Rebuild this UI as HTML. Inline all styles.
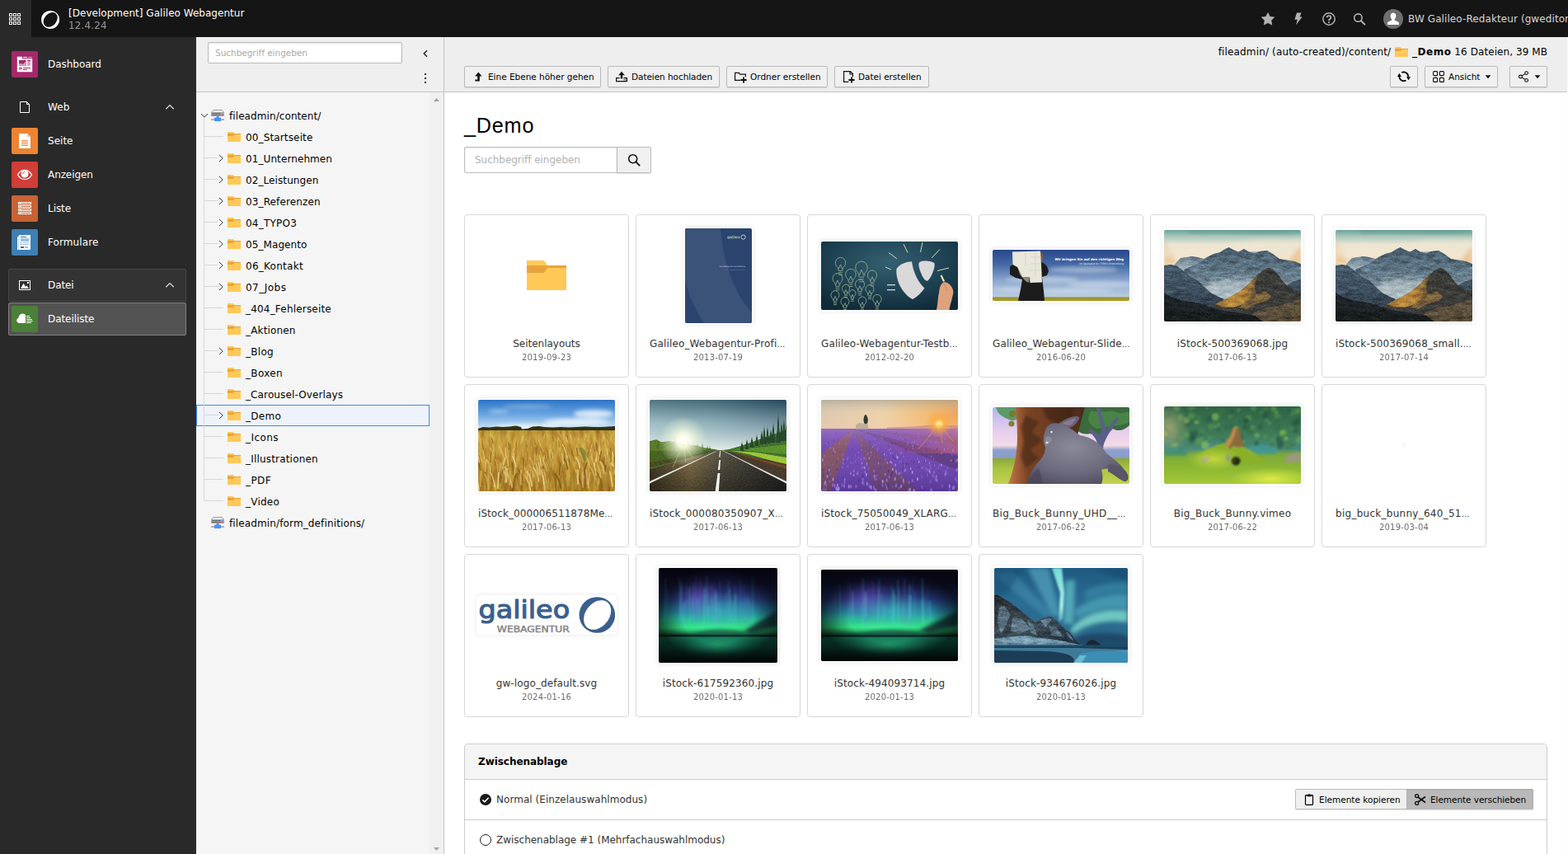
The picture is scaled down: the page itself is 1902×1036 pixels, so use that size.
<!DOCTYPE html>
<html lang="de">
<head>
<meta charset="utf-8">
<title>[Development] Galileo Webagentur - TYPO3 CMS 12.4.24</title>
<style>
*{box-sizing:border-box}
html,body{margin:0;padding:0}
html{overflow:hidden}
body{width:1902px;height:1036px;overflow:hidden;position:relative;background:#fff;font-family:"DejaVu Sans","Liberation Sans",Verdana,sans-serif;font-size:12px;line-height:18px;color:#000}
.abs{position:absolute}
svg{display:block}
/* topbar */
#topbar{position:absolute;left:0;top:0;width:1902px;height:45px;background:#151515;color:#fff;overflow:hidden}
#toggle{position:absolute;left:0;top:0;width:38px;height:45px;background:#292929}
#sitename{position:absolute;left:83px;top:8px;font-size:12px;line-height:16px;white-space:nowrap;color:#fff}
#sitever{position:absolute;left:83px;top:23px;font-size:12px;line-height:16px;color:#fff;opacity:.55;white-space:nowrap}
#user{position:absolute;left:1708px;top:15px;font-size:12px;line-height:16px;white-space:nowrap;color:#d6d6d6}
/* module menu */
#modmenu{position:absolute;left:0;top:45px;width:238px;height:991px;background:#292929;border-right:1px solid #2f2f2f;color:#fff}
.mm{position:absolute;left:10px;width:216px;height:40px;border:1px solid transparent;border-radius:2px}
.mm .ic{position:absolute;left:3px;top:3px;width:32px;height:32px;border-radius:2px}
.mm .lb{position:absolute;left:47px;top:10px;font-size:12px;line-height:18px;white-space:nowrap;color:#fff}
.mm .chev{position:absolute;left:187px;top:11px}
/* nav tree */
#nav{position:absolute;left:238px;top:45px;width:301px;height:991px;background:#f5f5f5;border-right:1px solid #c3c3c3}
#navtool{position:absolute;left:0;top:0;width:300px;height:67px;background:#efefef;border-bottom:1px solid #c3c3c3}
#navsearch{position:absolute;left:14px;top:6px;width:236px;height:26px;border:1px solid #bbb;border-radius:2px;background:#fff;box-shadow:inset 0 1px 2px rgba(0,0,0,.09);font-size:10.5px;line-height:24px;padding-left:8px;color:#aaa;white-space:nowrap}
#navscroll{position:absolute;left:283px;top:67px;width:17px;height:924px;background:#f0f0f0}
.tr{position:absolute;left:0;width:283px;height:26px;font-size:12px;line-height:26px;white-space:nowrap;color:#000}
.tr .tx{position:absolute;top:1px}
.tr .fi{position:absolute;top:5px}
.tr .cv{position:absolute;top:8px}
.tr.sel{background:#eef3fb;border:1px solid #3b8de5}
.tl{position:absolute;background:#d7d7d7}
/* content */
#content{position:absolute;left:539px;top:45px;width:1362px;height:991px;background:#fff;overflow:hidden}
#dochead{position:absolute;left:0;top:0;width:1362px;height:67px;background:#eee;border-bottom:1px solid #c3c3c3}
#path{position:absolute;right:24px;top:9px;font-size:12px;line-height:18px;white-space:nowrap;color:#000}
.btn{position:absolute;top:35px;height:26px;border:1px solid #bbb;border-radius:2px;background:#f0f0f0;box-shadow:0 1px 1px rgba(0,0,0,.12);font-size:10.5px;line-height:24px;white-space:nowrap;color:#000}
.btn .bi{position:absolute;top:4px}
.btn .bt{position:absolute;top:0}
h1{position:absolute;left:24px;top:87px;margin:0;font-family:"Liberation Sans","DejaVu Sans",sans-serif;font-size:25.2px;line-height:40px;letter-spacing:.8px;font-weight:400;white-space:nowrap}
#search{position:absolute;left:24px;top:133px;width:186px;height:32px;border:1px solid #bbb;border-radius:2px 0 0 2px;background:#fff;box-shadow:inset 0 1px 2px rgba(0,0,0,.09);font-size:12px;line-height:30px;padding-left:12px;color:#b2b2b2;white-space:nowrap}
#searchbtn{position:absolute;left:209px;top:133px;width:42px;height:32px;border:1px solid #bbb;border-radius:0 2px 2px 0;background:#f0f0f0;box-shadow:0 1px 1px rgba(0,0,0,.12)}
.card{position:absolute;width:200px;height:198px;border:1px solid #d7d7d7;border-radius:4px;background:#fff}
.card .pv{position:absolute;left:16px;top:15px;width:166px;height:116px}
.card .th{position:absolute;border-radius:2px;box-shadow:0 0 0 2px #fff,0 0 5px 3px rgba(0,0,0,.07);overflow:hidden}
.card .nm{position:absolute;left:0;top:147px;width:198px;text-align:center;font-size:12px;line-height:18px;color:#333;white-space:nowrap}
.card .dt{position:absolute;left:0;top:163px;width:198px;text-align:center;font-size:10px;line-height:20px;color:#000;opacity:.6;white-space:nowrap}
#panel{position:absolute;left:24px;top:857px;width:1314px;height:200px;border:1px solid #ccc;border-radius:4px;background:#fff}
#panelhead{position:absolute;left:0;top:0;width:1312px;height:43px;background:#f5f5f5;border-bottom:1px solid #ccc;border-radius:3px 3px 0 0}
#paneltitle{position:absolute;left:16px;top:12px;font-weight:700;font-size:12px;line-height:18px;white-space:nowrap}
.prow{position:absolute;left:0;width:1312px;height:49px;border-bottom:1px solid #ccc}
.prow .rt{position:absolute;left:38px;top:15px;font-size:12px;line-height:18px;color:#333;white-space:nowrap}
.prow .ri{position:absolute;left:17px;top:16px}
</style>
</head>
<body>

<svg width="0" height="0" style="position:absolute"><defs><filter id="txmt" x="0" y="0" width="100%" height="100%" color-interpolation-filters="sRGB"><feTurbulence type="fractalNoise" baseFrequency="0.09 0.22" numOctaves="4" seed="4"/><feColorMatrix type="matrix" values="0.6 0.6 0.6 0 -0.4  0.6 0.6 0.6 0 -0.4  0.6 0.6 0.6 0 -0.4  0 0 0 0 0.4" result="n0"/><feBlend in="n0" in2="SourceGraphic" mode="overlay" result="b0"/><feTurbulence type="fractalNoise" baseFrequency="0.5 0.9" numOctaves="3" seed="9"/><feColorMatrix type="matrix" values="0.7 0.7 0.7 0 -0.55  0.7 0.7 0.7 0 -0.55  0.7 0.7 0.7 0 -0.55  0 0 0 0 0.4" result="n1"/><feBlend in="n1" in2="b0" mode="soft-light" result="b1"/><feComposite in="b1" in2="SourceGraphic" operator="in"/></filter><filter id="txrd" x="0" y="0" width="100%" height="100%" color-interpolation-filters="sRGB"><feTurbulence type="fractalNoise" baseFrequency="0.5 0.9" numOctaves="3" seed="9"/><feColorMatrix type="matrix" values="0.7 0.7 0.7 0 -0.55  0.7 0.7 0.7 0 -0.55  0.7 0.7 0.7 0 -0.55  0 0 0 0 0.3" result="n0"/><feBlend in="n0" in2="SourceGraphic" mode="soft-light" result="b0"/><feComposite in="b0" in2="SourceGraphic" operator="in"/></filter><filter id="txwh" x="0" y="0" width="100%" height="100%" color-interpolation-filters="sRGB"><feTurbulence type="fractalNoise" baseFrequency="0.25 0.06" numOctaves="3" seed="12"/><feColorMatrix type="matrix" values="0.6 0.6 0.6 0 -0.4  0.6 0.6 0.6 0 -0.4  0.6 0.6 0.6 0 -0.4  0 0 0 0 0.4" result="n0"/><feBlend in="n0" in2="SourceGraphic" mode="overlay" result="b0"/><feComposite in="b0" in2="SourceGraphic" operator="in"/></filter></defs></svg>
<div id="topbar">
<div id="toggle"><svg class="abs" style="left:10px;top:15px" width="16" height="16" viewBox="0 0 16 16"><g fill="none" stroke="#fff" stroke-width="1"><rect x="1.5" y="1.5" width="3" height="3"/><rect x="6.5" y="1.5" width="3" height="3"/><rect x="11.5" y="1.5" width="3" height="3"/><rect x="1.5" y="6.5" width="3" height="3"/><rect x="6.5" y="6.5" width="3" height="3"/><rect x="11.5" y="6.5" width="3" height="3"/><rect x="1.5" y="11.5" width="3" height="3"/><rect x="6.5" y="11.5" width="3" height="3"/><rect x="11.5" y="11.5" width="3" height="3"/></g></svg></div>
<svg class="abs" style="left:48px;top:11px" width="26" height="26" viewBox="0 0 26 26"><circle cx="13.1" cy="12.9" r="11" fill="#fff"/><ellipse cx="13.2" cy="12.9" rx="9.9" ry="7.4" transform="rotate(-50 13.2 12.9)" fill="#151515"/></svg>
<div id="sitename"><span style="letter-spacing:0.027px">[Development] Galileo Webagentur</span></div>
<div id="sitever"><span style="letter-spacing:0.156px">12.4.24</span></div>
<svg class="abs" style="left:1530px;top:15px" width="16" height="16" viewBox="0 0 16 16"><path d="M8 0.6 L10.3 5.3 L15.6 6 L11.8 9.7 L12.7 15 L8 12.5 L3.3 15 L4.2 9.7 L0.4 6 L5.7 5.3z" fill="#b3b3b3" stroke="#b3b3b3" stroke-width=".8" stroke-linejoin="round"/></svg>
<svg class="abs" style="left:1567px;top:15px" width="16" height="16" viewBox="0 0 16 16"><path d="M6 0.6 H11.6 L9.6 5.4 H12.6 L5 15.4 L6.8 8.8 H3.4z" fill="#b3b3b3"/></svg>
<svg class="abs" style="left:1604px;top:15px" width="16" height="16" viewBox="0 0 16 16"><circle cx="8" cy="8" r="7.2" fill="none" stroke="#b3b3b3" stroke-width="1.5"/><path d="M5.6 6.3 C5.6 3.3 10.4 3.3 10.4 6.2 C10.4 8 8 8 8 9.9" fill="none" stroke="#b3b3b3" stroke-width="1.8"/><circle cx="8" cy="12.1" r="1.15" fill="#b3b3b3"/></svg>
<svg class="abs" style="left:1641px;top:15px" width="16" height="16" viewBox="0 0 16 16"><circle cx="6.4" cy="6.6" r="4.7" fill="none" stroke="#b3b3b3" stroke-width="1.6"/><path d="M10 10.2 L14.4 14.6" stroke="#b3b3b3" stroke-width="2" stroke-linecap="round"/></svg>
<svg class="abs" style="left:1678px;top:11px" width="24" height="24" viewBox="0 0 24 24"><circle cx="12" cy="12" r="12" fill="#6e6e6e"/><path d="M12 4.5 C14.2 4.5 15.3 6 15.3 8.2 C15.3 10 14.6 11.6 13.6 12.6 L13.6 13.6 C15 14.4 18.6 15 19 17 L19 19 H5 L5 17 C5.4 15 9 14.4 10.4 13.6 L10.4 12.6 C9.4 11.6 8.7 10 8.7 8.2 C8.7 6 9.8 4.5 12 4.5z" fill="#fff"/></svg>
<div id="user"><span style="letter-spacing:0.092px">BW Galileo-Redakteur (gweditor)</span></div>
</div>

<div id="modmenu">
<div class="mm" style="top:13px"><div class="ic" style="background:#a5286b"><svg width="32" height="32" viewBox="0 0 32 32"><path d="M6.8 6.8H13V9H25.2V25.2H6.8z" fill="#fff"/><rect x="14" y="7" width="5" height="1" fill="#fff"/><rect x="20" y="7" width="5" height="1" fill="#fff" opacity=".6"/><rect x="9" y="11" width="8.8" height="6.8" fill="#a5286b"/><path d="M9 17.8V15.6L11 14.8L13 15.8L15 15.2L17.8 11.6V17.8z" fill="#dc9fc0"/><rect x="19" y="11" width="4" height="6.8" fill="#dc9fc0"/><rect x="19" y="11" width="4" height="1" fill="#a5286b"/><rect x="9" y="20" width="3.8" height="3" fill="#dc9fc0"/><rect x="9" y="20" width="3.8" height="1" fill="#a5286b"/><rect x="14" y="20" width="9" height="1" fill="#a5286b"/><rect x="14" y="22" width="5" height="1" fill="#a5286b"/></svg></div><div class="lb"><span style="letter-spacing:-0.024px">Dashboard</span></div></div>
<div class="mm" style="top:65px"><svg class="abs" style="left:11px;top:11px" width="16" height="16" viewBox="0 0 16 16"><path d="M2.5 1.5H10.5L13.5 4.5V14.5H2.5z M10.5 1.5V4.5H13.5" fill="none" stroke="#fff" stroke-width="1" stroke-linejoin="round"/></svg><div class="lb"><span style="letter-spacing:0.111px">Web</span></div><svg class="chev" width="16" height="16" viewBox="0 0 16 16"><path d="M3.3 10.2 L8 5.6 L12.7 10.2" fill="none" stroke="#e0e0e0" stroke-width="1.2"/></svg></div>
<div class="mm" style="top:106px"><div class="ic" style="background:#ee8432"><svg width="32" height="32" viewBox="0 0 32 32"><path d="M9 7H19L23 11V25H9z" fill="#fff"/><path d="M19 7L23 11H19z" fill="#f7c79f"/><rect x="12" y="15" width="8" height="1" fill="#ee8432"/><rect x="12" y="17" width="8" height="1" fill="#ee8432"/><rect x="12" y="19" width="8" height="1" fill="#ee8432"/><rect x="12" y="21" width="8" height="1" fill="#ee8432"/></svg></div><div class="lb"><span style="letter-spacing:0.021px">Seite</span></div></div>
<div class="mm" style="top:147px"><div class="ic" style="background:#d13d37"><svg width="32" height="32" viewBox="0 0 32 32"><path d="M7.4 16 C10 11.8 13 10.4 16 10.4 C19 10.4 22 11.8 24.6 16 C22 20.2 19 21.6 16 21.6 C13 21.6 10 20.2 7.4 16z" fill="none" stroke="#fff" stroke-width="1.3"/><circle cx="16" cy="15" r="4.5" fill="#fff"/><path d="M13.6 14.6 C13.7 13.2 14.6 12.4 15.9 12.3" fill="none" stroke="#d13d37" stroke-width="1" stroke-linecap="round"/></svg></div><div class="lb"><span style="letter-spacing:-0.083px">Anzeigen</span></div></div>
<div class="mm" style="top:188px"><div class="ic" style="background:#c96334"><svg width="32" height="32" viewBox="0 0 32 32"><g fill="#fff"><rect x="8" y="8" width="16" height="3"/><rect x="8" y="12" width="16" height="3"/><rect x="8" y="16" width="16" height="3"/><rect x="8" y="20" width="16" height="3"/></g><g fill="#c96334"><rect x="9" y="9" width="1" height="1"/><rect x="11" y="9" width="12" height="1" rx=".5"/><rect x="9" y="13" width="1" height="1"/><rect x="11" y="13" width="12" height="1" rx=".5"/><rect x="9" y="17" width="1" height="1"/><rect x="11" y="17" width="12" height="1" rx=".5"/><rect x="9" y="21" width="1" height="1"/><rect x="11" y="21" width="12" height="1" rx=".5"/></g></svg></div><div class="lb"><span style="letter-spacing:-0.051px">Liste</span></div></div>
<div class="mm" style="top:229px"><div class="ic" style="background:#3d80b5"><svg width="32" height="32" viewBox="0 0 32 32"><rect x="7" y="9" width="2" height="16" fill="#fff"/><rect x="8.3" y="8" width="1" height="17" fill="#9ec0dc"/><rect x="9" y="7" width="14" height="18" fill="#fff"/><rect x="11" y="9" width="7" height="1" fill="#2a6ea6"/><rect x="11" y="11" width="10" height="4" fill="#9ec0dc"/><rect x="11" y="16" width="1" height="1" fill="#2a6ea6"/><rect x="13" y="16" width="8" height="1" fill="#9ec0dc"/><rect x="11" y="18" width="1" height="1" fill="#2a6ea6"/><rect x="13" y="18" width="8" height="1" fill="#9ec0dc"/><rect x="11" y="21" width="4" height="2" fill="#2a6ea6"/><rect x="16" y="21" width="4" height="2" fill="#9ec0dc"/></svg></div><div class="lb"><span style="letter-spacing:0.087px">Formulare</span></div></div>
<div class="mm" style="top:281px;background:#333;border-color:#484848"><svg class="abs" style="left:11px;top:11px" width="16" height="16" viewBox="0 0 16 16"><rect x="1.5" y="2.5" width="13" height="11" fill="none" stroke="#fff" stroke-width="1"/><path d="M3 12L6.6 5.8L9 10L10.2 8.2L13 12z" fill="#fff"/><rect x="11" y="4" width="2" height="2" fill="#fff"/></svg><div class="lb"><span style="letter-spacing:-0.077px">Datei</span></div><svg class="chev" width="16" height="16" viewBox="0 0 16 16"><path d="M3.3 10.2 L8 5.6 L12.7 10.2" fill="none" stroke="#e0e0e0" stroke-width="1.2"/></svg></div>
<div class="mm" style="top:322px;background:#535353;border-color:#808080"><div class="ic" style="background:#4a8037"><svg width="32" height="32" viewBox="0 0 32 32"><path d="M17 21H9.6 C7.6 21 6.2 19.6 6.2 17.8 C6.2 16.2 7.2 15.2 8.4 14.8 C8.6 11.8 10.8 9.4 13.4 9.4 C15.4 9.4 16.6 10.4 17 11.2z" fill="#fff"/><g fill="#fff"><rect x="18" y="12" width="4" height="1"/><rect x="18" y="14" width="5" height="1"/><rect x="18" y="16" width="7" height="1"/><rect x="18" y="18" width="7.6" height="1"/><rect x="18" y="20" width="6" height="1"/></g></svg></div><div class="lb"><span style="letter-spacing:-0.068px">Dateiliste</span></div></div>
</div>

<div id="nav">
<div id="navtool">
<div id="navsearch"><span style="letter-spacing:-0.026px">Suchbegriff eingeben</span></div>
<svg class="abs" style="left:270px;top:12px" width="16" height="16" viewBox="0 0 16 16"><path d="M10 4.2 L6.2 8 L10 11.8" fill="none" stroke="#1a1a1a" stroke-width="1.3"/></svg>
<svg class="abs" style="left:270px;top:42px" width="16" height="16" viewBox="0 0 16 16"><rect x="7" y="2" width="2" height="2" fill="#1a1a1a"/><rect x="7" y="7" width="2" height="2" fill="#1a1a1a"/><rect x="7" y="12" width="2" height="2" fill="#1a1a1a"/></svg>
</div>
<div id="navscroll"><svg class="abs" style="left:5px;top:7px" width="7" height="4" viewBox="0 0 7 4"><path d="M0 4 L3.5 0 L7 4z" fill="#a3a3a3"/></svg><svg class="abs" style="left:5px;top:916px" width="7" height="4" viewBox="0 0 7 4"><path d="M0 0 L3.5 4 L7 0z" fill="#a3a3a3"/></svg></div>
<div class="tr" style="top:82px"><svg class="cv" style="left:5px" width="10" height="10" viewBox="0 0 10 10"><path d="M1 3 L5 7.2 L9 3" fill="none" stroke="#3a3a3a" stroke-width="1"/></svg><svg class="fi" style="left:18px" width="16" height="16" viewBox="0 0 16 16"><path d="M2.7 1.5h10.6l2.2 3.2H0.5z" fill="#f4f4f4" stroke="#9c9c9c" stroke-width="1"/><rect x="0" y="4.2" width="16" height="4.8" fill="#ababab"/><rect x="1" y="5" width="10.6" height="1.1" fill="#6a6a6a"/><rect x="1" y="7" width="10.6" height="1.1" fill="#6a6a6a"/><rect x="12.6" y="5" width="2" height="1.1" fill="#59f"/><rect x="12.6" y="7" width="2" height="1.1" fill="#e22"/><rect x="0" y="12.2" width="16" height="1.8" fill="#adadad"/><rect x="6.4" y="9" width="3.2" height="2" fill="#4b91f7"/><rect x="4" y="10.6" width="8" height="4.5" fill="#4b91f7"/></svg>
<span class="tx" style="left:40px"><span style="letter-spacing:0.085px">fileadmin/content/</span></span></div>
<div class="tr" style="top:108px"><svg class="fi" style="left:38px" width="16" height="16" viewBox="0 0 16 16"><path d="M16 4v10H0V2h7l1.33 2z" fill="#ffc857"/><path d="M16 5H8.33L7 7H0V4h16z" fill="#e8a33d"/></svg><span class="tx" style="left:60px"><span style="letter-spacing:0.141px">00_Startseite</span></span></div>
<div class="tr" style="top:134px"><svg class="cv" style="left:25px" width="10" height="10" viewBox="0 0 10 10"><path d="M3 1 L7.2 5 L3 9" fill="none" stroke="#3a3a3a" stroke-width="1"/></svg><svg class="fi" style="left:38px" width="16" height="16" viewBox="0 0 16 16"><path d="M16 4v10H0V2h7l1.33 2z" fill="#ffc857"/><path d="M16 5H8.33L7 7H0V4h16z" fill="#e8a33d"/></svg><span class="tx" style="left:60px"><span style="letter-spacing:0.093px">01_Unternehmen</span></span></div>
<div class="tr" style="top:160px"><svg class="cv" style="left:25px" width="10" height="10" viewBox="0 0 10 10"><path d="M3 1 L7.2 5 L3 9" fill="none" stroke="#3a3a3a" stroke-width="1"/></svg><svg class="fi" style="left:38px" width="16" height="16" viewBox="0 0 16 16"><path d="M16 4v10H0V2h7l1.33 2z" fill="#ffc857"/><path d="M16 5H8.33L7 7H0V4h16z" fill="#e8a33d"/></svg><span class="tx" style="left:60px"><span style="letter-spacing:0.091px">02_Leistungen</span></span></div>
<div class="tr" style="top:186px"><svg class="cv" style="left:25px" width="10" height="10" viewBox="0 0 10 10"><path d="M3 1 L7.2 5 L3 9" fill="none" stroke="#3a3a3a" stroke-width="1"/></svg><svg class="fi" style="left:38px" width="16" height="16" viewBox="0 0 16 16"><path d="M16 4v10H0V2h7l1.33 2z" fill="#ffc857"/><path d="M16 5H8.33L7 7H0V4h16z" fill="#e8a33d"/></svg><span class="tx" style="left:60px"><span style="letter-spacing:0.129px">03_Referenzen</span></span></div>
<div class="tr" style="top:212px"><svg class="cv" style="left:25px" width="10" height="10" viewBox="0 0 10 10"><path d="M3 1 L7.2 5 L3 9" fill="none" stroke="#3a3a3a" stroke-width="1"/></svg><svg class="fi" style="left:38px" width="16" height="16" viewBox="0 0 16 16"><path d="M16 4v10H0V2h7l1.33 2z" fill="#ffc857"/><path d="M16 5H8.33L7 7H0V4h16z" fill="#e8a33d"/></svg><span class="tx" style="left:60px"><span style="letter-spacing:0.217px">04_TYPO3</span></span></div>
<div class="tr" style="top:238px"><svg class="cv" style="left:25px" width="10" height="10" viewBox="0 0 10 10"><path d="M3 1 L7.2 5 L3 9" fill="none" stroke="#3a3a3a" stroke-width="1"/></svg><svg class="fi" style="left:38px" width="16" height="16" viewBox="0 0 16 16"><path d="M16 4v10H0V2h7l1.33 2z" fill="#ffc857"/><path d="M16 5H8.33L7 7H0V4h16z" fill="#e8a33d"/></svg><span class="tx" style="left:60px"><span style="letter-spacing:0.083px">05_Magento</span></span></div>
<div class="tr" style="top:264px"><svg class="cv" style="left:25px" width="10" height="10" viewBox="0 0 10 10"><path d="M3 1 L7.2 5 L3 9" fill="none" stroke="#3a3a3a" stroke-width="1"/></svg><svg class="fi" style="left:38px" width="16" height="16" viewBox="0 0 16 16"><path d="M16 4v10H0V2h7l1.33 2z" fill="#ffc857"/><path d="M16 5H8.33L7 7H0V4h16z" fill="#e8a33d"/></svg><span class="tx" style="left:60px"><span style="letter-spacing:0.266px">06_Kontakt</span></span></div>
<div class="tr" style="top:290px"><svg class="cv" style="left:25px" width="10" height="10" viewBox="0 0 10 10"><path d="M3 1 L7.2 5 L3 9" fill="none" stroke="#3a3a3a" stroke-width="1"/></svg><svg class="fi" style="left:38px" width="16" height="16" viewBox="0 0 16 16"><path d="M16 4v10H0V2h7l1.33 2z" fill="#ffc857"/><path d="M16 5H8.33L7 7H0V4h16z" fill="#e8a33d"/></svg><span class="tx" style="left:60px"><span style="letter-spacing:0.478px">07_Jobs</span></span></div>
<div class="tr" style="top:316px"><svg class="fi" style="left:38px" width="16" height="16" viewBox="0 0 16 16"><path d="M16 4v10H0V2h7l1.33 2z" fill="#ffc857"/><path d="M16 5H8.33L7 7H0V4h16z" fill="#e8a33d"/></svg><span class="tx" style="left:60px"><span style="letter-spacing:0.194px">_404_Fehlerseite</span></span></div>
<div class="tr" style="top:342px"><svg class="fi" style="left:38px" width="16" height="16" viewBox="0 0 16 16"><path d="M16 4v10H0V2h7l1.33 2z" fill="#ffc857"/><path d="M16 5H8.33L7 7H0V4h16z" fill="#e8a33d"/></svg><span class="tx" style="left:60px"><span style="letter-spacing:0.162px">_Aktionen</span></span></div>
<div class="tr" style="top:368px"><svg class="cv" style="left:25px" width="10" height="10" viewBox="0 0 10 10"><path d="M3 1 L7.2 5 L3 9" fill="none" stroke="#3a3a3a" stroke-width="1"/></svg><svg class="fi" style="left:38px" width="16" height="16" viewBox="0 0 16 16"><path d="M16 4v10H0V2h7l1.33 2z" fill="#ffc857"/><path d="M16 5H8.33L7 7H0V4h16z" fill="#e8a33d"/></svg><span class="tx" style="left:60px"><span style="letter-spacing:0.277px">_Blog</span></span></div>
<div class="tr" style="top:394px"><svg class="fi" style="left:38px" width="16" height="16" viewBox="0 0 16 16"><path d="M16 4v10H0V2h7l1.33 2z" fill="#ffc857"/><path d="M16 5H8.33L7 7H0V4h16z" fill="#e8a33d"/></svg><span class="tx" style="left:60px"><span style="letter-spacing:0.346px">_Boxen</span></span></div>
<div class="tr" style="top:420px"><svg class="fi" style="left:38px" width="16" height="16" viewBox="0 0 16 16"><path d="M16 4v10H0V2h7l1.33 2z" fill="#ffc857"/><path d="M16 5H8.33L7 7H0V4h16z" fill="#e8a33d"/></svg><span class="tx" style="left:60px"><span style="letter-spacing:0.12px">_Carousel-Overlays</span></span></div>
<div class="tr sel" style="top:446px"><div class="abs" style="left:-1px;top:-1px;width:283px;height:26px"><svg class="cv" style="left:25px" width="10" height="10" viewBox="0 0 10 10"><path d="M3 1 L7.2 5 L3 9" fill="none" stroke="#3a3a3a" stroke-width="1"/></svg><svg class="fi" style="left:38px" width="16" height="16" viewBox="0 0 16 16"><path d="M16 4v10H0V2h7l1.33 2z" fill="#ffc857"/><path d="M16 5H8.33L7 7H0V4h16z" fill="#e8a33d"/></svg><span class="tx" style="left:60px"><span style="letter-spacing:0.268px">_Demo</span></span></div></div>
<div class="tr" style="top:472px"><svg class="fi" style="left:38px" width="16" height="16" viewBox="0 0 16 16"><path d="M16 4v10H0V2h7l1.33 2z" fill="#ffc857"/><path d="M16 5H8.33L7 7H0V4h16z" fill="#e8a33d"/></svg><span class="tx" style="left:60px"><span style="letter-spacing:0.455px">_Icons</span></span></div>
<div class="tr" style="top:498px"><svg class="fi" style="left:38px" width="16" height="16" viewBox="0 0 16 16"><path d="M16 4v10H0V2h7l1.33 2z" fill="#ffc857"/><path d="M16 5H8.33L7 7H0V4h16z" fill="#e8a33d"/></svg><span class="tx" style="left:60px"><span style="letter-spacing:0.186px">_Illustrationen</span></span></div>
<div class="tr" style="top:524px"><svg class="fi" style="left:38px" width="16" height="16" viewBox="0 0 16 16"><path d="M16 4v10H0V2h7l1.33 2z" fill="#ffc857"/><path d="M16 5H8.33L7 7H0V4h16z" fill="#e8a33d"/></svg><span class="tx" style="left:60px"><span style="letter-spacing:0.41px">_PDF</span></span></div>
<div class="tr" style="top:550px"><svg class="fi" style="left:38px" width="16" height="16" viewBox="0 0 16 16"><path d="M16 4v10H0V2h7l1.33 2z" fill="#ffc857"/><path d="M16 5H8.33L7 7H0V4h16z" fill="#e8a33d"/></svg><span class="tx" style="left:60px"><span style="letter-spacing:0.236px">_Video</span></span></div>
<div class="tr" style="top:576px"><svg class="fi" style="left:18px" width="16" height="16" viewBox="0 0 16 16"><path d="M2.7 1.5h10.6l2.2 3.2H0.5z" fill="#f4f4f4" stroke="#9c9c9c" stroke-width="1"/><rect x="0" y="4.2" width="16" height="4.8" fill="#ababab"/><rect x="1" y="5" width="10.6" height="1.1" fill="#6a6a6a"/><rect x="1" y="7" width="10.6" height="1.1" fill="#6a6a6a"/><rect x="12.6" y="5" width="2" height="1.1" fill="#59f"/><rect x="12.6" y="7" width="2" height="1.1" fill="#e22"/><rect x="0" y="12.2" width="16" height="1.8" fill="#adadad"/><rect x="6.4" y="9" width="3.2" height="2" fill="#4b91f7"/><rect x="4" y="10.6" width="8" height="4.5" fill="#4b91f7"/></svg>
<span class="tx" style="left:40px"><span style="letter-spacing:0.131px">fileadmin/form_definitions/</span></span></div>
<div class="tl" style="left:9px;top:98px;width:1px;height:464px"></div>
<div class="tl" style="left:9px;top:120px;width:24px;height:1px"></div>
<div class="tl" style="left:9px;top:146px;width:18px;height:1px"></div>
<div class="tl" style="left:9px;top:172px;width:18px;height:1px"></div>
<div class="tl" style="left:9px;top:198px;width:18px;height:1px"></div>
<div class="tl" style="left:9px;top:224px;width:18px;height:1px"></div>
<div class="tl" style="left:9px;top:250px;width:18px;height:1px"></div>
<div class="tl" style="left:9px;top:276px;width:18px;height:1px"></div>
<div class="tl" style="left:9px;top:302px;width:18px;height:1px"></div>
<div class="tl" style="left:9px;top:328px;width:24px;height:1px"></div>
<div class="tl" style="left:9px;top:354px;width:24px;height:1px"></div>
<div class="tl" style="left:9px;top:380px;width:18px;height:1px"></div>
<div class="tl" style="left:9px;top:406px;width:24px;height:1px"></div>
<div class="tl" style="left:9px;top:432px;width:24px;height:1px"></div>
<div class="tl" style="left:9px;top:458px;width:18px;height:1px"></div>
<div class="tl" style="left:9px;top:484px;width:24px;height:1px"></div>
<div class="tl" style="left:9px;top:510px;width:24px;height:1px"></div>
<div class="tl" style="left:9px;top:536px;width:24px;height:1px"></div>
<div class="tl" style="left:9px;top:562px;width:24px;height:1px"></div>
</div>
<div id="content">
<div id="dochead">
<div id="path"><span style="letter-spacing:0.154px">fileadmin/ (auto-created)/content/ </span><svg style="display:inline-block;vertical-align:-4px;margin:0 1px" width="16" height="16" viewBox="0 0 16 16"><path d="M16 4v10H0V2h7l1.33 2z" fill="#ffc857"/><path d="M16 5H8.33L7 7H0V4h16z" fill="#e8a33d"/></svg> <b><span style="letter-spacing:0.51px">_Demo</span></b><span style="letter-spacing:0.073px"> 16 Dateien, 39 MB</span></div>
<div class="btn" style="left:24px;width:166px"><svg class="bi" style="left:8px" width="16" height="16" viewBox="0 0 16 16"><path d="M8.3 2.6 L12.6 7.6 H9.8 V13.6 H4.4 V11.6 H7.2 V7.6 H4.2z" fill="#111"/></svg><span class="bt" style="left:28px"><span style="letter-spacing:-0.016px">Eine Ebene höher gehen</span></span></div>
<div class="btn" style="left:198px;width:136px"><svg class="bi" style="left:8px" width="16" height="16" viewBox="0 0 16 16"><path d="M8 1.8 L11.8 6.2 H9.2 V10.4 H6.8 V6.2 H4.2z" fill="#111"/><path d="M5.6 9.6 H1.6 V13.6 H14.4 V9.6 H10.4" fill="none" stroke="#111" stroke-width="1.2"/><rect x="10.4" y="11.2" width="1.1" height="1.1" fill="#111"/><rect x="12.2" y="11.2" width="1.1" height="1.1" fill="#111"/></svg><span class="bt" style="left:28px"><span style="letter-spacing:-0.062px">Dateien hochladen</span></span></div>
<div class="btn" style="left:342px;width:123px"><svg class="bi" style="left:8px" width="16" height="16" viewBox="0 0 16 16"><path d="M8.4 12.4 H1.6 V3.4 H6.4 L7.6 5.2 H14.4 V8.2" fill="none" stroke="#111" stroke-width="1.2"/><path d="M12 8.4 V15.6 M8.4 12 H15.6" stroke="#111" stroke-width="1.9"/></svg><span class="bt" style="left:28px"><span style="letter-spacing:0.002px">Ordner erstellen</span></span></div>
<div class="btn" style="left:473px;width:115px"><svg class="bi" style="left:8px" width="16" height="16" viewBox="0 0 16 16"><path d="M8.4 14.4 H2.6 V1.6 H10.4 L13.4 4.6 V8.2 M10 1.6 V5 H13.4" fill="none" stroke="#111" stroke-width="1.2"/><path d="M12 8.4 V15.6 M8.4 12 H15.6" stroke="#111" stroke-width="1.9"/></svg><span class="bt" style="left:28px"><span style="letter-spacing:-0.032px">Datei erstellen</span></span></div>
<div class="btn" style="left:1147px;width:34px"><svg class="bi" style="left:8px" width="16" height="16" viewBox="0 0 16 16"><path d="M2.4 7.9 A5.3 5.3 0 0 0 10.4 12.4 M5.2 3.1 A5.3 5.3 0 0 1 13.1 8" fill="none" stroke="#000" stroke-width="1.7"/><path d="M0 7.9 H4.9 L2.4 3.8z M11 8.2 H16 L13.5 12.2z" fill="#000"/></svg></div>
<div class="btn" style="left:1189px;width:89px"><svg class="bi" style="left:8px" width="16" height="16" viewBox="0 0 16 16"><g fill="none" stroke="#111" stroke-width="1.1"><rect x="1.6" y="1.6" width="5" height="5" rx="1"/><rect x="9.4" y="1.6" width="5" height="5" rx="1"/><rect x="1.6" y="9.4" width="5" height="5" rx="1"/><rect x="9.4" y="9.4" width="5" height="5" rx="1"/></g></svg><span class="bt" style="left:28px"><span style="letter-spacing:-0.049px">Ansicht</span></span><svg class="abs" style="left:72px;top:10px" width="8" height="5" viewBox="0 0 8 5"><path d="M0.6 0.2H7.4L4 4.2z" fill="#111"/></svg></div>
<div class="btn" style="left:1292px;width:46px"><svg class="bi" style="left:8px" width="16" height="16" viewBox="0 0 16 16"><g fill="none" stroke="#111" stroke-width="1.1"><circle cx="4.4" cy="8" r="1.9"/><circle cx="11.6" cy="3.6" r="1.9"/><circle cx="11.6" cy="12.4" r="1.9"/><path d="M6 7L10 4.6M6 9L10 11.4"/></g></svg><svg class="abs" style="left:29px;top:10px" width="8" height="5" viewBox="0 0 8 5"><path d="M0.6 0.2H7.4L4 4.2z" fill="#111"/></svg></div>
</div>

<h1>_Demo</h1>
<div id="search"><span style="letter-spacing:-0.03px">Suchbegriff eingeben</span></div><div id="searchbtn"><svg class="abs" style="left:12px;top:7px" width="16" height="16" viewBox="0 0 16 16"><circle cx="6.7" cy="6.7" r="5" fill="none" stroke="#111" stroke-width="1.6"/><path d="M10.4 10.4 L14.6 14.6" stroke="#111" stroke-width="2" stroke-linecap="round"/></svg></div>
<div class="card" style="left:24px;top:215px"><div class="pv"><svg class="abs" style="left:59px;top:34px" width="48" height="48" viewBox="0 0 16 16"><path d="M16 4v10H0V2h7l1.33 2z" fill="#ffc857"/><path d="M16 5H8.33L7 7H0V4h16z" fill="#e8a33d"/></svg></div><div class="nm"><span style="letter-spacing:-0.01px">Seitenlayouts</span></div><div class="dt"><span style="letter-spacing:0.184px">2019-09-23</span></div></div>
<div class="card" style="left:232px;top:215px"><div class="pv"><div class="th" style="left:43px;top:1px;width:81px;height:115px;"><svg width="81" height="115" viewBox="0 0 81 115" preserveAspectRatio="none"><rect width="81" height="115" fill="#2a446e"/>
<path d="M0 0H43C46 40 60 80 81 102V115H23C10 95 3 78 0 61z" fill="#3b5279"/>
<text x="51" y="11.6" font-family="DejaVu Sans, Liberation Sans, sans-serif" font-weight="400" font-size="4.2" fill="#dfe5ee" textLength="15.5" lengthAdjust="spacingAndGlyphs">galileo</text>
<text x="54.5" y="13.3" font-family="DejaVu Sans, Liberation Sans, sans-serif" font-size="1.5" fill="#8fae5a" textLength="12" lengthAdjust="spacingAndGlyphs">WEBAGENTUR</text>
<circle cx="70.6" cy="10.6" r="2.6" fill="none" stroke="#dfe5ee" stroke-width=".8"/>
<text x="41.7" y="46.9" font-family="DejaVu Sans, Liberation Sans, sans-serif" font-weight="400" font-size="2.3" fill="#d5dbe6" textLength="31.3" lengthAdjust="spacingAndGlyphs">Ihre Webagentur aus Karlsruhe</text>
<text x="47" y="51.2" font-family="DejaVu Sans, Liberation Sans, sans-serif" font-size="2" fill="#6f8fbd" textLength="26" lengthAdjust="spacingAndGlyphs">TYPO3 · Magento · Mobile Apps</text></svg></div></div><div class="nm" style="text-align:left;left:16px"><span style="letter-spacing:0.147px">Galileo_Webagentur-Profi<span style="font-size:9.82px;letter-spacing:0">…</span></span></div><div class="dt"><span style="letter-spacing:0.184px">2013-07-19</span></div></div>
<div class="card" style="left:440px;top:215px"><div class="pv"><div class="th" style="left:0px;top:17px;width:166px;height:83px;"><svg width="166" height="83" viewBox="0 0 166 83" preserveAspectRatio="none"><defs><radialGradient id="bdg" cx="50%" cy="30%" r="75%"><stop offset="0" stop-color="#356072"/><stop offset=".55" stop-color="#1f4354"/><stop offset="1" stop-color="#102a38"/></radialGradient></defs>
<rect width="166" height="83" fill="url(#bdg)"/>
<g fill="none" stroke="#a9bf9c" stroke-width=".8" opacity=".9"><path d="M20.1 31.3 a6.2 6.5 0 1 1 6.8 0 l-1.2 4.3 h-4.3 z M21.0 37.8 h5.0 M21.0 40.3 h5.0 M21.3 33.4 l2.2 -5.6 l2.2 5.6"/><path d="M45.0 38.2 a7.3 7.7 0 1 1 8.0 0 l-1.5 5.1 h-5.1 z M46.1 45.9 h5.8 M46.1 48.8 h5.8 M46.4 40.8 l2.6 -6.6 l2.6 6.6"/><path d="M32.5 45.4 a6.3 6.6 0 1 1 6.9 0 l-1.3 4.4 h-4.4 z M33.5 52.0 h5.0 M33.5 54.5 h5.0 M33.8 47.6 l2.2 -5.7 l2.2 5.7"/><path d="M58.9 45.8 a5.6 5.9 0 1 1 6.2 0 l-1.1 3.9 h-3.9 z M59.8 51.6 h4.5 M59.8 53.9 h4.5 M60.0 47.7 l2.0 -5.0 l2.0 5.0"/><path d="M16.7 50.1 a6.0 6.3 0 1 1 6.6 0 l-1.2 4.2 h-4.2 z M17.6 56.4 h4.8 M17.6 58.8 h4.8 M17.9 52.2 l2.1 -5.4 l2.1 5.4"/><path d="M43.9 56.8 a5.6 5.9 0 1 1 6.2 0 l-1.1 3.9 h-3.9 z M44.8 62.6 h4.5 M44.8 64.9 h4.5 M45.0 58.7 l2.0 -5.0 l2.0 5.0"/><path d="M27.5 60.9 a4.6 4.8 0 1 1 5.1 0 l-0.9 3.2 h-3.2 z M28.2 65.7 h3.7 M28.2 67.6 h3.7 M28.4 62.5 l1.6 -4.1 l1.6 4.1"/><path d="M56.2 62.2 a5.0 5.2 0 1 1 5.5 0 l-1.0 3.5 h-3.5 z M57.0 67.5 h4.0 M57.0 69.5 h4.0 M57.2 64.0 l1.8 -4.5 l1.8 4.5"/><path d="M35.8 66.4 a4.0 4.2 0 1 1 4.4 0 l-0.8 2.8 h-2.8 z M36.4 70.6 h3.2 M36.4 72.2 h3.2 M36.6 67.8 l1.4 -3.6 l1.4 3.6"/><path d="M14.2 69.2 a5.0 5.2 0 1 1 5.5 0 l-1.0 3.5 h-3.5 z M15.0 74.5 h4.0 M15.0 76.5 h4.0 M15.2 71.0 l1.8 -4.5 l1.8 4.5"/><path d="M26.2 77.2 a5.0 5.2 0 1 1 5.5 0 l-1.0 3.5 h-3.5 z M27.0 82.5 h4.0 M27.0 84.5 h4.0 M27.2 79.0 l1.8 -4.5 l1.8 4.5"/><path d="M47.4 76.1 a4.8 5.0 0 1 1 5.3 0 l-1.0 3.4 h-3.4 z M48.1 81.1 h3.8 M48.1 83.0 h3.8 M48.3 77.8 l1.7 -4.3 l1.7 4.3"/><path d="M65.1 74.4 a5.2 5.5 0 1 1 5.7 0 l-1.0 3.6 h-3.6 z M65.9 79.9 h4.2 M65.9 82.0 h4.2 M66.2 76.2 l1.8 -4.7 l1.8 4.7"/></g>
<path d="M82 13.5L92 21M100 3L105 13.5M123 1L120.5 13M144 9.5L134 20M78 31L85 34M141 35.5L155 32" stroke="#d6dcae" stroke-width="1" fill="none"/>
<path d="M80 52.6h10M80 58.6h10" stroke="#d9dfd6" stroke-width="1.2"/>
<path d="M91.5 33C96 27 104 24.5 110 24.3C112 38 118 50 125.5 56.5C121 63 116 67.5 111 70C103 66 96 57 93 47C91.5 42 91 37 91.5 33z" fill="#d9d9d9"/>
<path d="M118.4 27C119 24 122 23.4 126 23.4C131 23.4 136 24.4 137.5 26.5C138.6 30 135 42 129.5 47.6C127 48.5 124 45 121.5 39C119.6 34.5 118.2 30 118.4 27z" fill="#d9d9d9"/>
<path d="M144.5 41.2l2-.8l3.6 7.6l-2 .9z" fill="#ece4a8"/>
<path d="M147.5 50C151 48 155 50.5 158 54.5C160.5 58 161 62 159.5 66C158.5 72 156 78 155.5 83H140C141.5 76 141.5 68 143 62C143.5 57 144.5 52.5 147.5 50z" fill="#e0a27c"/>
<path d="M147.5 50C150 52 152 56 152.5 60" fill="none" stroke="#b87a58" stroke-width=".6"/></svg></div></div><div class="nm" style="text-align:left;left:16px"><span style="letter-spacing:0.119px">Galileo-Webagentur-Testb<span style="font-size:9.82px;letter-spacing:0">…</span></span></div><div class="dt"><span style="letter-spacing:0.184px">2012-02-20</span></div></div>
<div class="card" style="left:648px;top:215px"><div class="pv"><div class="th" style="left:0px;top:27px;width:166px;height:62px;"><svg width="166" height="62" viewBox="0 0 166 62" preserveAspectRatio="none"><defs><linearGradient id="slg" x1="0" y1="0" x2="0" y2="1"><stop offset="0" stop-color="#28468a"/><stop offset=".3" stop-color="#456aa6"/><stop offset=".62" stop-color="#8fabd0"/><stop offset=".88" stop-color="#b4c8de"/><stop offset="1" stop-color="#c4d2d8"/></linearGradient>
<filter id="slb" x="-10%" y="-30%" width="120%" height="160%"><feGaussianBlur stdDeviation="2.2"/></filter><filter id="slb2"><feGaussianBlur stdDeviation=".35"/></filter></defs>
<rect width="166" height="62" fill="url(#slg)"/>
<g filter="url(#slb)" fill="#e9eef5" opacity=".42"><ellipse cx="110" cy="24" rx="42" ry="4"/><ellipse cx="60" cy="36" rx="45" ry="4"/><ellipse cx="130" cy="42" rx="40" ry="4"/><ellipse cx="30" cy="48" rx="30" ry="3"/><ellipse cx="95" cy="50" rx="50" ry="3"/></g>
<rect y="58.2" width="166" height="3.8" fill="#a99a24"/><rect y="57.4" width="166" height="1.4" fill="#7f8a3c" opacity=".8"/>
<g filter="url(#slb2)"><path d="M21 21C24 17 30 15 34 15H58C63 15 67 20 68 26L66 31L60 33L62 50L63 62H31L34 48L36 36L28 34L21 30z" fill="#1d1b1f"/>
<path d="M27 13C29 11 33 11 35 13L34 20L28 20z" fill="#6b4a3a"/><path d="M57 4L60 3L62 8L60 15L57 14z" fill="#7a5846"/>
<path d="M24 2.5L58 1.5L59.5 27L60 39.5L45.5 40L45 33L36 33.5L30 21L24.5 18z" fill="#e9e6da"/>
<path d="M30 20L36 33.5L45 33L44 40L40 38L33 30z" fill="#8d8b78"/>
<path d="M46 9H59M46 17H59.5M45 25H59.5M52 2V33M40 3V20" stroke="#c9ccc8" stroke-width=".6" fill="none"/></g>
<text x="75.5" y="12.6" font-family="DejaVu Sans, Liberation Sans, sans-serif" font-weight="700" font-size="4.1" fill="#fff" textLength="83.5" lengthAdjust="spacingAndGlyphs">Wir bringen Sie auf den richtigen Weg</text>
<text x="105" y="17.7" font-family="DejaVu Sans, Liberation Sans, sans-serif" font-size="3" fill="#e8eef6" textLength="54" lengthAdjust="spacingAndGlyphs">Ihr Spezialist für TYPO3-Entwicklung</text></svg></div></div><div class="nm" style="text-align:left;left:16px"><span style="letter-spacing:0.129px">Galileo_Webagentur-Slide<span style="font-size:9.82px;letter-spacing:0">…</span></span></div><div class="dt"><span style="letter-spacing:0.184px">2016-06-20</span></div></div>
<div class="card" style="left:856px;top:215px"><div class="pv"><div class="th" style="left:0px;top:3px;width:166px;height:111px;"><svg width="166" height="111" viewBox="0 0 166 111" preserveAspectRatio="none"><defs><linearGradient id="mtsky" x1="0" y1="0" x2="0" y2="1"><stop offset="0" stop-color="#6da39b"/><stop offset=".07" stop-color="#a9c7ba"/><stop offset=".16" stop-color="#e9e6d6"/><stop offset=".3" stop-color="#f3e4cc"/><stop offset=".45" stop-color="#ecd0aa"/></linearGradient>
<linearGradient id="mtfar" x1="0" y1="0" x2="0" y2="1"><stop offset="0" stop-color="#465a6b"/><stop offset=".5" stop-color="#5f7685"/><stop offset="1" stop-color="#9fb0b8"/></linearGradient>
<linearGradient id="mtfar2" x1="0" y1="0" x2="0" y2="1"><stop offset="0" stop-color="#5b7386"/><stop offset="1" stop-color="#b4c3c9"/></linearGradient>
<linearGradient id="mtleft" x1="0" y1="0" x2="0" y2="1"><stop offset="0" stop-color="#44586a"/><stop offset=".6" stop-color="#3a4b5a"/><stop offset="1" stop-color="#2b3642"/></linearGradient>
<linearGradient id="mtgold" x1="0" y1="0" x2="1" y2="0"><stop offset="0" stop-color="#8a6a2c"/><stop offset=".35" stop-color="#c08f3c"/><stop offset=".7" stop-color="#a87a38"/><stop offset="1" stop-color="#5a4a34"/></linearGradient>
<filter id="mtb"><feGaussianBlur stdDeviation=".6"/></filter><filter id="mtb2"><feGaussianBlur stdDeviation="2.5"/></filter></defs>
<rect width="166" height="111" fill="url(#mtsky)"/>
<path d="M30 5C60 2 110 8 166 3V0H30z" fill="#4f8f8b" opacity=".45" filter="url(#mtb2)"/><path d="M0 14L0 40L14 40C10 30 6 20 0 14z" fill="#e0b070" opacity=".5" filter="url(#mtb2)"/><path d="M166 18V40H150C156 32 160 26 166 18z" fill="#e8b078" opacity=".6" filter="url(#mtb2)"/>
<path d="M0 20C30 12 60 22 100 14C130 9 150 14 166 10V20C130 22 80 26 0 34z" fill="#f1e6cf" opacity=".6" filter="url(#mtb2)"/>
<g filter="url(#txmt)"><path d="M0 43L8 42L12 43L20 34L34 32L48 35L52 33L60 29L68 27L78.6 21L84 24L90 26.5L97 23L103 26.5L116 26L125 25L132 29L140 35L158 38L166 41V111H0z" fill="#a9b8bd"/>
<g filter="url(#mtb)">
<path d="M11 44L20 34L27 33L34 32L41 33L48 35L56 44L40 50L20 50z" fill="url(#mtfar2)"/>
<path d="M24 48L42 40L52 33L60 29L68 27L74 23L78.6 21L84 24L90 26.5L97 23L103 26.5L110 28L116 26L125 25L132 29L140 35L150 36.5L158 38L166 41V80H30z" fill="url(#mtfar)"/>
<path d="M40 78C55 62 75 58 100 60C110 62 115 66 120 70L80 85z" fill="#c3ced2" opacity=".55" filter="url(#mtb2)"/>
<path d="M0 43L8 42L15 43L24 50L34 58L42 62L50 70L58 77L66 81L73 84L60 96L0 100z" fill="url(#mtleft)"/>
<path d="M166 60L158 62L150 66L146 72L166 80z" fill="#3d4d5a"/>
<path d="M62 90L75 84L88 77L100 68L108 60L114 54L120 49L126.9 45.5L133 49L139 55L144 62L150 68L158 73L166 74V111H40z" fill="#3a3a38"/>
<path d="M62 90L75 84L88 77L100 68L108 60L114 54L112 62L110 70L112 78L104 84L96 90L84 94L70 93z" fill="url(#mtgold)"/>
<path d="M112 78L122 74L130 80L126 86L110 90L100 96L90 94L96 90L104 84z" fill="#8a6c3c" opacity=".8"/>
<path d="M0 76L10 82L24 86L40 88L52 92L62 96L80 99L100 102L120 104L166 106V111H0z" fill="#1f2227"/>
<path d="M110 100L125 94L140 92L152 88L166 84V111H100z" fill="#6b5a3c" opacity=".7"/>
<path d="M0 96L40 100L80 102L110 104L120 111H0z" fill="#191b1f"/>
</g></g>
</svg></div></div><div class="nm"><span style="letter-spacing:0.124px">iStock-500369068.jpg</span></div><div class="dt"><span style="letter-spacing:0.184px">2017-06-13</span></div></div>
<div class="card" style="left:1064px;top:215px"><div class="pv"><div class="th" style="left:0px;top:3px;width:166px;height:111px;"><svg width="166" height="111" viewBox="0 0 166 111" preserveAspectRatio="none"><defs><linearGradient id="mtsky" x1="0" y1="0" x2="0" y2="1"><stop offset="0" stop-color="#6da39b"/><stop offset=".07" stop-color="#a9c7ba"/><stop offset=".16" stop-color="#e9e6d6"/><stop offset=".3" stop-color="#f3e4cc"/><stop offset=".45" stop-color="#ecd0aa"/></linearGradient>
<linearGradient id="mtfar" x1="0" y1="0" x2="0" y2="1"><stop offset="0" stop-color="#465a6b"/><stop offset=".5" stop-color="#5f7685"/><stop offset="1" stop-color="#9fb0b8"/></linearGradient>
<linearGradient id="mtfar2" x1="0" y1="0" x2="0" y2="1"><stop offset="0" stop-color="#5b7386"/><stop offset="1" stop-color="#b4c3c9"/></linearGradient>
<linearGradient id="mtleft" x1="0" y1="0" x2="0" y2="1"><stop offset="0" stop-color="#44586a"/><stop offset=".6" stop-color="#3a4b5a"/><stop offset="1" stop-color="#2b3642"/></linearGradient>
<linearGradient id="mtgold" x1="0" y1="0" x2="1" y2="0"><stop offset="0" stop-color="#8a6a2c"/><stop offset=".35" stop-color="#c08f3c"/><stop offset=".7" stop-color="#a87a38"/><stop offset="1" stop-color="#5a4a34"/></linearGradient>
<filter id="mtb"><feGaussianBlur stdDeviation=".6"/></filter><filter id="mtb2"><feGaussianBlur stdDeviation="2.5"/></filter></defs>
<rect width="166" height="111" fill="url(#mtsky)"/>
<path d="M30 5C60 2 110 8 166 3V0H30z" fill="#4f8f8b" opacity=".45" filter="url(#mtb2)"/><path d="M0 14L0 40L14 40C10 30 6 20 0 14z" fill="#e0b070" opacity=".5" filter="url(#mtb2)"/><path d="M166 18V40H150C156 32 160 26 166 18z" fill="#e8b078" opacity=".6" filter="url(#mtb2)"/>
<path d="M0 20C30 12 60 22 100 14C130 9 150 14 166 10V20C130 22 80 26 0 34z" fill="#f1e6cf" opacity=".6" filter="url(#mtb2)"/>
<g filter="url(#txmt)"><path d="M0 43L8 42L12 43L20 34L34 32L48 35L52 33L60 29L68 27L78.6 21L84 24L90 26.5L97 23L103 26.5L116 26L125 25L132 29L140 35L158 38L166 41V111H0z" fill="#a9b8bd"/>
<g filter="url(#mtb)">
<path d="M11 44L20 34L27 33L34 32L41 33L48 35L56 44L40 50L20 50z" fill="url(#mtfar2)"/>
<path d="M24 48L42 40L52 33L60 29L68 27L74 23L78.6 21L84 24L90 26.5L97 23L103 26.5L110 28L116 26L125 25L132 29L140 35L150 36.5L158 38L166 41V80H30z" fill="url(#mtfar)"/>
<path d="M40 78C55 62 75 58 100 60C110 62 115 66 120 70L80 85z" fill="#c3ced2" opacity=".55" filter="url(#mtb2)"/>
<path d="M0 43L8 42L15 43L24 50L34 58L42 62L50 70L58 77L66 81L73 84L60 96L0 100z" fill="url(#mtleft)"/>
<path d="M166 60L158 62L150 66L146 72L166 80z" fill="#3d4d5a"/>
<path d="M62 90L75 84L88 77L100 68L108 60L114 54L120 49L126.9 45.5L133 49L139 55L144 62L150 68L158 73L166 74V111H40z" fill="#3a3a38"/>
<path d="M62 90L75 84L88 77L100 68L108 60L114 54L112 62L110 70L112 78L104 84L96 90L84 94L70 93z" fill="url(#mtgold)"/>
<path d="M112 78L122 74L130 80L126 86L110 90L100 96L90 94L96 90L104 84z" fill="#8a6c3c" opacity=".8"/>
<path d="M0 76L10 82L24 86L40 88L52 92L62 96L80 99L100 102L120 104L166 106V111H0z" fill="#1f2227"/>
<path d="M110 100L125 94L140 92L152 88L166 84V111H100z" fill="#6b5a3c" opacity=".7"/>
<path d="M0 96L40 100L80 102L110 104L120 111H0z" fill="#191b1f"/>
</g></g>
</svg></div></div><div class="nm" style="text-align:left;left:16px"><span style="letter-spacing:0.146px">iStock-500369068_small.<span style="font-size:9.82px;letter-spacing:0">…</span></span></div><div class="dt"><span style="letter-spacing:0.184px">2017-07-14</span></div></div>
<div class="card" style="left:24px;top:421px"><div class="pv"><div class="th" style="left:0px;top:3px;width:166px;height:111px;"><svg width="166" height="111" viewBox="0 0 166 111" preserveAspectRatio="none"><defs><linearGradient id="whsky" x1="0" y1="0" x2="0" y2="1"><stop offset="0" stop-color="#2c74c6"/><stop offset=".5" stop-color="#6aa6e2"/><stop offset="1" stop-color="#d3e6f7"/></linearGradient>
<linearGradient id="whf" x1="0" y1="0" x2="0" y2="1"><stop offset="0" stop-color="#b48d32"/><stop offset=".15" stop-color="#c79f40"/><stop offset=".5" stop-color="#bd9236"/><stop offset="1" stop-color="#a67c26"/></linearGradient>
<filter id="whb" x="-10%" y="-30%" width="120%" height="160%"><feGaussianBlur stdDeviation="2.4"/></filter><filter id="whb2"><feGaussianBlur stdDeviation=".4"/></filter></defs>
<rect width="166" height="36" fill="url(#whsky)"/>
<g filter="url(#whb)" fill="#fff" opacity=".75"><ellipse cx="140" cy="17" rx="24" ry="5"/><ellipse cx="120" cy="27" rx="40" ry="4"/><ellipse cx="60" cy="8" rx="30" ry="2.5" opacity=".4"/><ellipse cx="25" cy="14" rx="12" ry="2" opacity=".6"/><ellipse cx="60" cy="33" rx="40" ry="3"/></g>
<rect y="36" width="166" height="75" fill="url(#whf)" filter="url(#txwh)"/>
<path d="M0 35L6 33L14 33.5L22 32.5L30 33L38 32.5L46 31.5L52 33L53 35.5L60 35L66 32.5L74 32L80 33L90 33.5L100 33L110 33.5L120 33L130 32.5L140 33L150 33L158 32.5L166 32V37H0z" fill="#2d3118" filter="url(#whb2)"/>
<g fill="none" stroke-linecap="round" filter="url(#whb2)"><path d="M36.6 80.1 q-0.5 -7.3 -2.3 -12.2" stroke="#ecd08a" stroke-width="1.3" opacity="0.73"/><path d="M6.5 42.9 q0.1 -2.4 0.6 -4.1" stroke="#8a6620" stroke-width="0.7" opacity="0.70"/><path d="M28.6 92.2 q-0.2 -8.9 -1.1 -14.9" stroke="#ecd08a" stroke-width="1.6" opacity="0.63"/><path d="M145.7 58.2 q-0.5 -4.5 -2.6 -7.4" stroke="#a8842e" stroke-width="1.0" opacity="0.78"/><path d="M112.5 46.5 q0.1 -2.9 0.4 -4.9" stroke="#e6c570" stroke-width="0.8" opacity="0.59"/><path d="M0.4 102.6 q-0.4 -10.3 -2.0 -17.2" stroke="#a8842e" stroke-width="1.8" opacity="0.77"/><path d="M156.2 69.6 q0.2 -6.0 1.1 -9.9" stroke="#ecd08a" stroke-width="1.2" opacity="0.88"/><path d="M18.5 67.6 q-0.8 -5.7 -4.0 -9.5" stroke="#ecd08a" stroke-width="1.1" opacity="0.55"/><path d="M164.0 72.5 q-0.0 -6.3 -0.1 -10.6" stroke="#8a6620" stroke-width="1.2" opacity="0.64"/><path d="M140.9 82.2 q-0.2 -7.6 -1.0 -12.7" stroke="#a8842e" stroke-width="1.4" opacity="0.71"/><path d="M153.2 89.7 q0.6 -8.6 2.9 -14.3" stroke="#8a6620" stroke-width="1.5" opacity="0.90"/><path d="M112.5 53.4 q0.2 -3.8 1.0 -6.4" stroke="#d9b257" stroke-width="0.9" opacity="0.77"/><path d="M31.9 100.2 q-0.2 -10.0 -0.8 -16.6" stroke="#8a6620" stroke-width="1.7" opacity="0.51"/><path d="M79.4 86.7 q-0.3 -8.2 -1.5 -13.7" stroke="#7a5a1c" stroke-width="1.5" opacity="0.81"/><path d="M66.8 52.6 q-0.3 -3.7 -1.5 -6.2" stroke="#a8842e" stroke-width="0.9" opacity="0.84"/><path d="M2.7 85.0 q-1.1 -8.0 -5.6 -13.3" stroke="#7a5a1c" stroke-width="1.4" opacity="0.70"/><path d="M156.3 61.5 q-0.5 -4.9 -2.3 -8.2" stroke="#e6c570" stroke-width="1.0" opacity="0.59"/><path d="M8.5 84.0 q-1.1 -7.8 -5.6 -13.1" stroke="#c9a044" stroke-width="1.4" opacity="0.89"/><path d="M46.0 60.4 q0.1 -4.8 0.3 -7.9" stroke="#7a5a1c" stroke-width="1.0" opacity="0.59"/><path d="M162.8 104.8 q-0.7 -10.6 -3.3 -17.6" stroke="#ecd08a" stroke-width="1.8" opacity="0.84"/><path d="M62.6 102.7 q0.1 -10.3 0.5 -17.2" stroke="#d9b257" stroke-width="1.8" opacity="0.73"/><path d="M159.6 77.5 q-0.3 -7.0 -1.7 -11.7" stroke="#c9a044" stroke-width="1.3" opacity="0.87"/><path d="M71.6 60.1 q-0.4 -4.7 -1.9 -7.8" stroke="#7a5a1c" stroke-width="1.0" opacity="0.46"/><path d="M67.7 82.6 q-1.1 -7.7 -5.6 -12.8" stroke="#f0d58c" stroke-width="1.4" opacity="0.48"/><path d="M104.8 74.6 q0.1 -6.6 0.3 -11.0" stroke="#7a5a1c" stroke-width="1.3" opacity="0.72"/><path d="M43.8 76.3 q-0.1 -6.8 -0.4 -11.4" stroke="#e6c570" stroke-width="1.3" opacity="0.88"/><path d="M38.9 73.9 q-0.1 -6.5 -0.4 -10.9" stroke="#7a5a1c" stroke-width="1.2" opacity="0.53"/><path d="M27.4 95.1 q0.4 -9.3 2.2 -15.5" stroke="#8a6620" stroke-width="1.6" opacity="0.59"/><path d="M61.0 96.1 q-1.4 -9.4 -6.8 -15.7" stroke="#f0d58c" stroke-width="1.6" opacity="0.59"/><path d="M33.9 98.3 q-0.9 -9.7 -4.6 -16.2" stroke="#f0d58c" stroke-width="1.7" opacity="0.76"/><path d="M108.7 48.8 q-0.0 -3.2 -0.2 -5.4" stroke="#7a5a1c" stroke-width="0.8" opacity="0.75"/><path d="M34.3 98.7 q0.7 -9.8 3.6 -16.3" stroke="#d9b257" stroke-width="1.7" opacity="0.60"/><path d="M108.8 103.9 q-0.5 -10.5 -2.3 -17.5" stroke="#c9a044" stroke-width="1.8" opacity="0.80"/><path d="M0.9 109.0 q-0.9 -11.1 -4.3 -18.6" stroke="#f0d58c" stroke-width="1.9" opacity="0.84"/><path d="M54.5 100.0 q-1.3 -9.9 -6.5 -16.6" stroke="#7a5a1c" stroke-width="1.7" opacity="0.72"/><path d="M68.7 78.3 q0.3 -7.1 1.7 -11.8" stroke="#ecd08a" stroke-width="1.3" opacity="0.61"/><path d="M68.0 71.4 q-0.3 -6.2 -1.7 -10.3" stroke="#a8842e" stroke-width="1.2" opacity="0.52"/><path d="M-4.2 108.0 q0.6 -11.0 3.0 -18.3" stroke="#a8842e" stroke-width="1.8" opacity="0.70"/><path d="M167.5 92.2 q-1.3 -8.9 -6.4 -14.9" stroke="#ecd08a" stroke-width="1.6" opacity="0.83"/><path d="M111.0 78.3 q-0.6 -7.1 -2.9 -11.8" stroke="#7a5a1c" stroke-width="1.3" opacity="0.85"/><path d="M145.8 102.1 q0.8 -10.2 3.9 -17.0" stroke="#d9b257" stroke-width="1.7" opacity="0.81"/><path d="M2.9 105.3 q0.1 -10.6 0.6 -17.7" stroke="#c9a044" stroke-width="1.8" opacity="0.85"/><path d="M152.4 82.4 q-1.1 -7.6 -5.6 -12.7" stroke="#d9b257" stroke-width="1.4" opacity="0.53"/><path d="M47.5 88.4 q-0.2 -8.4 -1.2 -14.0" stroke="#a8842e" stroke-width="1.5" opacity="0.47"/><path d="M154.8 50.0 q-0.4 -3.4 -2.0 -5.6" stroke="#ecd08a" stroke-width="0.8" opacity="0.82"/><path d="M5.7 57.5 q-0.5 -4.4 -2.6 -7.3" stroke="#d9b257" stroke-width="0.9" opacity="0.53"/><path d="M133.5 106.5 q0.4 -10.8 2.1 -18.0" stroke="#e6c570" stroke-width="1.8" opacity="0.67"/><path d="M94.9 70.0 q0.2 -6.0 0.8 -10.0" stroke="#c9a044" stroke-width="1.2" opacity="0.57"/><path d="M87.3 71.6 q-0.2 -6.2 -1.2 -10.4" stroke="#e6c570" stroke-width="1.2" opacity="0.84"/><path d="M130.7 45.2 q-0.4 -2.8 -1.9 -4.6" stroke="#ecd08a" stroke-width="0.7" opacity="0.89"/><path d="M144.5 48.0 q-0.1 -3.1 -0.5 -5.2" stroke="#7a5a1c" stroke-width="0.8" opacity="0.52"/><path d="M7.6 69.0 q-0.3 -5.9 -1.7 -9.8" stroke="#8a6620" stroke-width="1.2" opacity="0.61"/><path d="M28.4 65.0 q-0.6 -5.4 -3.2 -8.9" stroke="#e6c570" stroke-width="1.1" opacity="0.77"/><path d="M61.5 47.6 q-0.3 -3.1 -1.7 -5.1" stroke="#7a5a1c" stroke-width="0.8" opacity="0.66"/><path d="M108.8 79.9 q-0.0 -7.3 -0.1 -12.2" stroke="#e6c570" stroke-width="1.3" opacity="0.73"/><path d="M70.5 68.1 q-0.2 -5.8 -1.0 -9.6" stroke="#7a5a1c" stroke-width="1.1" opacity="0.64"/><path d="M116.5 74.3 q-0.6 -6.6 -3.0 -10.9" stroke="#8a6620" stroke-width="1.2" opacity="0.76"/><path d="M7.5 71.7 q-0.3 -6.2 -1.6 -10.4" stroke="#e6c570" stroke-width="1.2" opacity="0.87"/><path d="M60.5 104.8 q0.4 -10.6 1.8 -17.7" stroke="#8a6620" stroke-width="1.8" opacity="0.50"/><path d="M115.8 107.7 q0.2 -11.0 1.1 -18.3" stroke="#a8842e" stroke-width="1.8" opacity="0.75"/><path d="M123.4 81.5 q-0.9 -7.5 -4.7 -12.5" stroke="#e6c570" stroke-width="1.4" opacity="0.66"/><path d="M36.3 69.2 q-0.2 -5.9 -0.8 -9.8" stroke="#d9b257" stroke-width="1.2" opacity="0.75"/><path d="M60.8 99.4 q-0.7 -9.9 -3.5 -16.4" stroke="#d9b257" stroke-width="1.7" opacity="0.46"/><path d="M15.1 75.7 q0.1 -6.8 0.4 -11.3" stroke="#8a6620" stroke-width="1.3" opacity="0.71"/><path d="M134.8 44.5 q0.1 -2.7 0.4 -4.4" stroke="#c9a044" stroke-width="0.7" opacity="0.50"/><path d="M126.1 107.4 q-1.5 -10.9 -7.4 -18.2" stroke="#7a5a1c" stroke-width="1.8" opacity="0.84"/><path d="M26.6 47.4 q0.3 -3.0 1.3 -5.1" stroke="#c9a044" stroke-width="0.8" opacity="0.65"/><path d="M117.5 108.0 q-1.0 -11.0 -5.0 -18.3" stroke="#a8842e" stroke-width="1.8" opacity="0.87"/><path d="M92.4 109.6 q-0.7 -11.2 -3.5 -18.7" stroke="#c9a044" stroke-width="1.9" opacity="0.89"/><path d="M67.2 94.3 q-1.0 -9.2 -5.2 -15.3" stroke="#ecd08a" stroke-width="1.6" opacity="0.52"/><path d="M65.2 104.1 q-1.2 -10.5 -5.9 -17.5" stroke="#ecd08a" stroke-width="1.8" opacity="0.79"/><path d="M155.4 78.2 q-0.3 -7.1 -1.7 -11.8" stroke="#f0d58c" stroke-width="1.3" opacity="0.51"/><path d="M126.6 52.3 q-0.1 -3.7 -0.5 -6.1" stroke="#c9a044" stroke-width="0.9" opacity="0.83"/><path d="M89.2 96.6 q0.1 -9.5 0.3 -15.8" stroke="#a8842e" stroke-width="1.6" opacity="0.72"/><path d="M97.3 110.9 q0.7 -11.4 3.3 -19.0" stroke="#8a6620" stroke-width="1.9" opacity="0.46"/><path d="M78.9 68.8 q-0.6 -5.8 -3.2 -9.7" stroke="#7a5a1c" stroke-width="1.1" opacity="0.56"/><path d="M79.5 102.5 q-0.5 -10.3 -2.7 -17.1" stroke="#ecd08a" stroke-width="1.7" opacity="0.77"/><path d="M31.0 82.6 q0.5 -7.7 2.3 -12.8" stroke="#e6c570" stroke-width="1.4" opacity="0.67"/><path d="M121.1 102.0 q-0.6 -10.2 -2.9 -17.0" stroke="#e6c570" stroke-width="1.7" opacity="0.66"/><path d="M35.2 58.4 q0.1 -4.5 0.4 -7.5" stroke="#d9b257" stroke-width="1.0" opacity="0.88"/><path d="M144.4 58.9 q-0.5 -4.6 -2.4 -7.6" stroke="#8a6620" stroke-width="1.0" opacity="0.51"/><path d="M103.8 89.3 q-1.2 -8.5 -6.0 -14.2" stroke="#8a6620" stroke-width="1.5" opacity="0.53"/><path d="M2.9 54.8 q-0.5 -4.0 -2.6 -6.7" stroke="#d9b257" stroke-width="0.9" opacity="0.50"/><path d="M41.2 106.0 q-1.5 -10.7 -7.6 -17.9" stroke="#ecd08a" stroke-width="1.8" opacity="0.71"/><path d="M113.2 42.5 q-0.2 -2.4 -0.9 -4.0" stroke="#a8842e" stroke-width="0.7" opacity="0.62"/><path d="M8.6 87.1 q0.2 -8.3 1.0 -13.8" stroke="#ecd08a" stroke-width="1.5" opacity="0.63"/><path d="M90.3 50.3 q-0.3 -3.4 -1.5 -5.7" stroke="#a8842e" stroke-width="0.8" opacity="0.50"/><path d="M150.3 105.6 q-1.4 -10.7 -6.8 -17.8" stroke="#7a5a1c" stroke-width="1.8" opacity="0.76"/><path d="M59.5 73.5 q0.0 -6.5 0.2 -10.8" stroke="#8a6620" stroke-width="1.2" opacity="0.50"/><path d="M160.3 65.7 q-0.1 -5.4 -0.5 -9.1" stroke="#d9b257" stroke-width="1.1" opacity="0.75"/><path d="M84.0 46.2 q-0.2 -2.9 -1.2 -4.8" stroke="#f0d58c" stroke-width="0.7" opacity="0.74"/><path d="M122.8 52.5 q-0.2 -3.7 -1.2 -6.2" stroke="#ecd08a" stroke-width="0.9" opacity="0.51"/><path d="M158.1 51.9 q-0.3 -3.6 -1.3 -6.0" stroke="#a8842e" stroke-width="0.8" opacity="0.70"/><path d="M108.3 74.0 q-0.5 -6.5 -2.5 -10.9" stroke="#f0d58c" stroke-width="1.2" opacity="0.77"/><path d="M13.8 54.7 q-0.1 -4.0 -0.4 -6.7" stroke="#a8842e" stroke-width="0.9" opacity="0.61"/><path d="M41.5 68.8 q0.3 -5.9 1.6 -9.8" stroke="#e6c570" stroke-width="1.1" opacity="0.67"/><path d="M42.5 90.7 q-0.3 -8.7 -1.3 -14.5" stroke="#7a5a1c" stroke-width="1.5" opacity="0.88"/><path d="M73.4 98.6 q-1.3 -9.8 -6.5 -16.3" stroke="#ecd08a" stroke-width="1.7" opacity="0.83"/><path d="M14.6 60.9 q-0.6 -4.8 -3.1 -8.0" stroke="#d9b257" stroke-width="1.0" opacity="0.70"/><path d="M154.2 49.8 q0.0 -3.4 0.2 -5.6" stroke="#a8842e" stroke-width="0.8" opacity="0.75"/><path d="M63.5 110.8 q-1.4 -11.4 -6.8 -19.0" stroke="#f0d58c" stroke-width="1.9" opacity="0.84"/><path d="M134.7 80.1 q-0.8 -7.3 -4.0 -12.2" stroke="#f0d58c" stroke-width="1.4" opacity="0.54"/><path d="M38.8 96.7 q-1.4 -9.5 -6.8 -15.9" stroke="#ecd08a" stroke-width="1.6" opacity="0.85"/><path d="M161.1 68.8 q-0.1 -5.9 -0.6 -9.8" stroke="#8a6620" stroke-width="1.1" opacity="0.74"/><path d="M166.0 90.1 q-0.7 -8.6 -3.5 -14.4" stroke="#ecd08a" stroke-width="1.5" opacity="0.46"/><path d="M28.3 86.4 q-1.0 -8.2 -5.1 -13.6" stroke="#c9a044" stroke-width="1.5" opacity="0.67"/><path d="M86.6 74.2 q-0.7 -6.6 -3.4 -10.9" stroke="#c9a044" stroke-width="1.2" opacity="0.47"/><path d="M82.6 87.2 q-0.4 -8.3 -1.9 -13.8" stroke="#8a6620" stroke-width="1.5" opacity="0.88"/><path d="M151.1 51.5 q0.1 -3.6 0.6 -6.0" stroke="#e6c570" stroke-width="0.8" opacity="0.46"/><path d="M103.2 77.4 q-0.2 -7.0 -1.2 -11.6" stroke="#e6c570" stroke-width="1.3" opacity="0.87"/><path d="M51.5 102.9 q0.1 -10.3 0.6 -17.2" stroke="#f0d58c" stroke-width="1.8" opacity="0.49"/><path d="M141.8 96.3 q-1.3 -9.5 -6.7 -15.8" stroke="#d9b257" stroke-width="1.6" opacity="0.78"/><path d="M55.1 98.5 q0.7 -9.8 3.3 -16.3" stroke="#c9a044" stroke-width="1.7" opacity="0.65"/><path d="M127.4 76.0 q-0.8 -6.8 -4.2 -11.3" stroke="#e6c570" stroke-width="1.3" opacity="0.63"/><path d="M142.9 91.4 q-0.5 -8.8 -2.6 -14.7" stroke="#ecd08a" stroke-width="1.6" opacity="0.76"/><path d="M89.1 71.5 q0.0 -6.2 0.0 -10.4" stroke="#8a6620" stroke-width="1.2" opacity="0.46"/><path d="M75.1 90.4 q-0.4 -8.7 -2.1 -14.5" stroke="#ecd08a" stroke-width="1.5" opacity="0.85"/><path d="M120.9 67.7 q-0.4 -5.7 -1.8 -9.5" stroke="#7a5a1c" stroke-width="1.1" opacity="0.72"/><path d="M34.2 42.2 q-0.2 -2.4 -1.2 -3.9" stroke="#7a5a1c" stroke-width="0.7" opacity="0.51"/><path d="M75.5 55.7 q-0.4 -4.1 -2.1 -6.9" stroke="#f0d58c" stroke-width="0.9" opacity="0.71"/><path d="M83.1 86.6 q-1.0 -8.2 -4.8 -13.6" stroke="#f0d58c" stroke-width="1.5" opacity="0.65"/><path d="M27.3 100.9 q-0.6 -10.1 -2.8 -16.8" stroke="#7a5a1c" stroke-width="1.7" opacity="0.63"/><path d="M118.1 45.6 q-0.2 -2.8 -0.8 -4.7" stroke="#a8842e" stroke-width="0.7" opacity="0.67"/><path d="M154.1 103.8 q-1.0 -10.5 -4.9 -17.4" stroke="#a8842e" stroke-width="1.8" opacity="0.66"/><path d="M23.8 85.6 q-0.6 -8.1 -2.8 -13.4" stroke="#d9b257" stroke-width="1.4" opacity="0.72"/><path d="M136.3 62.4 q0.4 -5.0 2.0 -8.3" stroke="#ecd08a" stroke-width="1.0" opacity="0.81"/><path d="M163.3 76.2 q-0.1 -6.8 -0.7 -11.4" stroke="#e6c570" stroke-width="1.3" opacity="0.82"/><path d="M105.1 66.1 q-0.7 -5.5 -3.5 -9.2" stroke="#a8842e" stroke-width="1.1" opacity="0.89"/><path d="M98.6 42.3 q-0.3 -2.4 -1.7 -3.9" stroke="#d9b257" stroke-width="0.7" opacity="0.46"/><path d="M83.0 75.7 q-0.7 -6.8 -3.6 -11.3" stroke="#7a5a1c" stroke-width="1.3" opacity="0.54"/><path d="M165.4 75.4 q0.3 -6.7 1.3 -11.2" stroke="#7a5a1c" stroke-width="1.3" opacity="0.87"/><path d="M1.0 63.3 q-0.0 -5.1 -0.2 -8.6" stroke="#a8842e" stroke-width="1.1" opacity="0.49"/><path d="M46.4 101.5 q-1.3 -10.1 -6.3 -16.9" stroke="#a8842e" stroke-width="1.7" opacity="0.70"/><path d="M88.9 96.5 q-0.5 -9.5 -2.7 -15.8" stroke="#a8842e" stroke-width="1.6" opacity="0.83"/><path d="M91.8 106.6 q-0.7 -10.8 -3.5 -18.0" stroke="#a8842e" stroke-width="1.8" opacity="0.65"/><path d="M72.8 91.2 q-0.6 -8.8 -3.1 -14.7" stroke="#f0d58c" stroke-width="1.5" opacity="0.68"/><path d="M126.7 106.1 q0.1 -10.7 0.7 -17.9" stroke="#ecd08a" stroke-width="1.8" opacity="0.47"/><path d="M25.0 94.6 q0.4 -9.2 1.9 -15.4" stroke="#d9b257" stroke-width="1.6" opacity="0.79"/><path d="M113.5 48.8 q-0.3 -3.2 -1.5 -5.4" stroke="#e6c570" stroke-width="0.8" opacity="0.85"/><path d="M147.6 73.5 q0.4 -6.5 1.9 -10.8" stroke="#7a5a1c" stroke-width="1.2" opacity="0.90"/><path d="M-4.7 55.6 q0.1 -4.1 0.7 -6.9" stroke="#d9b257" stroke-width="0.9" opacity="0.60"/><path d="M49.5 73.5 q0.3 -6.5 1.4 -10.8" stroke="#c9a044" stroke-width="1.2" opacity="0.56"/><path d="M3.5 52.7 q0.0 -3.7 0.0 -6.2" stroke="#e6c570" stroke-width="0.9" opacity="0.50"/><path d="M45.3 56.6 q0.2 -4.2 1.0 -7.1" stroke="#a8842e" stroke-width="0.9" opacity="0.68"/><path d="M153.8 64.3 q0.3 -5.3 1.5 -8.8" stroke="#c9a044" stroke-width="1.1" opacity="0.66"/><path d="M103.9 44.9 q0.1 -2.7 0.5 -4.5" stroke="#e6c570" stroke-width="0.7" opacity="0.84"/><path d="M12.7 108.0 q-1.0 -11.0 -5.0 -18.3" stroke="#d9b257" stroke-width="1.8" opacity="0.66"/><path d="M34.0 100.1 q-0.1 -10.0 -0.3 -16.6" stroke="#ecd08a" stroke-width="1.7" opacity="0.79"/><path d="M147.5 66.2 q-0.1 -5.5 -0.3 -9.2" stroke="#ecd08a" stroke-width="1.1" opacity="0.80"/><path d="M46.1 108.2 q-0.5 -11.0 -2.6 -18.4" stroke="#a8842e" stroke-width="1.8" opacity="0.54"/><path d="M89.4 74.5 q0.1 -6.6 0.7 -11.0" stroke="#d9b257" stroke-width="1.2" opacity="0.60"/><path d="M28.6 94.8 q0.6 -9.3 3.0 -15.4" stroke="#7a5a1c" stroke-width="1.6" opacity="0.64"/><path d="M108.5 84.4 q-0.8 -7.9 -4.0 -13.2" stroke="#7a5a1c" stroke-width="1.4" opacity="0.83"/><path d="M5.9 58.5 q-0.2 -4.5 -1.1 -7.5" stroke="#8a6620" stroke-width="1.0" opacity="0.55"/><path d="M23.9 107.2 q0.2 -10.9 1.1 -18.2" stroke="#ecd08a" stroke-width="1.8" opacity="0.87"/><path d="M88.8 71.3 q0.4 -6.2 2.2 -10.3" stroke="#a8842e" stroke-width="1.2" opacity="0.67"/><path d="M130.4 70.5 q0.5 -6.1 2.5 -10.1" stroke="#e6c570" stroke-width="1.2" opacity="0.58"/><path d="M158.5 54.9 q-0.5 -4.0 -2.6 -6.7" stroke="#f0d58c" stroke-width="0.9" opacity="0.58"/><path d="M85.9 86.7 q-1.2 -8.2 -5.8 -13.7" stroke="#c9a044" stroke-width="1.5" opacity="0.57"/><path d="M70.7 66.1 q0.1 -5.5 0.6 -9.2" stroke="#8a6620" stroke-width="1.1" opacity="0.51"/><path d="M72.7 105.6 q-0.5 -10.7 -2.5 -17.8" stroke="#c9a044" stroke-width="1.8" opacity="0.52"/><path d="M128.5 91.0 q0.7 -8.8 3.4 -14.6" stroke="#7a5a1c" stroke-width="1.5" opacity="0.87"/><path d="M70.5 107.8 q-0.4 -11.0 -2.2 -18.3" stroke="#c9a044" stroke-width="1.8" opacity="0.61"/><path d="M144.2 62.0 q-0.2 -5.0 -1.0 -8.3" stroke="#7a5a1c" stroke-width="1.0" opacity="0.81"/><path d="M47.0 59.0 q0.2 -4.6 0.9 -7.6" stroke="#e6c570" stroke-width="1.0" opacity="0.46"/><path d="M105.1 52.4 q-0.5 -3.7 -2.7 -6.2" stroke="#e6c570" stroke-width="0.9" opacity="0.45"/><path d="M167.1 97.5 q-0.6 -9.6 -3.2 -16.0" stroke="#7a5a1c" stroke-width="1.7" opacity="0.89"/><path d="M1.1 55.0 q-0.6 -4.0 -3.0 -6.7" stroke="#a8842e" stroke-width="0.9" opacity="0.86"/><path d="M141.2 84.2 q0.3 -7.9 1.5 -13.1" stroke="#ecd08a" stroke-width="1.4" opacity="0.59"/><path d="M38.3 98.1 q-0.5 -9.7 -2.5 -16.2" stroke="#8a6620" stroke-width="1.7" opacity="0.60"/><path d="M0.1 44.6 q0.2 -2.7 1.1 -4.4" stroke="#f0d58c" stroke-width="0.7" opacity="0.86"/><path d="M136.5 59.3 q-0.5 -4.6 -2.7 -7.7" stroke="#a8842e" stroke-width="1.0" opacity="0.68"/><path d="M140.4 80.6 q-0.6 -7.4 -3.1 -12.3" stroke="#f0d58c" stroke-width="1.4" opacity="0.47"/><path d="M80.0 46.2 q0.1 -2.9 0.6 -4.8" stroke="#ecd08a" stroke-width="0.7" opacity="0.66"/><path d="M111.5 107.0 q0.4 -10.9 2.2 -18.1" stroke="#a8842e" stroke-width="1.8" opacity="0.62"/><path d="M105.6 62.6 q-0.7 -5.0 -3.3 -8.4" stroke="#f0d58c" stroke-width="1.0" opacity="0.90"/><path d="M90.7 70.6 q-0.4 -6.1 -2.1 -10.1" stroke="#ecd08a" stroke-width="1.2" opacity="0.58"/><path d="M39.7 61.8 q-0.1 -4.9 -0.7 -8.2" stroke="#7a5a1c" stroke-width="1.0" opacity="0.51"/><path d="M1.6 76.0 q-0.7 -6.8 -3.3 -11.3" stroke="#ecd08a" stroke-width="1.3" opacity="0.87"/><path d="M102.2 44.1 q-0.0 -2.6 -0.2 -4.3" stroke="#d9b257" stroke-width="0.7" opacity="0.67"/><path d="M44.0 91.7 q0.6 -8.9 2.8 -14.8" stroke="#d9b257" stroke-width="1.6" opacity="0.65"/><path d="M8.3 44.4 q-0.1 -2.6 -0.5 -4.4" stroke="#ecd08a" stroke-width="0.7" opacity="0.54"/><path d="M156.1 54.7 q-0.2 -4.0 -1.2 -6.7" stroke="#a8842e" stroke-width="0.9" opacity="0.59"/><path d="M42.4 108.5 q0.8 -11.1 3.9 -18.5" stroke="#7a5a1c" stroke-width="1.9" opacity="0.72"/><path d="M92.2 44.5 q-0.1 -2.7 -0.7 -4.4" stroke="#a8842e" stroke-width="0.7" opacity="0.89"/><path d="M8.9 58.1 q-0.5 -4.4 -2.3 -7.4" stroke="#d9b257" stroke-width="1.0" opacity="0.76"/><path d="M15.1 86.3 q-1.0 -8.1 -4.9 -13.6" stroke="#e6c570" stroke-width="1.5" opacity="0.87"/><path d="M165.5 90.4 q-0.4 -8.7 -2.1 -14.5" stroke="#ecd08a" stroke-width="1.5" opacity="0.66"/><path d="M45.6 81.2 q-0.8 -7.5 -4.1 -12.5" stroke="#ecd08a" stroke-width="1.4" opacity="0.88"/><path d="M20.2 105.4 q-1.2 -10.7 -5.8 -17.8" stroke="#ecd08a" stroke-width="1.8" opacity="0.75"/><path d="M108.2 52.0 q-0.5 -3.6 -2.5 -6.1" stroke="#f0d58c" stroke-width="0.8" opacity="0.59"/><path d="M108.5 51.2 q-0.4 -3.5 -2.0 -5.9" stroke="#f0d58c" stroke-width="0.8" opacity="0.69"/><path d="M61.9 49.5 q-0.2 -3.3 -1.0 -5.5" stroke="#e6c570" stroke-width="0.8" opacity="0.58"/><path d="M18.0 52.2 q-0.4 -3.7 -2.2 -6.1" stroke="#7a5a1c" stroke-width="0.9" opacity="0.87"/><path d="M100.6 107.4 q-1.6 -10.9 -8.1 -18.2" stroke="#7a5a1c" stroke-width="1.8" opacity="0.90"/><path d="M166.5 59.2 q-0.3 -4.6 -1.5 -7.7" stroke="#ecd08a" stroke-width="1.0" opacity="0.50"/><path d="M143.2 75.1 q0.2 -6.7 0.8 -11.1" stroke="#ecd08a" stroke-width="1.3" opacity="0.71"/><path d="M76.2 79.7 q-0.3 -7.3 -1.7 -12.1" stroke="#ecd08a" stroke-width="1.3" opacity="0.82"/><path d="M30.1 83.6 q0.5 -7.8 2.6 -13.0" stroke="#f0d58c" stroke-width="1.4" opacity="0.59"/><path d="M145.3 109.1 q-0.8 -11.2 -4.2 -18.6" stroke="#c9a044" stroke-width="1.9" opacity="0.51"/><path d="M100.6 46.0 q-0.0 -2.9 -0.1 -4.8" stroke="#f0d58c" stroke-width="0.7" opacity="0.50"/><path d="M-2.6 102.9 q0.4 -10.3 1.8 -17.2" stroke="#7a5a1c" stroke-width="1.8" opacity="0.69"/><path d="M129.1 48.5 q-0.1 -3.2 -0.4 -5.3" stroke="#ecd08a" stroke-width="0.8" opacity="0.60"/><path d="M98.3 57.3 q-0.2 -4.3 -0.9 -7.2" stroke="#7a5a1c" stroke-width="0.9" opacity="0.74"/><path d="M98.4 91.2 q0.3 -8.8 1.3 -14.7" stroke="#7a5a1c" stroke-width="1.5" opacity="0.84"/><path d="M141.2 62.1 q0.4 -5.0 1.9 -8.3" stroke="#8a6620" stroke-width="1.0" opacity="0.53"/><path d="M100.4 57.5 q0.4 -4.4 1.8 -7.3" stroke="#c9a044" stroke-width="0.9" opacity="0.58"/><path d="M164.2 73.7 q-0.3 -6.5 -1.3 -10.8" stroke="#f0d58c" stroke-width="1.2" opacity="0.89"/><path d="M87.5 72.9 q-0.0 -6.4 -0.2 -10.7" stroke="#d9b257" stroke-width="1.2" opacity="0.64"/><path d="M91.2 84.7 q-0.7 -7.9 -3.3 -13.2" stroke="#c9a044" stroke-width="1.4" opacity="0.83"/><path d="M62.2 110.7 q-0.7 -11.4 -3.7 -18.9" stroke="#c9a044" stroke-width="1.9" opacity="0.47"/><path d="M81.5 50.2 q0.1 -3.4 0.4 -5.7" stroke="#a8842e" stroke-width="0.8" opacity="0.77"/><path d="M58.3 63.0 q-0.2 -5.1 -0.8 -8.5" stroke="#a8842e" stroke-width="1.0" opacity="0.65"/><path d="M153.9 90.0 q-1.1 -8.6 -5.4 -14.4" stroke="#ecd08a" stroke-width="1.5" opacity="0.52"/><path d="M33.5 68.0 q-0.0 -5.7 -0.2 -9.6" stroke="#f0d58c" stroke-width="1.1" opacity="0.85"/><path d="M31.6 72.5 q-0.7 -6.3 -3.3 -10.6" stroke="#e6c570" stroke-width="1.2" opacity="0.69"/><path d="M156.2 79.4 q0.2 -7.2 0.8 -12.1" stroke="#c9a044" stroke-width="1.3" opacity="0.65"/><path d="M114.4 50.5 q0.2 -3.4 1.0 -5.7" stroke="#a8842e" stroke-width="0.8" opacity="0.55"/><path d="M19.3 63.5 q-0.1 -5.1 -0.5 -8.6" stroke="#d9b257" stroke-width="1.1" opacity="0.82"/><path d="M99.8 47.9 q-0.4 -3.1 -2.2 -5.2" stroke="#7a5a1c" stroke-width="0.8" opacity="0.62"/><path d="M80.8 111.0 q-0.5 -11.4 -2.3 -19.0" stroke="#f0d58c" stroke-width="1.9" opacity="0.62"/><path d="M84.6 72.3 q-0.0 -6.3 -0.1 -10.5" stroke="#8a6620" stroke-width="1.2" opacity="0.65"/><path d="M12.0 110.5 q0.1 -11.3 0.6 -18.9" stroke="#d9b257" stroke-width="1.9" opacity="0.48"/><path d="M148.5 94.2 q-0.7 -9.2 -3.5 -15.3" stroke="#e6c570" stroke-width="1.6" opacity="0.60"/><path d="M154.7 86.2 q-1.0 -8.1 -5.2 -13.6" stroke="#7a5a1c" stroke-width="1.5" opacity="0.74"/><path d="M149.3 57.8 q-0.3 -4.4 -1.6 -7.3" stroke="#a8842e" stroke-width="1.0" opacity="0.88"/><path d="M4.1 78.3 q0.4 -7.1 2.2 -11.8" stroke="#c9a044" stroke-width="1.3" opacity="0.71"/><path d="M9.9 58.3 q-0.2 -4.5 -0.9 -7.4" stroke="#a8842e" stroke-width="1.0" opacity="0.58"/><path d="M166.9 88.3 q-0.2 -8.4 -1.1 -14.0" stroke="#c9a044" stroke-width="1.5" opacity="0.71"/><path d="M55.0 83.2 q-0.1 -7.7 -0.6 -12.9" stroke="#7a5a1c" stroke-width="1.4" opacity="0.73"/><path d="M57.1 95.8 q0.6 -9.4 2.9 -15.7" stroke="#c9a044" stroke-width="1.6" opacity="0.65"/><path d="M121.2 102.0 q-0.0 -10.2 -0.2 -17.0" stroke="#ecd08a" stroke-width="1.7" opacity="0.84"/><path d="M32.8 99.6 q0.7 -9.9 3.4 -16.5" stroke="#d9b257" stroke-width="1.7" opacity="0.87"/><path d="M82.7 101.0 q-0.8 -10.1 -3.9 -16.8" stroke="#e6c570" stroke-width="1.7" opacity="0.60"/><path d="M38.2 103.6 q0.1 -10.4 0.5 -17.4" stroke="#e6c570" stroke-width="1.8" opacity="0.56"/><path d="M59.2 57.6 q-0.4 -4.4 -1.8 -7.3" stroke="#7a5a1c" stroke-width="0.9" opacity="0.57"/><path d="M116.5 65.8 q-0.7 -5.5 -3.4 -9.1" stroke="#c9a044" stroke-width="1.1" opacity="0.59"/><path d="M25.3 53.8 q-0.1 -3.9 -0.7 -6.5" stroke="#c9a044" stroke-width="0.9" opacity="0.55"/><path d="M112.4 84.7 q-0.9 -7.9 -4.3 -13.2" stroke="#a8842e" stroke-width="1.4" opacity="0.72"/><path d="M69.3 54.4 q-0.3 -4.0 -1.6 -6.6" stroke="#7a5a1c" stroke-width="0.9" opacity="0.48"/><path d="M132.7 102.2 q-0.4 -10.2 -1.8 -17.1" stroke="#f0d58c" stroke-width="1.7" opacity="0.57"/><path d="M152.3 90.0 q-0.8 -8.6 -4.2 -14.4" stroke="#ecd08a" stroke-width="1.5" opacity="0.61"/><path d="M169.2 75.8 q-0.7 -6.8 -3.7 -11.3" stroke="#a8842e" stroke-width="1.3" opacity="0.60"/><path d="M123.2 82.8 q-1.0 -7.7 -4.8 -12.8" stroke="#f0d58c" stroke-width="1.4" opacity="0.83"/><path d="M78.6 79.8 q0.4 -7.3 1.9 -12.2" stroke="#ecd08a" stroke-width="1.3" opacity="0.62"/><path d="M2.3 66.3 q-0.0 -5.5 -0.1 -9.2" stroke="#d9b257" stroke-width="1.1" opacity="0.77"/><path d="M165.7 83.5 q-0.1 -7.8 -0.5 -13.0" stroke="#8a6620" stroke-width="1.4" opacity="0.69"/><path d="M168.0 100.5 q0.2 -10.0 1.2 -16.7" stroke="#8a6620" stroke-width="1.7" opacity="0.87"/><path d="M69.0 81.1 q0.2 -7.5 1.1 -12.4" stroke="#a8842e" stroke-width="1.4" opacity="0.67"/><path d="M94.3 59.5 q0.1 -4.6 0.3 -7.7" stroke="#a8842e" stroke-width="1.0" opacity="0.77"/><path d="M51.7 53.3 q0.2 -3.8 1.2 -6.4" stroke="#ecd08a" stroke-width="0.9" opacity="0.53"/><path d="M64.0 55.7 q-0.2 -4.1 -1.1 -6.9" stroke="#7a5a1c" stroke-width="0.9" opacity="0.50"/><path d="M4.6 75.8 q-0.7 -6.8 -3.5 -11.3" stroke="#f0d58c" stroke-width="1.3" opacity="0.50"/><path d="M91.6 50.2 q-0.2 -3.4 -1.0 -5.7" stroke="#7a5a1c" stroke-width="0.8" opacity="0.63"/><path d="M6.6 61.3 q-0.4 -4.9 -1.9 -8.1" stroke="#8a6620" stroke-width="1.0" opacity="0.50"/><path d="M160.9 75.4 q-0.3 -6.7 -1.6 -11.2" stroke="#8a6620" stroke-width="1.3" opacity="0.62"/><path d="M114.3 60.5 q0.2 -4.8 0.8 -7.9" stroke="#c9a044" stroke-width="1.0" opacity="0.75"/><path d="M38.2 60.1 q-0.3 -4.7 -1.6 -7.8" stroke="#7a5a1c" stroke-width="1.0" opacity="0.86"/><path d="M12.2 91.2 q0.2 -8.8 1.1 -14.7" stroke="#c9a044" stroke-width="1.5" opacity="0.89"/><path d="M53.4 50.0 q0.1 -3.4 0.7 -5.6" stroke="#f0d58c" stroke-width="0.8" opacity="0.52"/></g>
<path d="M122 58q5 -1 9 5q2 6 -1 12q-4 -4 -5 -10z" fill="#5d7a2c" opacity=".55" filter="url(#whb2)"/></svg></div></div><div class="nm" style="text-align:left;left:16px"><span style="letter-spacing:0.069px">iStock_000006511878Me<span style="font-size:9.82px;letter-spacing:0">…</span></span></div><div class="dt"><span style="letter-spacing:0.184px">2017-06-13</span></div></div>
<div class="card" style="left:232px;top:421px"><div class="pv"><div class="th" style="left:0px;top:3px;width:166px;height:111px;"><svg width="166" height="111" viewBox="0 0 166 111" preserveAspectRatio="none"><defs><linearGradient id="rdsky" x1="0" y1="0" x2="1" y2="0"><stop offset="0" stop-color="#7fa3ac"/><stop offset=".45" stop-color="#5e8896"/><stop offset="1" stop-color="#1d3e57"/></linearGradient>
<linearGradient id="rdsky2" x1="0" y1="0" x2="0" y2="1"><stop offset="0" stop-color="#2e4f60" stop-opacity=".55"/><stop offset=".45" stop-color="#b9d3d8" stop-opacity=".55"/><stop offset="1" stop-color="#eef4ee" stop-opacity=".95"/></linearGradient>
<radialGradient id="rdsun" cx="0.5" cy="0.5" r="0.5"><stop offset="0" stop-color="#fff"/><stop offset=".25" stop-color="#fdfde8" stop-opacity=".95"/><stop offset=".6" stop-color="#eef6d8" stop-opacity=".5"/><stop offset="1" stop-color="#eef6d8" stop-opacity="0"/></radialGradient>
<linearGradient id="rdrd" x1="0" y1="0" x2="1" y2="0"><stop offset="0" stop-color="#4a4028"/><stop offset=".3" stop-color="#8c7a50"/><stop offset=".5" stop-color="#5e5848"/><stop offset="1" stop-color="#2c2c2c"/></linearGradient>
<linearGradient id="rdrd2" x1="0" y1="0" x2="0" y2="1"><stop offset="0" stop-color="#000" stop-opacity="0"/><stop offset="1" stop-color="#000" stop-opacity=".45"/></linearGradient>
<filter id="rdb"><feGaussianBlur stdDeviation=".5"/></filter><filter id="rdb2"><feGaussianBlur stdDeviation="2"/></filter></defs>
<rect width="166" height="111" fill="url(#rdsky)"/><rect width="166" height="62" fill="url(#rdsky2)"/>
<g filter="url(#txrd)"><g filter="url(#rdb)">
<path d="M0 50L8 48L14 51L24 50L34 52L46 54L56 55L66 58L80 60L84 61L0 84z" fill="#5a7a2a"/><path d="M0 62L84 61L0 84z" fill="#3d5a22" opacity=".7"/>
<path d="M166 36L150 42L130 49L110 56L96 60L86 61L166 78z" fill="#3f6f2a"/>
<path d="M98 61.5L130 64L166 70V79L120 66z" fill="#a9cf3a" opacity=".9"/><path d="M100 60L130 58L166 54V66L130 63z" fill="#5f9a30" opacity=".8"/>
<path d="M10.0 47.0 l-1.8 12.0 h3.6 z" fill="#4d6b2e" opacity=".75"/><path d="M16.0 51.0 l-1.8 8.0 h3.6 z" fill="#4d6b2e" opacity=".75"/><path d="M30.0 42.0 l-1.8 18.0 h3.6 z" fill="#4d6b2e" opacity=".75"/><path d="M47.0 46.0 l-1.8 14.0 h3.6 z" fill="#4d6b2e" opacity=".75"/><path d="M58.0 51.0 l-1.8 9.0 h3.6 z" fill="#4d6b2e" opacity=".75"/><path d="M64.0 50.0 l-1.8 11.0 h3.6 z" fill="#4d6b2e" opacity=".75"/><path d="M70.0 54.0 l-1.8 8.0 h3.6 z" fill="#4d6b2e" opacity=".75"/><path d="M73.0 55.0 l-1.8 7.0 h3.6 z" fill="#4d6b2e" opacity=".75"/><path d="M112.0 50.0 l-2.6 12.0 h5.2 z" fill="#27482a"/><path d="M118.0 47.0 l-2.6 13.0 h5.2 z" fill="#27482a"/><path d="M124.0 44.0 l-2.6 14.0 h5.2 z" fill="#27482a"/><path d="M130.0 41.0 l-2.6 15.0 h5.2 z" fill="#27482a"/><path d="M136.0 36.0 l-2.6 18.0 h5.2 z" fill="#27482a"/><path d="M139.0 30.0 l-2.6 24.0 h5.2 z" fill="#27482a"/><path d="M143.0 30.0 l-2.6 23.0 h5.2 z" fill="#27482a"/><path d="M147.0 34.0 l-2.6 18.0 h5.2 z" fill="#27482a"/><path d="M150.0 26.0 l-2.6 26.0 h5.2 z" fill="#27482a"/><path d="M156.0 12.0 l-2.6 40.0 h5.2 z" fill="#27482a"/><path d="M160.0 24.0 l-2.6 26.0 h5.2 z" fill="#27482a"/><path d="M163.0 20.0 l-2.6 30.0 h5.2 z" fill="#27482a"/><path d="M166.0 24.0 l-2.6 24.0 h5.2 z" fill="#27482a"/>
<path d="M84 61L87 61L166 100V111H0V84z" fill="url(#rdrd)"/>
<path d="M84 61L87 61L166 100V111H0V84z" fill="url(#rdrd2)"/>
<path d="M92 62L166 78V99L90 62z" fill="#4a3a2a"/><path d="M110 66L166 80V84L100 64z" fill="#7a4a2c" opacity=".8"/>
<path d="M0 82L84 61L0 76z" fill="#4a3f24" opacity=".7"/>
<path d="M85.2 61.5h.8l-.4 8h-1.4z M84.4 73h1.6l-.8 12h-2.4z M82.6 89h2.8l-1.6 22h-4.2z" fill="#f4f4ee"/>
<path d="M0 99L80 62.5L81 62.5L0 101.5z" fill="#f0f0ea"/><path d="M90 62L166 99V101.5L89 62z" fill="#f0f0ea"/>
</g></g>
<circle cx="41" cy="50" r="30" fill="url(#rdsun)"/>
<path d="M41 54L28 82M41 54L44 76M41 54L52 70" stroke="#e6f08a" stroke-width=".7" opacity=".6" fill="none"/></svg></div></div><div class="nm" style="text-align:left;left:16px"><span style="letter-spacing:0.169px">iStock_000080350907_X<span style="font-size:9.82px;letter-spacing:0">…</span></span></div><div class="dt"><span style="letter-spacing:0.184px">2017-06-13</span></div></div>
<div class="card" style="left:440px;top:421px"><div class="pv"><div class="th" style="left:0px;top:3px;width:166px;height:111px;"><svg width="166" height="111" viewBox="0 0 166 111" preserveAspectRatio="none"><defs><linearGradient id="lvsky" x1="0" y1="0" x2="1" y2="0"><stop offset="0" stop-color="#d9c7ae"/><stop offset=".45" stop-color="#f0d3a8"/><stop offset=".8" stop-color="#f7b35a"/><stop offset="1" stop-color="#f09a40"/></linearGradient>
<linearGradient id="lvsky2" x1="0" y1="0" x2="0" y2="1"><stop offset="0" stop-color="#a9a59a" stop-opacity=".7"/><stop offset=".5" stop-color="#e8d4b8" stop-opacity=".2"/><stop offset="1" stop-color="#f5c9a8" stop-opacity=".5"/></linearGradient>
<radialGradient id="lvsun" cx="0.5" cy="0.5" r="0.5"><stop offset="0" stop-color="#fffbe0"/><stop offset=".15" stop-color="#ffe680"/><stop offset=".4" stop-color="#ffb040" stop-opacity=".7"/><stop offset="1" stop-color="#ff9a30" stop-opacity="0"/></radialGradient>
<linearGradient id="lvwarm" x1="0" y1="0" x2="1" y2="0"><stop offset=".4" stop-color="#c0508a" stop-opacity="0"/><stop offset="1" stop-color="#e0704a" stop-opacity=".5"/></linearGradient>
<linearGradient id="lvdark" x1="0" y1="0" x2="0" y2="1"><stop offset="0" stop-color="#c89ad0" stop-opacity=".45"/><stop offset=".35" stop-color="#9a70c0" stop-opacity=".1"/><stop offset="1" stop-color="#2a1860" stop-opacity=".35"/></linearGradient>
<filter id="lvb"><feGaussianBlur stdDeviation=".7"/></filter></defs>
<rect width="166" height="36" fill="url(#lvsky)"/><rect width="166" height="36" fill="url(#lvsky2)"/>
<path d="M80 33.5L110 32.5L128 31L140 30L166 31.5V35H80z" fill="#c88a8a" opacity=".7"/>
<g filter="url(#lvb)"><path d="M0 35H166V111H0z" fill="#6f48b4"/><path d="M40 35L-60 111L12 111z" fill="#8a5a4a" opacity=".8"/><path d="M40 35L66 111L118 111z" fill="#7a5060" opacity=".8"/><path d="M40 35L230 111L330 111z" fill="#5a3a70" opacity=".8"/><path d="M40 35L560 111L800 111z" fill="#6a4478" opacity=".8"/><rect y="35" width="166" height="30" fill="url(#lvwarm)"/><rect y="35" width="166" height="76" fill="url(#lvdark)"/><ellipse cx="92.9" cy="70.5" rx="0.7" ry="1.5" fill="#c8b0f0" opacity="0.56"/><ellipse cx="97.5" cy="74.6" rx="0.7" ry="1.6" fill="#8c6ad0" opacity="0.71"/><ellipse cx="101.9" cy="72.2" rx="0.7" ry="1.5" fill="#8c6ad0" opacity="0.39"/><ellipse cx="15.1" cy="59.5" rx="0.5" ry="1.2" fill="#c8b0f0" opacity="0.75"/><ellipse cx="98.8" cy="83.9" rx="0.9" ry="1.9" fill="#5a3c94" opacity="0.78"/><ellipse cx="102.2" cy="85.4" rx="0.9" ry="1.9" fill="#8c6ad0" opacity="0.63"/><ellipse cx="10.5" cy="98.5" rx="1.0" ry="2.3" fill="#a98be0" opacity="0.44"/><ellipse cx="5.0" cy="54.9" rx="0.5" ry="1.1" fill="#5a3c94" opacity="0.50"/><ellipse cx="32.4" cy="80.7" rx="0.8" ry="1.8" fill="#8c6ad0" opacity="0.64"/><ellipse cx="110.0" cy="74.0" rx="0.7" ry="1.6" fill="#5a3c94" opacity="0.64"/><ellipse cx="91.5" cy="67.1" rx="0.6" ry="1.4" fill="#c8b0f0" opacity="0.39"/><ellipse cx="125.8" cy="55.8" rx="0.5" ry="1.1" fill="#4a3180" opacity="0.48"/><ellipse cx="127.2" cy="42.2" rx="0.3" ry="0.7" fill="#5a3c94" opacity="0.40"/><ellipse cx="11.1" cy="58.5" rx="0.5" ry="1.2" fill="#a98be0" opacity="0.73"/><ellipse cx="34.8" cy="37.0" rx="0.3" ry="0.6" fill="#a98be0" opacity="0.56"/><ellipse cx="66.0" cy="109.5" rx="1.2" ry="2.6" fill="#a98be0" opacity="0.60"/><ellipse cx="112.0" cy="51.7" rx="0.5" ry="1.0" fill="#b79aea" opacity="0.39"/><ellipse cx="160.0" cy="61.6" rx="0.6" ry="1.2" fill="#c8b0f0" opacity="0.77"/><ellipse cx="117.4" cy="47.0" rx="0.4" ry="0.8" fill="#a98be0" opacity="0.38"/><ellipse cx="29.5" cy="96.0" rx="1.0" ry="2.2" fill="#4a3180" opacity="0.43"/><ellipse cx="163.6" cy="74.7" rx="0.7" ry="1.6" fill="#c8b0f0" opacity="0.41"/><ellipse cx="19.3" cy="84.6" rx="0.9" ry="1.9" fill="#5a3c94" opacity="0.80"/><ellipse cx="143.5" cy="37.0" rx="0.3" ry="0.6" fill="#c8b0f0" opacity="0.62"/><ellipse cx="3.3" cy="110.8" rx="1.2" ry="2.6" fill="#8c6ad0" opacity="0.53"/><ellipse cx="106.5" cy="100.2" rx="1.1" ry="2.3" fill="#a98be0" opacity="0.37"/><ellipse cx="73.3" cy="47.8" rx="0.4" ry="0.9" fill="#a98be0" opacity="0.70"/><ellipse cx="49.2" cy="61.3" rx="0.6" ry="1.2" fill="#a98be0" opacity="0.38"/><ellipse cx="105.7" cy="52.4" rx="0.5" ry="1.0" fill="#a98be0" opacity="0.62"/><ellipse cx="75.2" cy="64.5" rx="0.6" ry="1.3" fill="#4a3180" opacity="0.57"/><ellipse cx="143.8" cy="79.5" rx="0.8" ry="1.7" fill="#8c6ad0" opacity="0.63"/><ellipse cx="37.9" cy="60.0" rx="0.6" ry="1.2" fill="#4a3180" opacity="0.46"/><ellipse cx="122.7" cy="51.0" rx="0.4" ry="1.0" fill="#4a3180" opacity="0.44"/><ellipse cx="146.4" cy="107.3" rx="1.2" ry="2.5" fill="#4a3180" opacity="0.39"/><ellipse cx="18.1" cy="40.5" rx="0.3" ry="0.7" fill="#4a3180" opacity="0.78"/><ellipse cx="117.0" cy="54.6" rx="0.5" ry="1.1" fill="#b79aea" opacity="0.54"/><ellipse cx="81.5" cy="104.0" rx="1.1" ry="2.4" fill="#4a3180" opacity="0.43"/><ellipse cx="11.4" cy="90.3" rx="0.9" ry="2.0" fill="#8c6ad0" opacity="0.57"/><ellipse cx="102.2" cy="85.4" rx="0.9" ry="1.9" fill="#a98be0" opacity="0.48"/><ellipse cx="33.9" cy="104.9" rx="1.1" ry="2.4" fill="#a98be0" opacity="0.38"/><ellipse cx="41.3" cy="67.4" rx="0.6" ry="1.4" fill="#a98be0" opacity="0.43"/><ellipse cx="95.0" cy="64.3" rx="0.6" ry="1.3" fill="#8c6ad0" opacity="0.39"/><ellipse cx="74.8" cy="47.2" rx="0.4" ry="0.9" fill="#b79aea" opacity="0.65"/><ellipse cx="97.0" cy="88.2" rx="0.9" ry="2.0" fill="#8c6ad0" opacity="0.62"/><ellipse cx="78.8" cy="105.3" rx="1.1" ry="2.4" fill="#b79aea" opacity="0.67"/><ellipse cx="3.5" cy="108.2" rx="1.2" ry="2.5" fill="#9474d6" opacity="0.38"/><ellipse cx="51.6" cy="42.0" rx="0.3" ry="0.7" fill="#8c6ad0" opacity="0.80"/><ellipse cx="90.7" cy="42.6" rx="0.3" ry="0.7" fill="#9474d6" opacity="0.37"/><ellipse cx="122.4" cy="106.3" rx="1.1" ry="2.5" fill="#8c6ad0" opacity="0.71"/><ellipse cx="58.4" cy="104.7" rx="1.1" ry="2.4" fill="#9474d6" opacity="0.56"/><ellipse cx="142.3" cy="42.7" rx="0.3" ry="0.7" fill="#c8b0f0" opacity="0.36"/><ellipse cx="2.4" cy="74.0" rx="0.7" ry="1.6" fill="#9474d6" opacity="0.52"/><ellipse cx="101.1" cy="80.1" rx="0.8" ry="1.8" fill="#a98be0" opacity="0.39"/><ellipse cx="42.7" cy="45.6" rx="0.4" ry="0.8" fill="#5a3c94" opacity="0.68"/><ellipse cx="122.0" cy="65.7" rx="0.6" ry="1.4" fill="#4a3180" opacity="0.56"/><ellipse cx="89.8" cy="71.2" rx="0.7" ry="1.5" fill="#4a3180" opacity="0.69"/><ellipse cx="99.8" cy="39.2" rx="0.3" ry="0.6" fill="#5a3c94" opacity="0.36"/><ellipse cx="18.7" cy="107.8" rx="1.2" ry="2.5" fill="#c8b0f0" opacity="0.63"/><ellipse cx="42.5" cy="105.1" rx="1.1" ry="2.4" fill="#a98be0" opacity="0.52"/><ellipse cx="101.6" cy="47.6" rx="0.4" ry="0.9" fill="#4a3180" opacity="0.43"/><ellipse cx="109.6" cy="104.0" rx="1.1" ry="2.4" fill="#5a3c94" opacity="0.57"/><ellipse cx="67.2" cy="54.9" rx="0.5" ry="1.1" fill="#b79aea" opacity="0.44"/><ellipse cx="133.8" cy="68.9" rx="0.7" ry="1.4" fill="#8c6ad0" opacity="0.75"/><ellipse cx="96.8" cy="65.4" rx="0.6" ry="1.4" fill="#b79aea" opacity="0.44"/><ellipse cx="58.2" cy="47.0" rx="0.4" ry="0.8" fill="#c8b0f0" opacity="0.37"/><ellipse cx="162.7" cy="41.7" rx="0.3" ry="0.7" fill="#c8b0f0" opacity="0.43"/><ellipse cx="45.7" cy="70.3" rx="0.7" ry="1.5" fill="#8c6ad0" opacity="0.72"/><ellipse cx="86.3" cy="65.3" rx="0.6" ry="1.3" fill="#9474d6" opacity="0.49"/><ellipse cx="163.0" cy="99.1" rx="1.0" ry="2.3" fill="#5a3c94" opacity="0.49"/><ellipse cx="46.2" cy="98.3" rx="1.0" ry="2.3" fill="#4a3180" opacity="0.37"/><ellipse cx="94.7" cy="89.4" rx="0.9" ry="2.0" fill="#b79aea" opacity="0.64"/><ellipse cx="106.4" cy="78.7" rx="0.8" ry="1.7" fill="#5a3c94" opacity="0.55"/><ellipse cx="137.7" cy="38.8" rx="0.3" ry="0.6" fill="#8c6ad0" opacity="0.70"/><ellipse cx="163.3" cy="96.0" rx="1.0" ry="2.2" fill="#a98be0" opacity="0.55"/><ellipse cx="108.7" cy="83.6" rx="0.9" ry="1.9" fill="#c8b0f0" opacity="0.52"/><ellipse cx="32.9" cy="42.8" rx="0.3" ry="0.7" fill="#c8b0f0" opacity="0.56"/><ellipse cx="1.8" cy="50.2" rx="0.4" ry="0.9" fill="#5a3c94" opacity="0.59"/><ellipse cx="37.6" cy="39.7" rx="0.3" ry="0.6" fill="#c8b0f0" opacity="0.51"/><ellipse cx="86.4" cy="88.6" rx="0.9" ry="2.0" fill="#4a3180" opacity="0.80"/><ellipse cx="140.9" cy="48.8" rx="0.4" ry="0.9" fill="#9474d6" opacity="0.76"/><ellipse cx="154.8" cy="43.5" rx="0.3" ry="0.8" fill="#9474d6" opacity="0.52"/><ellipse cx="32.7" cy="70.3" rx="0.7" ry="1.5" fill="#a98be0" opacity="0.52"/><ellipse cx="146.0" cy="79.1" rx="0.8" ry="1.7" fill="#c8b0f0" opacity="0.72"/><ellipse cx="54.2" cy="62.4" rx="0.6" ry="1.3" fill="#8c6ad0" opacity="0.39"/><ellipse cx="132.5" cy="101.1" rx="1.1" ry="2.3" fill="#9474d6" opacity="0.41"/><ellipse cx="64.8" cy="54.9" rx="0.5" ry="1.1" fill="#a98be0" opacity="0.79"/><ellipse cx="131.3" cy="76.7" rx="0.8" ry="1.7" fill="#b79aea" opacity="0.47"/><ellipse cx="2.6" cy="90.2" rx="0.9" ry="2.0" fill="#4a3180" opacity="0.39"/><ellipse cx="91.4" cy="69.6" rx="0.7" ry="1.5" fill="#c8b0f0" opacity="0.47"/><ellipse cx="36.2" cy="105.1" rx="1.1" ry="2.4" fill="#c8b0f0" opacity="0.38"/><ellipse cx="28.7" cy="96.2" rx="1.0" ry="2.2" fill="#b79aea" opacity="0.66"/><ellipse cx="78.1" cy="104.8" rx="1.1" ry="2.4" fill="#4a3180" opacity="0.76"/><ellipse cx="112.5" cy="75.3" rx="0.7" ry="1.6" fill="#5a3c94" opacity="0.78"/><ellipse cx="157.6" cy="73.5" rx="0.7" ry="1.6" fill="#a98be0" opacity="0.69"/><ellipse cx="92.8" cy="69.5" rx="0.7" ry="1.5" fill="#c8b0f0" opacity="0.68"/><ellipse cx="86.8" cy="84.3" rx="0.9" ry="1.9" fill="#c8b0f0" opacity="0.76"/><ellipse cx="111.4" cy="56.0" rx="0.5" ry="1.1" fill="#c8b0f0" opacity="0.74"/><ellipse cx="50.5" cy="82.1" rx="0.8" ry="1.8" fill="#8c6ad0" opacity="0.79"/><ellipse cx="95.1" cy="75.8" rx="0.8" ry="1.6" fill="#8c6ad0" opacity="0.53"/><ellipse cx="0.8" cy="45.5" rx="0.4" ry="0.8" fill="#5a3c94" opacity="0.36"/><ellipse cx="85.7" cy="108.7" rx="1.2" ry="2.5" fill="#5a3c94" opacity="0.59"/><ellipse cx="20.2" cy="110.2" rx="1.2" ry="2.6" fill="#a98be0" opacity="0.66"/><ellipse cx="89.4" cy="41.9" rx="0.3" ry="0.7" fill="#5a3c94" opacity="0.76"/><ellipse cx="67.1" cy="96.2" rx="1.0" ry="2.2" fill="#8c6ad0" opacity="0.56"/><ellipse cx="72.0" cy="46.4" rx="0.4" ry="0.8" fill="#c8b0f0" opacity="0.77"/><ellipse cx="87.1" cy="105.1" rx="1.1" ry="2.4" fill="#a98be0" opacity="0.44"/><ellipse cx="153.6" cy="82.7" rx="0.8" ry="1.8" fill="#8c6ad0" opacity="0.67"/><ellipse cx="5.9" cy="109.3" rx="1.2" ry="2.6" fill="#8c6ad0" opacity="0.45"/><ellipse cx="53.5" cy="87.8" rx="0.9" ry="2.0" fill="#b79aea" opacity="0.46"/><ellipse cx="82.9" cy="73.9" rx="0.7" ry="1.6" fill="#4a3180" opacity="0.41"/><ellipse cx="41.6" cy="74.8" rx="0.7" ry="1.6" fill="#8c6ad0" opacity="0.67"/><ellipse cx="3.9" cy="102.0" rx="1.1" ry="2.4" fill="#9474d6" opacity="0.54"/><ellipse cx="26.5" cy="76.2" rx="0.8" ry="1.6" fill="#8c6ad0" opacity="0.74"/><ellipse cx="36.2" cy="76.5" rx="0.8" ry="1.7" fill="#8c6ad0" opacity="0.73"/><ellipse cx="142.2" cy="82.3" rx="0.8" ry="1.8" fill="#8c6ad0" opacity="0.76"/><ellipse cx="57.7" cy="83.5" rx="0.9" ry="1.8" fill="#8c6ad0" opacity="0.49"/><ellipse cx="153.2" cy="60.3" rx="0.6" ry="1.2" fill="#8c6ad0" opacity="0.70"/><ellipse cx="16.1" cy="51.4" rx="0.4" ry="1.0" fill="#8c6ad0" opacity="0.41"/><ellipse cx="64.4" cy="43.5" rx="0.3" ry="0.8" fill="#5a3c94" opacity="0.72"/><ellipse cx="131.1" cy="68.2" rx="0.7" ry="1.4" fill="#8c6ad0" opacity="0.44"/><ellipse cx="132.6" cy="83.5" rx="0.9" ry="1.8" fill="#a98be0" opacity="0.44"/><ellipse cx="151.3" cy="87.5" rx="0.9" ry="2.0" fill="#b79aea" opacity="0.40"/><ellipse cx="125.9" cy="74.4" rx="0.7" ry="1.6" fill="#4a3180" opacity="0.80"/><ellipse cx="133.3" cy="98.6" rx="1.0" ry="2.3" fill="#5a3c94" opacity="0.40"/><ellipse cx="91.6" cy="39.8" rx="0.3" ry="0.7" fill="#4a3180" opacity="0.76"/><ellipse cx="31.5" cy="72.6" rx="0.7" ry="1.5" fill="#a98be0" opacity="0.44"/><ellipse cx="164.4" cy="99.2" rx="1.1" ry="2.3" fill="#9474d6" opacity="0.39"/><ellipse cx="157.9" cy="41.6" rx="0.3" ry="0.7" fill="#5a3c94" opacity="0.38"/><ellipse cx="64.9" cy="44.2" rx="0.4" ry="0.8" fill="#5a3c94" opacity="0.58"/><ellipse cx="99.8" cy="68.8" rx="0.7" ry="1.4" fill="#a98be0" opacity="0.64"/><ellipse cx="33.2" cy="40.0" rx="0.3" ry="0.7" fill="#5a3c94" opacity="0.55"/><ellipse cx="67.3" cy="91.7" rx="1.0" ry="2.1" fill="#8c6ad0" opacity="0.62"/><ellipse cx="131.5" cy="44.0" rx="0.4" ry="0.8" fill="#b79aea" opacity="0.75"/><ellipse cx="117.0" cy="96.3" rx="1.0" ry="2.2" fill="#c8b0f0" opacity="0.76"/><ellipse cx="94.6" cy="106.5" rx="1.1" ry="2.5" fill="#8c6ad0" opacity="0.58"/><ellipse cx="133.6" cy="109.7" rx="1.2" ry="2.6" fill="#b79aea" opacity="0.48"/><ellipse cx="123.3" cy="45.6" rx="0.4" ry="0.8" fill="#8c6ad0" opacity="0.72"/><ellipse cx="148.8" cy="67.0" rx="0.6" ry="1.4" fill="#4a3180" opacity="0.66"/><ellipse cx="127.0" cy="93.8" rx="1.0" ry="2.1" fill="#5a3c94" opacity="0.44"/><ellipse cx="132.4" cy="50.7" rx="0.4" ry="0.9" fill="#b79aea" opacity="0.56"/><ellipse cx="59.0" cy="37.8" rx="0.3" ry="0.6" fill="#9474d6" opacity="0.76"/><ellipse cx="45.3" cy="40.7" rx="0.3" ry="0.7" fill="#9474d6" opacity="0.48"/><ellipse cx="67.4" cy="53.0" rx="0.5" ry="1.0" fill="#8c6ad0" opacity="0.59"/><ellipse cx="166.0" cy="65.8" rx="0.6" ry="1.4" fill="#9474d6" opacity="0.45"/><ellipse cx="65.6" cy="45.9" rx="0.4" ry="0.8" fill="#4a3180" opacity="0.36"/><ellipse cx="122.6" cy="82.5" rx="0.8" ry="1.8" fill="#b79aea" opacity="0.55"/><ellipse cx="126.4" cy="74.4" rx="0.7" ry="1.6" fill="#9474d6" opacity="0.52"/><ellipse cx="41.6" cy="44.3" rx="0.4" ry="0.8" fill="#b79aea" opacity="0.60"/><ellipse cx="160.5" cy="74.6" rx="0.7" ry="1.6" fill="#4a3180" opacity="0.73"/><ellipse cx="73.8" cy="44.4" rx="0.4" ry="0.8" fill="#9474d6" opacity="0.38"/><ellipse cx="126.0" cy="81.2" rx="0.8" ry="1.8" fill="#a98be0" opacity="0.52"/><ellipse cx="64.1" cy="106.5" rx="1.1" ry="2.5" fill="#8c6ad0" opacity="0.74"/><ellipse cx="99.0" cy="77.1" rx="0.8" ry="1.7" fill="#5a3c94" opacity="0.78"/><ellipse cx="87.4" cy="68.1" rx="0.7" ry="1.4" fill="#4a3180" opacity="0.49"/><ellipse cx="80.2" cy="76.3" rx="0.8" ry="1.6" fill="#b79aea" opacity="0.60"/><ellipse cx="119.0" cy="58.0" rx="0.5" ry="1.1" fill="#b79aea" opacity="0.36"/><ellipse cx="97.2" cy="94.2" rx="1.0" ry="2.1" fill="#9474d6" opacity="0.42"/><ellipse cx="64.7" cy="92.8" rx="1.0" ry="2.1" fill="#b79aea" opacity="0.69"/><ellipse cx="164.1" cy="40.7" rx="0.3" ry="0.7" fill="#b79aea" opacity="0.38"/><ellipse cx="71.3" cy="104.0" rx="1.1" ry="2.4" fill="#5a3c94" opacity="0.46"/><ellipse cx="7.5" cy="92.9" rx="1.0" ry="2.1" fill="#a98be0" opacity="0.77"/><ellipse cx="77.7" cy="90.5" rx="0.9" ry="2.0" fill="#c8b0f0" opacity="0.46"/><ellipse cx="8.4" cy="89.3" rx="0.9" ry="2.0" fill="#5a3c94" opacity="0.56"/><ellipse cx="8.6" cy="52.1" rx="0.5" ry="1.0" fill="#4a3180" opacity="0.42"/><ellipse cx="23.2" cy="63.9" rx="0.6" ry="1.3" fill="#5a3c94" opacity="0.55"/><ellipse cx="96.7" cy="56.4" rx="0.5" ry="1.1" fill="#5a3c94" opacity="0.51"/><ellipse cx="135.3" cy="92.0" rx="1.0" ry="2.1" fill="#8c6ad0" opacity="0.78"/><ellipse cx="39.6" cy="91.3" rx="1.0" ry="2.1" fill="#a98be0" opacity="0.58"/><ellipse cx="84.2" cy="59.8" rx="0.6" ry="1.2" fill="#c8b0f0" opacity="0.51"/><ellipse cx="113.7" cy="57.1" rx="0.5" ry="1.1" fill="#4a3180" opacity="0.66"/><ellipse cx="46.3" cy="51.1" rx="0.4" ry="1.0" fill="#8c6ad0" opacity="0.44"/><ellipse cx="162.6" cy="55.4" rx="0.5" ry="1.1" fill="#8c6ad0" opacity="0.75"/><ellipse cx="10.1" cy="39.9" rx="0.3" ry="0.7" fill="#b79aea" opacity="0.47"/><ellipse cx="6.3" cy="39.0" rx="0.3" ry="0.6" fill="#8c6ad0" opacity="0.59"/><ellipse cx="14.3" cy="42.4" rx="0.3" ry="0.7" fill="#9474d6" opacity="0.42"/><ellipse cx="162.9" cy="54.4" rx="0.5" ry="1.1" fill="#5a3c94" opacity="0.57"/><ellipse cx="57.1" cy="52.6" rx="0.5" ry="1.0" fill="#9474d6" opacity="0.41"/><ellipse cx="133.2" cy="101.4" rx="1.1" ry="2.3" fill="#5a3c94" opacity="0.71"/><ellipse cx="127.6" cy="83.2" rx="0.8" ry="1.8" fill="#8c6ad0" opacity="0.55"/><ellipse cx="64.8" cy="92.3" rx="1.0" ry="2.1" fill="#8c6ad0" opacity="0.52"/><ellipse cx="164.2" cy="85.4" rx="0.9" ry="1.9" fill="#b79aea" opacity="0.48"/><ellipse cx="137.1" cy="93.2" rx="1.0" ry="2.1" fill="#8c6ad0" opacity="0.54"/><ellipse cx="16.1" cy="64.3" rx="0.6" ry="1.3" fill="#b79aea" opacity="0.39"/><ellipse cx="93.7" cy="43.1" rx="0.3" ry="0.7" fill="#5a3c94" opacity="0.72"/><ellipse cx="136.7" cy="71.3" rx="0.7" ry="1.5" fill="#a98be0" opacity="0.38"/><ellipse cx="109.9" cy="52.8" rx="0.5" ry="1.0" fill="#a98be0" opacity="0.66"/><ellipse cx="126.8" cy="73.6" rx="0.7" ry="1.6" fill="#b79aea" opacity="0.48"/><ellipse cx="59.4" cy="47.6" rx="0.4" ry="0.9" fill="#9474d6" opacity="0.50"/><ellipse cx="53.5" cy="104.1" rx="1.1" ry="2.4" fill="#5a3c94" opacity="0.61"/><ellipse cx="156.0" cy="105.0" rx="1.1" ry="2.4" fill="#b79aea" opacity="0.55"/><ellipse cx="50.6" cy="96.4" rx="1.0" ry="2.2" fill="#b79aea" opacity="0.45"/><ellipse cx="121.1" cy="108.6" rx="1.2" ry="2.5" fill="#4a3180" opacity="0.46"/><ellipse cx="60.7" cy="63.8" rx="0.6" ry="1.3" fill="#b79aea" opacity="0.65"/><ellipse cx="132.2" cy="80.3" rx="0.8" ry="1.8" fill="#9474d6" opacity="0.60"/><ellipse cx="89.7" cy="96.0" rx="1.0" ry="2.2" fill="#c8b0f0" opacity="0.62"/><ellipse cx="14.9" cy="50.1" rx="0.4" ry="0.9" fill="#5a3c94" opacity="0.75"/><ellipse cx="3.7" cy="57.8" rx="0.5" ry="1.1" fill="#4a3180" opacity="0.38"/><ellipse cx="49.1" cy="48.7" rx="0.4" ry="0.9" fill="#a98be0" opacity="0.64"/><ellipse cx="10.6" cy="96.5" rx="1.0" ry="2.2" fill="#4a3180" opacity="0.49"/><ellipse cx="55.5" cy="77.4" rx="0.8" ry="1.7" fill="#b79aea" opacity="0.68"/><ellipse cx="14.1" cy="103.5" rx="1.1" ry="2.4" fill="#9474d6" opacity="0.64"/><ellipse cx="135.5" cy="44.2" rx="0.4" ry="0.8" fill="#5a3c94" opacity="0.46"/><ellipse cx="127.0" cy="53.3" rx="0.5" ry="1.0" fill="#4a3180" opacity="0.50"/><ellipse cx="58.2" cy="71.0" rx="0.7" ry="1.5" fill="#c8b0f0" opacity="0.79"/><ellipse cx="81.9" cy="86.8" rx="0.9" ry="1.9" fill="#4a3180" opacity="0.71"/><ellipse cx="102.6" cy="42.4" rx="0.3" ry="0.7" fill="#a98be0" opacity="0.53"/><ellipse cx="110.7" cy="98.1" rx="1.0" ry="2.2" fill="#c8b0f0" opacity="0.35"/><ellipse cx="14.8" cy="65.0" rx="0.6" ry="1.3" fill="#5a3c94" opacity="0.78"/><ellipse cx="87.0" cy="84.4" rx="0.9" ry="1.9" fill="#9474d6" opacity="0.35"/><ellipse cx="153.3" cy="45.1" rx="0.4" ry="0.8" fill="#8c6ad0" opacity="0.46"/><ellipse cx="105.4" cy="49.0" rx="0.4" ry="0.9" fill="#9474d6" opacity="0.43"/><ellipse cx="70.5" cy="52.1" rx="0.5" ry="1.0" fill="#b79aea" opacity="0.47"/><ellipse cx="78.3" cy="102.6" rx="1.1" ry="2.4" fill="#9474d6" opacity="0.40"/><ellipse cx="128.8" cy="85.0" rx="0.9" ry="1.9" fill="#8c6ad0" opacity="0.76"/><ellipse cx="2.9" cy="92.7" rx="1.0" ry="2.1" fill="#5a3c94" opacity="0.76"/><ellipse cx="18.0" cy="39.7" rx="0.3" ry="0.6" fill="#8c6ad0" opacity="0.51"/><ellipse cx="99.6" cy="80.5" rx="0.8" ry="1.8" fill="#5a3c94" opacity="0.62"/><ellipse cx="30.7" cy="53.6" rx="0.5" ry="1.0" fill="#b79aea" opacity="0.53"/><ellipse cx="155.6" cy="104.4" rx="1.1" ry="2.4" fill="#9474d6" opacity="0.60"/><ellipse cx="79.6" cy="97.5" rx="1.0" ry="2.2" fill="#b79aea" opacity="0.57"/><ellipse cx="158.6" cy="66.8" rx="0.6" ry="1.4" fill="#9474d6" opacity="0.60"/><ellipse cx="80.1" cy="107.8" rx="1.2" ry="2.5" fill="#8c6ad0" opacity="0.53"/><ellipse cx="22.3" cy="53.1" rx="0.5" ry="1.0" fill="#c8b0f0" opacity="0.52"/><ellipse cx="85.6" cy="76.0" rx="0.8" ry="1.6" fill="#b79aea" opacity="0.70"/><ellipse cx="153.4" cy="41.3" rx="0.3" ry="0.7" fill="#a98be0" opacity="0.74"/><ellipse cx="74.7" cy="104.0" rx="1.1" ry="2.4" fill="#8c6ad0" opacity="0.67"/><ellipse cx="26.1" cy="81.8" rx="0.8" ry="1.8" fill="#8c6ad0" opacity="0.70"/><ellipse cx="150.7" cy="47.7" rx="0.4" ry="0.9" fill="#c8b0f0" opacity="0.58"/><ellipse cx="164.9" cy="84.1" rx="0.9" ry="1.9" fill="#b79aea" opacity="0.58"/><ellipse cx="94.9" cy="40.9" rx="0.3" ry="0.7" fill="#8c6ad0" opacity="0.35"/><ellipse cx="140.5" cy="97.8" rx="1.0" ry="2.2" fill="#c8b0f0" opacity="0.41"/><ellipse cx="102.1" cy="63.0" rx="0.6" ry="1.3" fill="#4a3180" opacity="0.39"/><ellipse cx="77.8" cy="72.5" rx="0.7" ry="1.5" fill="#9474d6" opacity="0.61"/><ellipse cx="50.4" cy="100.4" rx="1.1" ry="2.3" fill="#c8b0f0" opacity="0.43"/><ellipse cx="113.3" cy="51.3" rx="0.4" ry="1.0" fill="#c8b0f0" opacity="0.72"/><ellipse cx="90.2" cy="52.4" rx="0.5" ry="1.0" fill="#4a3180" opacity="0.57"/><ellipse cx="160.0" cy="107.0" rx="1.2" ry="2.5" fill="#b79aea" opacity="0.49"/><ellipse cx="50.7" cy="42.6" rx="0.3" ry="0.7" fill="#5a3c94" opacity="0.65"/><ellipse cx="12.3" cy="42.0" rx="0.3" ry="0.7" fill="#8c6ad0" opacity="0.40"/><ellipse cx="76.7" cy="66.2" rx="0.6" ry="1.4" fill="#c8b0f0" opacity="0.72"/><ellipse cx="2.0" cy="85.4" rx="0.9" ry="1.9" fill="#5a3c94" opacity="0.67"/><ellipse cx="48.7" cy="72.2" rx="0.7" ry="1.5" fill="#a98be0" opacity="0.56"/><ellipse cx="164.6" cy="37.8" rx="0.3" ry="0.6" fill="#c8b0f0" opacity="0.67"/><ellipse cx="25.3" cy="103.7" rx="1.1" ry="2.4" fill="#9474d6" opacity="0.52"/><ellipse cx="49.5" cy="76.9" rx="0.8" ry="1.7" fill="#b79aea" opacity="0.69"/><ellipse cx="14.4" cy="78.1" rx="0.8" ry="1.7" fill="#8c6ad0" opacity="0.44"/><ellipse cx="54.7" cy="91.1" rx="0.9" ry="2.1" fill="#b79aea" opacity="0.60"/><ellipse cx="55.1" cy="90.6" rx="0.9" ry="2.0" fill="#c8b0f0" opacity="0.52"/><ellipse cx="103.2" cy="44.5" rx="0.4" ry="0.8" fill="#8c6ad0" opacity="0.65"/><ellipse cx="29.9" cy="89.4" rx="0.9" ry="2.0" fill="#5a3c94" opacity="0.37"/><ellipse cx="116.9" cy="71.3" rx="0.7" ry="1.5" fill="#a98be0" opacity="0.45"/><ellipse cx="20.6" cy="48.6" rx="0.4" ry="0.9" fill="#5a3c94" opacity="0.70"/><ellipse cx="136.7" cy="62.3" rx="0.6" ry="1.3" fill="#4a3180" opacity="0.41"/><ellipse cx="24.6" cy="52.2" rx="0.5" ry="1.0" fill="#9474d6" opacity="0.52"/><ellipse cx="68.4" cy="61.5" rx="0.6" ry="1.2" fill="#a98be0" opacity="0.68"/><ellipse cx="52.7" cy="82.4" rx="0.8" ry="1.8" fill="#c8b0f0" opacity="0.71"/><ellipse cx="101.0" cy="85.9" rx="0.9" ry="1.9" fill="#a98be0" opacity="0.47"/><ellipse cx="50.9" cy="51.0" rx="0.4" ry="1.0" fill="#5a3c94" opacity="0.40"/><ellipse cx="84.6" cy="64.9" rx="0.6" ry="1.3" fill="#c8b0f0" opacity="0.48"/><ellipse cx="118.4" cy="44.6" rx="0.4" ry="0.8" fill="#b79aea" opacity="0.69"/><ellipse cx="91.0" cy="103.8" rx="1.1" ry="2.4" fill="#b79aea" opacity="0.63"/><ellipse cx="95.3" cy="75.0" rx="0.7" ry="1.6" fill="#8c6ad0" opacity="0.79"/><ellipse cx="118.8" cy="75.2" rx="0.7" ry="1.6" fill="#c8b0f0" opacity="0.77"/><ellipse cx="4.4" cy="79.0" rx="0.8" ry="1.7" fill="#9474d6" opacity="0.44"/><ellipse cx="40.6" cy="43.2" rx="0.3" ry="0.7" fill="#4a3180" opacity="0.54"/><ellipse cx="15.2" cy="61.7" rx="0.6" ry="1.3" fill="#c8b0f0" opacity="0.51"/><ellipse cx="20.6" cy="71.3" rx="0.7" ry="1.5" fill="#9474d6" opacity="0.41"/><ellipse cx="90.2" cy="103.9" rx="1.1" ry="2.4" fill="#4a3180" opacity="0.38"/><ellipse cx="28.0" cy="104.7" rx="1.1" ry="2.4" fill="#9474d6" opacity="0.80"/><ellipse cx="99.8" cy="97.5" rx="1.0" ry="2.2" fill="#a98be0" opacity="0.77"/><ellipse cx="113.7" cy="37.3" rx="0.3" ry="0.6" fill="#b79aea" opacity="0.46"/><ellipse cx="137.9" cy="79.4" rx="0.8" ry="1.7" fill="#8c6ad0" opacity="0.62"/><ellipse cx="75.4" cy="97.0" rx="1.0" ry="2.2" fill="#5a3c94" opacity="0.43"/><ellipse cx="155.9" cy="110.0" rx="1.2" ry="2.6" fill="#9474d6" opacity="0.41"/><ellipse cx="140.7" cy="93.0" rx="1.0" ry="2.1" fill="#5a3c94" opacity="0.63"/><ellipse cx="126.7" cy="84.4" rx="0.9" ry="1.9" fill="#8c6ad0" opacity="0.44"/><ellipse cx="23.7" cy="71.6" rx="0.7" ry="1.5" fill="#5a3c94" opacity="0.40"/><ellipse cx="55.8" cy="67.0" rx="0.6" ry="1.4" fill="#8c6ad0" opacity="0.47"/><ellipse cx="55.1" cy="79.0" rx="0.8" ry="1.7" fill="#9474d6" opacity="0.70"/><ellipse cx="130.7" cy="90.4" rx="0.9" ry="2.0" fill="#5a3c94" opacity="0.78"/><ellipse cx="78.0" cy="81.4" rx="0.8" ry="1.8" fill="#5a3c94" opacity="0.75"/><ellipse cx="93.8" cy="104.6" rx="1.1" ry="2.4" fill="#5a3c94" opacity="0.69"/><ellipse cx="165.1" cy="72.9" rx="0.7" ry="1.6" fill="#c8b0f0" opacity="0.76"/><ellipse cx="137.0" cy="88.1" rx="0.9" ry="2.0" fill="#a98be0" opacity="0.60"/><ellipse cx="87.3" cy="104.0" rx="1.1" ry="2.4" fill="#4a3180" opacity="0.58"/><ellipse cx="4.0" cy="68.1" rx="0.7" ry="1.4" fill="#a98be0" opacity="0.48"/><ellipse cx="71.9" cy="82.6" rx="0.8" ry="1.8" fill="#5a3c94" opacity="0.62"/><ellipse cx="50.6" cy="92.6" rx="1.0" ry="2.1" fill="#4a3180" opacity="0.74"/><ellipse cx="140.2" cy="55.1" rx="0.5" ry="1.1" fill="#8c6ad0" opacity="0.58"/><ellipse cx="8.6" cy="66.4" rx="0.6" ry="1.4" fill="#9474d6" opacity="0.40"/><ellipse cx="90.5" cy="104.3" rx="1.1" ry="2.4" fill="#9474d6" opacity="0.53"/><ellipse cx="11.4" cy="54.5" rx="0.5" ry="1.1" fill="#9474d6" opacity="0.78"/><ellipse cx="143.8" cy="86.3" rx="0.9" ry="1.9" fill="#5a3c94" opacity="0.60"/><ellipse cx="107.8" cy="49.1" rx="0.4" ry="0.9" fill="#5a3c94" opacity="0.61"/><ellipse cx="16.4" cy="103.9" rx="1.1" ry="2.4" fill="#c8b0f0" opacity="0.41"/><ellipse cx="95.6" cy="102.3" rx="1.1" ry="2.4" fill="#5a3c94" opacity="0.35"/><ellipse cx="49.7" cy="55.1" rx="0.5" ry="1.1" fill="#b79aea" opacity="0.43"/><ellipse cx="74.7" cy="69.6" rx="0.7" ry="1.5" fill="#4a3180" opacity="0.53"/><ellipse cx="97.2" cy="63.4" rx="0.6" ry="1.3" fill="#a98be0" opacity="0.49"/><ellipse cx="52.1" cy="70.7" rx="0.7" ry="1.5" fill="#b79aea" opacity="0.57"/><ellipse cx="162.2" cy="106.1" rx="1.1" ry="2.5" fill="#5a3c94" opacity="0.75"/><ellipse cx="142.6" cy="52.0" rx="0.5" ry="1.0" fill="#9474d6" opacity="0.75"/><ellipse cx="139.1" cy="51.5" rx="0.4" ry="1.0" fill="#b79aea" opacity="0.75"/><ellipse cx="105.5" cy="38.2" rx="0.3" ry="0.6" fill="#9474d6" opacity="0.80"/><ellipse cx="105.0" cy="51.9" rx="0.5" ry="1.0" fill="#8c6ad0" opacity="0.78"/><ellipse cx="107.9" cy="109.2" rx="1.2" ry="2.6" fill="#b79aea" opacity="0.68"/><ellipse cx="149.5" cy="60.2" rx="0.6" ry="1.2" fill="#c8b0f0" opacity="0.54"/><ellipse cx="55.6" cy="102.0" rx="1.1" ry="2.4" fill="#c8b0f0" opacity="0.55"/><ellipse cx="37.1" cy="42.8" rx="0.3" ry="0.7" fill="#b79aea" opacity="0.40"/><ellipse cx="44.6" cy="88.1" rx="0.9" ry="2.0" fill="#9474d6" opacity="0.46"/><ellipse cx="131.2" cy="86.2" rx="0.9" ry="1.9" fill="#b79aea" opacity="0.71"/><ellipse cx="19.2" cy="75.8" rx="0.8" ry="1.6" fill="#4a3180" opacity="0.45"/><ellipse cx="153.8" cy="59.3" rx="0.5" ry="1.2" fill="#9474d6" opacity="0.45"/><ellipse cx="110.9" cy="46.8" rx="0.4" ry="0.8" fill="#5a3c94" opacity="0.79"/><ellipse cx="87.7" cy="69.6" rx="0.7" ry="1.5" fill="#4a3180" opacity="0.76"/><ellipse cx="97.4" cy="37.5" rx="0.3" ry="0.6" fill="#4a3180" opacity="0.46"/><ellipse cx="14.5" cy="96.4" rx="1.0" ry="2.2" fill="#b79aea" opacity="0.79"/><ellipse cx="29.8" cy="51.0" rx="0.4" ry="1.0" fill="#9474d6" opacity="0.60"/><ellipse cx="148.9" cy="50.8" rx="0.4" ry="1.0" fill="#a98be0" opacity="0.63"/><ellipse cx="97.1" cy="104.8" rx="1.1" ry="2.4" fill="#a98be0" opacity="0.77"/><ellipse cx="29.9" cy="74.0" rx="0.7" ry="1.6" fill="#4a3180" opacity="0.70"/><ellipse cx="53.3" cy="104.3" rx="1.1" ry="2.4" fill="#5a3c94" opacity="0.70"/><ellipse cx="83.9" cy="75.2" rx="0.7" ry="1.6" fill="#c8b0f0" opacity="0.64"/><ellipse cx="123.6" cy="109.8" rx="1.2" ry="2.6" fill="#4a3180" opacity="0.43"/><ellipse cx="27.4" cy="94.7" rx="1.0" ry="2.2" fill="#4a3180" opacity="0.55"/><ellipse cx="90.9" cy="86.5" rx="0.9" ry="1.9" fill="#b79aea" opacity="0.70"/><ellipse cx="39.2" cy="95.5" rx="1.0" ry="2.2" fill="#5a3c94" opacity="0.59"/><ellipse cx="100.1" cy="100.1" rx="1.1" ry="2.3" fill="#b79aea" opacity="0.37"/><ellipse cx="118.6" cy="81.2" rx="0.8" ry="1.8" fill="#4a3180" opacity="0.55"/><ellipse cx="54.0" cy="102.2" rx="1.1" ry="2.4" fill="#4a3180" opacity="0.36"/><ellipse cx="72.1" cy="73.7" rx="0.7" ry="1.6" fill="#5a3c94" opacity="0.68"/><ellipse cx="5.1" cy="100.4" rx="1.1" ry="2.3" fill="#a98be0" opacity="0.76"/><ellipse cx="90.2" cy="79.1" rx="0.8" ry="1.7" fill="#c8b0f0" opacity="0.67"/><ellipse cx="9.0" cy="83.1" rx="0.8" ry="1.8" fill="#5a3c94" opacity="0.37"/><ellipse cx="103.1" cy="60.3" rx="0.6" ry="1.2" fill="#4a3180" opacity="0.70"/><ellipse cx="82.7" cy="93.6" rx="1.0" ry="2.1" fill="#9474d6" opacity="0.72"/><ellipse cx="42.3" cy="49.7" rx="0.4" ry="0.9" fill="#8c6ad0" opacity="0.57"/><ellipse cx="98.9" cy="85.8" rx="0.9" ry="1.9" fill="#5a3c94" opacity="0.38"/><ellipse cx="60.5" cy="67.4" rx="0.6" ry="1.4" fill="#8c6ad0" opacity="0.67"/><ellipse cx="21.3" cy="107.8" rx="1.2" ry="2.5" fill="#c8b0f0" opacity="0.69"/><ellipse cx="24.0" cy="110.0" rx="1.2" ry="2.6" fill="#5a3c94" opacity="0.58"/><ellipse cx="0.6" cy="109.9" rx="1.2" ry="2.6" fill="#5a3c94" opacity="0.75"/><ellipse cx="65.2" cy="47.5" rx="0.4" ry="0.9" fill="#b79aea" opacity="0.56"/><ellipse cx="161.3" cy="106.2" rx="1.1" ry="2.5" fill="#9474d6" opacity="0.80"/><ellipse cx="121.9" cy="93.5" rx="1.0" ry="2.1" fill="#8c6ad0" opacity="0.48"/><ellipse cx="142.0" cy="45.8" rx="0.4" ry="0.8" fill="#5a3c94" opacity="0.56"/><ellipse cx="60.4" cy="106.0" rx="1.1" ry="2.5" fill="#b79aea" opacity="0.78"/><ellipse cx="36.2" cy="105.3" rx="1.1" ry="2.4" fill="#8c6ad0" opacity="0.53"/><ellipse cx="9.7" cy="85.1" rx="0.9" ry="1.9" fill="#b79aea" opacity="0.61"/><ellipse cx="146.8" cy="104.5" rx="1.1" ry="2.4" fill="#8c6ad0" opacity="0.56"/><ellipse cx="139.9" cy="66.1" rx="0.6" ry="1.4" fill="#5a3c94" opacity="0.52"/><ellipse cx="69.5" cy="40.6" rx="0.3" ry="0.7" fill="#8c6ad0" opacity="0.43"/><ellipse cx="27.2" cy="77.7" rx="0.8" ry="1.7" fill="#8c6ad0" opacity="0.53"/><ellipse cx="126.1" cy="80.9" rx="0.8" ry="1.8" fill="#5a3c94" opacity="0.55"/><ellipse cx="112.7" cy="110.5" rx="1.2" ry="2.6" fill="#c8b0f0" opacity="0.57"/><ellipse cx="69.6" cy="77.0" rx="0.8" ry="1.7" fill="#a98be0" opacity="0.66"/><ellipse cx="45.6" cy="63.8" rx="0.6" ry="1.3" fill="#a98be0" opacity="0.58"/><ellipse cx="85.0" cy="91.9" rx="1.0" ry="2.1" fill="#4a3180" opacity="0.77"/><ellipse cx="44.6" cy="89.9" rx="0.9" ry="2.0" fill="#b79aea" opacity="0.38"/><ellipse cx="129.0" cy="90.9" rx="0.9" ry="2.0" fill="#8c6ad0" opacity="0.69"/><ellipse cx="150.6" cy="90.5" rx="0.9" ry="2.0" fill="#a98be0" opacity="0.80"/><ellipse cx="74.7" cy="99.1" rx="1.0" ry="2.3" fill="#c8b0f0" opacity="0.75"/><ellipse cx="127.9" cy="61.1" rx="0.6" ry="1.2" fill="#4a3180" opacity="0.65"/><ellipse cx="100.9" cy="59.4" rx="0.5" ry="1.2" fill="#5a3c94" opacity="0.37"/><ellipse cx="98.8" cy="48.2" rx="0.4" ry="0.9" fill="#a98be0" opacity="0.44"/><ellipse cx="79.5" cy="67.4" rx="0.6" ry="1.4" fill="#9474d6" opacity="0.41"/><ellipse cx="43.2" cy="89.3" rx="0.9" ry="2.0" fill="#9474d6" opacity="0.55"/><ellipse cx="146.1" cy="64.9" rx="0.6" ry="1.3" fill="#c8b0f0" opacity="0.48"/><ellipse cx="67.3" cy="89.7" rx="0.9" ry="2.0" fill="#5a3c94" opacity="0.58"/><ellipse cx="17.0" cy="63.3" rx="0.6" ry="1.3" fill="#b79aea" opacity="0.51"/><ellipse cx="6.8" cy="53.0" rx="0.5" ry="1.0" fill="#a98be0" opacity="0.69"/><ellipse cx="1.9" cy="72.7" rx="0.7" ry="1.6" fill="#c8b0f0" opacity="0.79"/><ellipse cx="111.3" cy="59.1" rx="0.5" ry="1.2" fill="#c8b0f0" opacity="0.45"/><ellipse cx="110.7" cy="88.0" rx="0.9" ry="2.0" fill="#c8b0f0" opacity="0.74"/><ellipse cx="105.0" cy="54.4" rx="0.5" ry="1.0" fill="#a98be0" opacity="0.71"/><ellipse cx="81.8" cy="45.9" rx="0.4" ry="0.8" fill="#5a3c94" opacity="0.52"/><ellipse cx="82.5" cy="61.3" rx="0.6" ry="1.2" fill="#b79aea" opacity="0.45"/><ellipse cx="33.5" cy="105.5" rx="1.1" ry="2.4" fill="#c8b0f0" opacity="0.43"/><ellipse cx="39.8" cy="86.2" rx="0.9" ry="1.9" fill="#a98be0" opacity="0.68"/><ellipse cx="133.5" cy="104.2" rx="1.1" ry="2.4" fill="#5a3c94" opacity="0.61"/><ellipse cx="91.8" cy="88.9" rx="0.9" ry="2.0" fill="#9474d6" opacity="0.76"/><ellipse cx="20.0" cy="103.8" rx="1.1" ry="2.4" fill="#a98be0" opacity="0.76"/><ellipse cx="62.6" cy="57.1" rx="0.5" ry="1.1" fill="#c8b0f0" opacity="0.61"/><ellipse cx="54.0" cy="71.7" rx="0.7" ry="1.5" fill="#b79aea" opacity="0.38"/><ellipse cx="53.7" cy="39.6" rx="0.3" ry="0.6" fill="#b79aea" opacity="0.60"/><ellipse cx="110.9" cy="56.4" rx="0.5" ry="1.1" fill="#8c6ad0" opacity="0.64"/><ellipse cx="56.7" cy="65.4" rx="0.6" ry="1.4" fill="#b79aea" opacity="0.36"/><ellipse cx="35.9" cy="89.3" rx="0.9" ry="2.0" fill="#a98be0" opacity="0.63"/><ellipse cx="68.2" cy="82.9" rx="0.8" ry="1.8" fill="#5a3c94" opacity="0.38"/><ellipse cx="77.0" cy="42.1" rx="0.3" ry="0.7" fill="#5a3c94" opacity="0.52"/><ellipse cx="6.3" cy="104.3" rx="1.1" ry="2.4" fill="#8c6ad0" opacity="0.66"/><ellipse cx="82.2" cy="57.2" rx="0.5" ry="1.1" fill="#5a3c94" opacity="0.79"/><ellipse cx="31.9" cy="48.1" rx="0.4" ry="0.9" fill="#8c6ad0" opacity="0.47"/><ellipse cx="86.4" cy="53.3" rx="0.5" ry="1.0" fill="#4a3180" opacity="0.79"/><ellipse cx="90.8" cy="37.3" rx="0.3" ry="0.6" fill="#c8b0f0" opacity="0.64"/><ellipse cx="103.6" cy="77.6" rx="0.8" ry="1.7" fill="#4a3180" opacity="0.75"/><ellipse cx="132.2" cy="88.1" rx="0.9" ry="2.0" fill="#b79aea" opacity="0.51"/><ellipse cx="52.0" cy="102.6" rx="1.1" ry="2.4" fill="#9474d6" opacity="0.44"/><ellipse cx="26.0" cy="66.3" rx="0.6" ry="1.4" fill="#8c6ad0" opacity="0.72"/><ellipse cx="103.2" cy="48.8" rx="0.4" ry="0.9" fill="#5a3c94" opacity="0.71"/><ellipse cx="68.9" cy="58.7" rx="0.5" ry="1.2" fill="#b79aea" opacity="0.69"/><ellipse cx="39.3" cy="76.5" rx="0.8" ry="1.7" fill="#8c6ad0" opacity="0.51"/><ellipse cx="152.3" cy="89.3" rx="0.9" ry="2.0" fill="#9474d6" opacity="0.41"/><ellipse cx="11.4" cy="41.7" rx="0.3" ry="0.7" fill="#a98be0" opacity="0.75"/><ellipse cx="140.9" cy="60.0" rx="0.6" ry="1.2" fill="#4a3180" opacity="0.70"/><ellipse cx="27.0" cy="72.6" rx="0.7" ry="1.5" fill="#c8b0f0" opacity="0.54"/><ellipse cx="57.2" cy="72.7" rx="0.7" ry="1.6" fill="#5a3c94" opacity="0.58"/><ellipse cx="65.1" cy="95.9" rx="1.0" ry="2.2" fill="#9474d6" opacity="0.64"/><ellipse cx="113.4" cy="64.2" rx="0.6" ry="1.3" fill="#8c6ad0" opacity="0.50"/><ellipse cx="139.9" cy="93.2" rx="1.0" ry="2.1" fill="#c8b0f0" opacity="0.41"/><ellipse cx="106.4" cy="109.8" rx="1.2" ry="2.6" fill="#8c6ad0" opacity="0.63"/><ellipse cx="133.0" cy="98.5" rx="1.0" ry="2.3" fill="#8c6ad0" opacity="0.44"/><ellipse cx="48.5" cy="83.0" rx="0.8" ry="1.8" fill="#9474d6" opacity="0.43"/><ellipse cx="97.2" cy="38.0" rx="0.3" ry="0.6" fill="#c8b0f0" opacity="0.79"/><ellipse cx="114.1" cy="46.9" rx="0.4" ry="0.8" fill="#5a3c94" opacity="0.46"/><ellipse cx="64.2" cy="86.3" rx="0.9" ry="1.9" fill="#9474d6" opacity="0.79"/><ellipse cx="118.4" cy="40.6" rx="0.3" ry="0.7" fill="#a98be0" opacity="0.74"/><ellipse cx="59.2" cy="51.3" rx="0.4" ry="1.0" fill="#4a3180" opacity="0.80"/><ellipse cx="54.8" cy="45.9" rx="0.4" ry="0.8" fill="#a98be0" opacity="0.72"/><ellipse cx="28.4" cy="100.3" rx="1.1" ry="2.3" fill="#a98be0" opacity="0.49"/><ellipse cx="139.2" cy="96.2" rx="1.0" ry="2.2" fill="#b79aea" opacity="0.45"/></g>
<circle cx="143" cy="29.5" r="16" fill="url(#lvsun)"/>
<path d="M143 30L118 60M143 30L147 52M143 30L160 50" stroke="#ff9a3a" stroke-width="1" opacity=".55" fill="none"/>
<path d="M42 30.5L46 28L57 29.5V35.5H42z" fill="#bfb09a"/><path d="M52 21C53 17 55 17 56 21C57.5 24 57 29 54 29.5C51.5 29 51 24 52 21z" fill="#2f3a2a"/></svg></div></div><div class="nm" style="text-align:left;left:16px"><span style="letter-spacing:0.156px">iStock_75050049_XLARG<span style="font-size:9.82px;letter-spacing:0">…</span></span></div><div class="dt"><span style="letter-spacing:0.184px">2017-06-13</span></div></div>
<div class="card" style="left:648px;top:421px"><div class="pv"><div class="th" style="left:0px;top:12px;width:166px;height:93px;"><svg width="166" height="93" viewBox="0 0 166 93" preserveAspectRatio="none"><defs><linearGradient id="bnsky" x1="0" y1="0" x2="0" y2="1"><stop offset="0" stop-color="#b4b4ee"/><stop offset=".3" stop-color="#e6cdee"/><stop offset=".5" stop-color="#f3dbe6"/><stop offset=".56" stop-color="#8ea0d0"/><stop offset=".66" stop-color="#8a9cc8"/><stop offset=".67" stop-color="#8aa83c"/><stop offset=".8" stop-color="#a9c442"/><stop offset="1" stop-color="#c4d050"/></linearGradient>
<linearGradient id="bntr" x1="0" y1="0" x2="1" y2="0"><stop offset="0" stop-color="#c47848"/><stop offset=".25" stop-color="#7a4424"/><stop offset=".6" stop-color="#6a3a20"/><stop offset="1" stop-color="#4a2a1c"/></linearGradient>
<radialGradient id="bnbd" cx="0.45" cy="0.4" r="0.7"><stop offset="0" stop-color="#8a8a9a"/><stop offset=".6" stop-color="#6c6a7c"/><stop offset="1" stop-color="#4e4a5e"/></radialGradient>
<filter id="bnb"><feGaussianBlur stdDeviation=".7"/></filter><filter id="bnb2"><feGaussianBlur stdDeviation="1.6"/></filter></defs>
<rect width="166" height="93" fill="url(#bnsky)"/>
<g filter="url(#bnb)">
<path d="M100 0H166V22C160 28 152 30 146 26C140 34 128 36 118 32C110 34 102 30 100 24z" fill="#3a6a3c"/>
<path d="M120 4C132 8 140 2 150 6C158 10 162 4 166 6V18C156 24 140 22 128 26C118 24 112 14 120 4z" fill="#4e8a48" opacity=".8"/>
<path d="M128 50C128 40 122 34 116 28L120 26C126 32 130 36 132 28C132 20 128 10 126 0H130C132 10 136 20 138 28C142 22 146 18 150 12L153 14C148 22 140 32 136 42C134 46 134 50 134 54z" fill="#5a5e8a"/>
<path d="M4 0H34V10C30 16 24 18 18 14C12 12 6 8 4 0z" fill="#5a9a6a"/><circle cx="24" cy="8" r="4" fill="#7a7a2c"/><circle cx="23" cy="20" r="3.6" fill="#84802e"/>
<path d="M28 0H112C108 14 104 30 100 46L64 93H19C26 76 30 56 30 36C30 22 29 10 28 0z" fill="url(#bntr)"/>
<path d="M40 10L56 18L48 30L60 40L46 52L56 62L40 74L34 60L38 40L34 24z" fill="#3e2418" opacity=".55" filter="url(#bnb2)"/>
<path d="M60 0L100 0L96 20L84 30L76 20L66 14z" fill="#3a2218" opacity=".6" filter="url(#bnb2)"/>
<path d="M78 22C84 16 92 12 100 11C104 10.5 106 12 105 14C102 20 98 24 93 24.5C90 25 84 24 78 22z" fill="#66627a"/><path d="M84 20C90 16 96 14 101 13.5C99 19 95 22 92 22z" fill="#8a7a8c"/>
<path d="M66 24C70 18 80 18 88 22C96 26 100 30 106 34C118 36 130 42 138 56C146 62 154 68 160 76C166 82 166 90 160 90C154 88 150 82 144 76C140 74 136 74 132 76C134 82 134 88 132 93H42C44 84 48 74 56 66C62 60 64 54 64 48C60 42 62 30 66 24z" fill="url(#bnbd)"/>
<path d="M64 36C68 34 72 36 72 40C70 44 66 46 64 48z" fill="#9a98a8" opacity=".6"/>
<path d="M42 93C46 84 50 78 56 74L62 93z" fill="#4a465a" opacity=".7"/>
<circle cx="71.5" cy="30" r="1.3" fill="#e8e4ec"/><path d="M64.6 41.8h3v2h-3z" fill="#f0ead8"/>
<path d="M140 70C146 68 154 72 160 78C164 84 164 90 160 90C154 88 148 82 140 78z" fill="#5a5468"/>
</g></svg></div></div><div class="nm" style="text-align:left;left:16px"><span style="letter-spacing:0.387px">Big_Buck_Bunny_UHD__<span style="font-size:9.82px;letter-spacing:0">…</span></span></div><div class="dt"><span style="letter-spacing:0.184px">2017-06-22</span></div></div>
<div class="card" style="left:856px;top:421px"><div class="pv"><div class="th" style="left:0px;top:11px;width:166px;height:94px;"><svg width="166" height="94" viewBox="0 0 166 94" preserveAspectRatio="none"><defs><linearGradient id="vmbg" x1="0" y1="0" x2="0" y2="1"><stop offset="0" stop-color="#2f6244"/><stop offset=".35" stop-color="#3e7a58"/><stop offset=".55" stop-color="#4a8a7a"/><stop offset=".62" stop-color="#7aa83a"/><stop offset=".8" stop-color="#8cb832"/><stop offset="1" stop-color="#a4c838"/></linearGradient>
<radialGradient id="vmlt" cx="0.5" cy="0.5" r="0.5"><stop offset="0" stop-color="#e6f04a" stop-opacity=".9"/><stop offset="1" stop-color="#d6e84a" stop-opacity="0"/></radialGradient>
<radialGradient id="vmlt2" cx="0.5" cy="0.5" r="0.5"><stop offset="0" stop-color="#e6c88a" stop-opacity=".55"/><stop offset="1" stop-color="#e6c88a" stop-opacity="0"/></radialGradient>
<filter id="vmb"><feGaussianBlur stdDeviation=".8"/></filter><filter id="vmb2"><feGaussianBlur stdDeviation="2"/></filter></defs>
<rect width="166" height="94" fill="url(#vmbg)"/>
<g filter="url(#vmb)"><circle cx="27.4" cy="34.5" r="3.2" fill="#6aac50" opacity="0.39"/><circle cx="131.6" cy="40.4" r="3.3" fill="#5a9a4a" opacity="0.39"/><circle cx="0.5" cy="18.6" r="1.7" fill="#4a8a5a" opacity="0.62"/><circle cx="38.6" cy="11.6" r="3.0" fill="#3f7a3c" opacity="0.70"/><circle cx="127.9" cy="20.3" r="1.6" fill="#86c05a" opacity="0.43"/><circle cx="82.6" cy="5.8" r="1.6" fill="#1f4a3c" opacity="0.60"/><circle cx="14.7" cy="40.4" r="3.1" fill="#3f7a3c" opacity="0.52"/><circle cx="56.9" cy="24.2" r="3.8" fill="#5a9a4a" opacity="0.49"/><circle cx="136.1" cy="3.7" r="2.2" fill="#2a5a4a" opacity="0.69"/><circle cx="148.4" cy="37.7" r="1.9" fill="#2f6a44" opacity="0.49"/><circle cx="137.3" cy="10.1" r="4.6" fill="#5a9a4a" opacity="0.46"/><circle cx="60.6" cy="22.6" r="2.6" fill="#4a8a5a" opacity="0.49"/><circle cx="44.1" cy="41.7" r="4.0" fill="#5a9a4a" opacity="0.70"/><circle cx="82.3" cy="24.6" r="3.5" fill="#2a5a4a" opacity="0.43"/><circle cx="162.7" cy="5.6" r="3.7" fill="#5a9a4a" opacity="0.63"/><circle cx="55.2" cy="38.1" r="2.4" fill="#6aac50" opacity="0.37"/><circle cx="153.2" cy="8.7" r="2.8" fill="#4a8a5a" opacity="0.57"/><circle cx="112.2" cy="44.9" r="2.9" fill="#2a5a4a" opacity="0.70"/><circle cx="159.6" cy="29.5" r="3.2" fill="#1f4a3c" opacity="0.45"/><circle cx="41.0" cy="43.8" r="3.5" fill="#5a9a4a" opacity="0.48"/><circle cx="67.6" cy="37.1" r="4.4" fill="#3f7a3c" opacity="0.32"/><circle cx="42.8" cy="14.5" r="2.4" fill="#4a8a5a" opacity="0.46"/><circle cx="144.5" cy="32.3" r="4.9" fill="#5a9a4a" opacity="0.60"/><circle cx="79.5" cy="12.6" r="1.6" fill="#86c05a" opacity="0.38"/><circle cx="139.2" cy="39.8" r="3.6" fill="#1f4a3c" opacity="0.47"/><circle cx="96.5" cy="42.5" r="2.0" fill="#6aac50" opacity="0.54"/><circle cx="23.1" cy="36.0" r="3.9" fill="#4a8a5a" opacity="0.68"/><circle cx="3.9" cy="29.7" r="4.5" fill="#2a5a4a" opacity="0.53"/><circle cx="42.7" cy="20.3" r="2.0" fill="#5a9a4a" opacity="0.34"/><circle cx="15.6" cy="1.3" r="4.3" fill="#86c05a" opacity="0.33"/><circle cx="19.8" cy="14.1" r="3.4" fill="#6aac50" opacity="0.43"/><circle cx="82.0" cy="11.0" r="2.1" fill="#5a9a4a" opacity="0.64"/><circle cx="33.5" cy="37.2" r="3.6" fill="#3f7a3c" opacity="0.50"/><circle cx="123.8" cy="2.8" r="2.9" fill="#3f7a3c" opacity="0.65"/><circle cx="66.1" cy="28.3" r="2.4" fill="#2a5a4a" opacity="0.58"/><circle cx="52.1" cy="2.1" r="2.0" fill="#4a8a5a" opacity="0.59"/><circle cx="164.4" cy="40.9" r="4.8" fill="#86c05a" opacity="0.34"/><circle cx="99.8" cy="25.4" r="4.9" fill="#1f4a3c" opacity="0.42"/><circle cx="116.1" cy="26.3" r="1.7" fill="#2a5a4a" opacity="0.63"/><circle cx="162.2" cy="17.8" r="3.8" fill="#1f4a3c" opacity="0.47"/><circle cx="144.1" cy="32.6" r="3.3" fill="#86c05a" opacity="0.68"/><circle cx="112.9" cy="35.3" r="3.3" fill="#86c05a" opacity="0.46"/><circle cx="66.7" cy="11.3" r="3.8" fill="#3f7a3c" opacity="0.32"/><circle cx="45.7" cy="29.5" r="4.0" fill="#4a8a5a" opacity="0.48"/><circle cx="39.2" cy="19.3" r="2.3" fill="#86c05a" opacity="0.67"/><circle cx="108.6" cy="1.9" r="3.2" fill="#5a9a4a" opacity="0.59"/><circle cx="147.8" cy="39.0" r="2.4" fill="#6aac50" opacity="0.67"/><circle cx="64.1" cy="30.7" r="2.1" fill="#3f7a3c" opacity="0.38"/><circle cx="145.4" cy="35.8" r="3.4" fill="#2f6a44" opacity="0.33"/><circle cx="50.2" cy="47.2" r="4.9" fill="#86c05a" opacity="0.70"/><circle cx="27.6" cy="21.7" r="2.8" fill="#1f4a3c" opacity="0.53"/><circle cx="31.3" cy="4.1" r="2.6" fill="#3f7a3c" opacity="0.40"/><circle cx="140.3" cy="7.7" r="2.3" fill="#2a5a4a" opacity="0.58"/><circle cx="118.9" cy="7.9" r="3.1" fill="#4a8a5a" opacity="0.47"/><circle cx="102.4" cy="14.0" r="3.8" fill="#5a9a4a" opacity="0.55"/><circle cx="16.4" cy="48.8" r="1.6" fill="#2a5a4a" opacity="0.62"/><circle cx="155.2" cy="35.2" r="1.8" fill="#3f7a3c" opacity="0.53"/><circle cx="66.1" cy="22.1" r="2.3" fill="#86c05a" opacity="0.30"/><circle cx="90.4" cy="4.7" r="2.2" fill="#6aac50" opacity="0.45"/><circle cx="0.5" cy="8.3" r="3.4" fill="#4a8a5a" opacity="0.32"/><circle cx="31.1" cy="20.1" r="2.3" fill="#2a5a4a" opacity="0.62"/><circle cx="140.0" cy="46.3" r="3.8" fill="#3f7a3c" opacity="0.33"/><circle cx="72.3" cy="41.6" r="2.0" fill="#2a5a4a" opacity="0.50"/><circle cx="87.4" cy="26.8" r="3.1" fill="#86c05a" opacity="0.62"/><circle cx="56.1" cy="13.5" r="2.5" fill="#1f4a3c" opacity="0.56"/><circle cx="1.5" cy="40.3" r="2.2" fill="#2f6a44" opacity="0.34"/><circle cx="137.5" cy="18.0" r="1.7" fill="#1f4a3c" opacity="0.31"/><circle cx="82.2" cy="34.0" r="2.1" fill="#4a8a5a" opacity="0.34"/><circle cx="154.5" cy="26.9" r="2.2" fill="#4a8a5a" opacity="0.38"/><circle cx="158.4" cy="21.2" r="4.4" fill="#1f4a3c" opacity="0.39"/><circle cx="6.7" cy="17.6" r="1.6" fill="#5a9a4a" opacity="0.45"/><circle cx="79.4" cy="43.2" r="4.3" fill="#86c05a" opacity="0.66"/><circle cx="112.8" cy="10.9" r="4.9" fill="#2f6a44" opacity="0.46"/><circle cx="156.3" cy="46.8" r="1.5" fill="#1f4a3c" opacity="0.44"/><circle cx="101.9" cy="30.4" r="3.8" fill="#4a8a5a" opacity="0.36"/><circle cx="154.5" cy="26.8" r="2.2" fill="#4a8a5a" opacity="0.70"/><circle cx="92.1" cy="38.8" r="4.7" fill="#1f4a3c" opacity="0.40"/><circle cx="99.5" cy="17.6" r="3.5" fill="#1f4a3c" opacity="0.70"/><circle cx="151.3" cy="47.7" r="4.9" fill="#3f7a3c" opacity="0.60"/><circle cx="123.1" cy="10.6" r="4.6" fill="#1f4a3c" opacity="0.51"/><circle cx="20.4" cy="12.0" r="3.6" fill="#4a8a5a" opacity="0.49"/><circle cx="82.1" cy="9.5" r="2.4" fill="#2a5a4a" opacity="0.47"/><circle cx="62.8" cy="24.5" r="1.6" fill="#6aac50" opacity="0.64"/><circle cx="34.2" cy="39.5" r="3.6" fill="#1f4a3c" opacity="0.62"/><circle cx="122.3" cy="36.5" r="2.8" fill="#5a9a4a" opacity="0.46"/><circle cx="0.6" cy="33.2" r="3.5" fill="#6aac50" opacity="0.70"/><circle cx="32.7" cy="11.4" r="3.9" fill="#86c05a" opacity="0.31"/><circle cx="152.1" cy="6.6" r="3.1" fill="#1f4a3c" opacity="0.46"/><circle cx="104.3" cy="29.9" r="4.5" fill="#2f6a44" opacity="0.60"/><circle cx="62.2" cy="12.5" r="4.3" fill="#86c05a" opacity="0.67"/><circle cx="33.0" cy="42.4" r="4.1" fill="#2f6a44" opacity="0.40"/><circle cx="21.6" cy="37.6" r="1.9" fill="#6aac50" opacity="0.55"/><circle cx="107.2" cy="25.7" r="3.2" fill="#5a9a4a" opacity="0.59"/><circle cx="36.2" cy="34.3" r="4.7" fill="#1f4a3c" opacity="0.51"/><circle cx="1.5" cy="42.1" r="1.7" fill="#6aac50" opacity="0.58"/><circle cx="68.7" cy="6.2" r="5.0" fill="#3f7a3c" opacity="0.39"/><circle cx="116.9" cy="24.4" r="3.0" fill="#1f4a3c" opacity="0.31"/><circle cx="157.9" cy="7.1" r="4.1" fill="#4a8a5a" opacity="0.55"/><circle cx="75.8" cy="25.7" r="3.0" fill="#2a5a4a" opacity="0.39"/><circle cx="141.5" cy="44.9" r="4.2" fill="#2a5a4a" opacity="0.66"/><circle cx="124.4" cy="17.2" r="2.1" fill="#5a9a4a" opacity="0.62"/><circle cx="54.3" cy="16.4" r="4.9" fill="#2a5a4a" opacity="0.48"/><circle cx="33.5" cy="0.5" r="4.5" fill="#5a9a4a" opacity="0.39"/><circle cx="18.6" cy="26.7" r="3.7" fill="#2f6a44" opacity="0.35"/><circle cx="20.6" cy="35.0" r="3.4" fill="#2a5a4a" opacity="0.33"/><circle cx="40.3" cy="30.0" r="2.4" fill="#2f6a44" opacity="0.47"/><circle cx="130.9" cy="46.4" r="2.9" fill="#3f7a3c" opacity="0.68"/><circle cx="133.9" cy="34.4" r="1.6" fill="#4a8a5a" opacity="0.50"/><circle cx="148.0" cy="38.6" r="2.1" fill="#86c05a" opacity="0.67"/><circle cx="13.2" cy="48.2" r="4.0" fill="#86c05a" opacity="0.51"/><circle cx="27.2" cy="17.0" r="3.8" fill="#86c05a" opacity="0.46"/><circle cx="133.0" cy="2.7" r="3.5" fill="#6aac50" opacity="0.49"/><circle cx="136.2" cy="6.9" r="2.6" fill="#5a9a4a" opacity="0.46"/><circle cx="44.8" cy="33.9" r="1.7" fill="#2a5a4a" opacity="0.60"/><circle cx="137.3" cy="25.6" r="3.7" fill="#2f6a44" opacity="0.49"/><circle cx="92.4" cy="18.2" r="1.7" fill="#2a5a4a" opacity="0.55"/><circle cx="101.0" cy="21.7" r="3.0" fill="#3f7a3c" opacity="0.38"/><circle cx="5.3" cy="10.7" r="1.5" fill="#1f4a3c" opacity="0.61"/><circle cx="141.1" cy="48.2" r="4.1" fill="#2a5a4a" opacity="0.51"/><circle cx="62.3" cy="14.0" r="3.9" fill="#5a9a4a" opacity="0.49"/>
<path d="M100 50C110 46 126 46 136 50V58H100z" fill="#3a9a9a" opacity=".7"/><path d="M0 52C10 46 24 48 28 56V60H0z" fill="#3a8a7a" opacity=".7"/>
<path d="M52 42l2 12h2l2 -10l2 10h2l2-12" stroke="#5a8ac0" stroke-width="1.4" fill="none" opacity=".6"/>
<path d="M40 62C48 52 62 46 78 44C92 46 106 52 116 62C120 66 124 68 128 70H30C34 68 38 66 40 62z" fill="#8ab02c"/>
<path d="M74 46C78 40 82 34 84 26L92 26C92 34 94 42 98 48L90 50L84 48L80 52z" fill="#8a6a3c"/><path d="M74 46C78 40 82 34 84 26L88 26C86 36 82 44 78 50z" fill="#c08a4a"/>
<ellipse cx="87" cy="66" rx="6" ry="5.4" fill="#141a10"/>
<path d="M44 66C46 62 52 60 56 61.5C57 64 54 68 48 69z" fill="#8a8a8a"/><path d="M74 62l3-4l3 2v6l-4 1z" fill="#7a7a8a"/>
<path d="M145 66C148 58 156 56 166 56V68H146z" fill="#9a9a7a"/>
</g>
<ellipse cx="60" cy="64" rx="34" ry="14" fill="url(#vmlt)" opacity=".7"/><ellipse cx="130" cy="88" rx="50" ry="14" fill="url(#vmlt)"/>
<ellipse cx="6" cy="26" rx="26" ry="30" fill="url(#vmlt2)"/></svg></div></div><div class="nm"><span style="letter-spacing:0.238px">Big_Buck_Bunny.vimeo</span></div><div class="dt"><span style="letter-spacing:0.184px">2017-06-22</span></div></div>
<div class="card" style="left:1064px;top:421px"><div class="pv"><div class="abs" style="left:82px;top:57px;width:2px;height:2px;background:#fff;box-shadow:0 0 0 1px #f3f3f3"></div></div><div class="nm" style="text-align:left;left:16px"><span style="letter-spacing:0.27px">big_buck_bunny_640_51<span style="font-size:9.82px;letter-spacing:0">…</span></span></div><div class="dt"><span style="letter-spacing:0.184px">2019-03-04</span></div></div>
<div class="card" style="left:24px;top:627px"><div class="pv"><div class="th" style="left:0px;top:36px;width:166px;height:44px;"><svg width="166" height="44" viewBox="0 0 166 44" preserveAspectRatio="none"><rect width="166" height="44" fill="#fff"/>
<text x="0.6" y="26.2" font-family="DejaVu Sans, Liberation Sans, sans-serif" font-weight="400" font-size="31" fill="#3b6090" stroke="#3b6090" stroke-width="1.2" stroke-linejoin="round" textLength="110.5" lengthAdjust="spacingAndGlyphs">galileo</text>
<text x="22.8" y="43.2" font-family="DejaVu Sans, Liberation Sans, sans-serif" font-weight="400" font-size="10.6" fill="#858585" stroke="#858585" stroke-width=".45" textLength="88" lengthAdjust="spacingAndGlyphs">WEBAGENTUR</text>
<circle cx="144.3" cy="22" r="21.8" fill="#3a5f8f"/><ellipse cx="144.6" cy="22" rx="19.6" ry="14.4" transform="rotate(-52 144.6 22)" fill="#fff"/></svg></div></div><div class="nm"><span style="letter-spacing:0.115px">gw-logo_default.svg</span></div><div class="dt"><span style="letter-spacing:0.184px">2024-01-16</span></div></div>
<div class="card" style="left:232px;top:627px"><div class="pv"><div class="th" style="left:11px;top:1px;width:144px;height:115px;"><svg width="144" height="115" viewBox="0 0 144 115" preserveAspectRatio="none"><defs><linearGradient id="aurora1bg" x1="0" y1="0" x2="0" y2="1"><stop offset="0" stop-color="#0c0c24"/><stop offset=".16" stop-color="#17183f"/><stop offset=".32" stop-color="#263a7c"/><stop offset=".46" stop-color="#247f9a"/><stop offset=".55" stop-color="#2bbc96"/><stop offset=".63" stop-color="#30da7a"/><stop offset=".69" stop-color="#1c7a4a"/><stop offset="0.715" stop-color="#0e2a24"/><stop offset="0.735" stop-color="#14785a"/><stop offset="0.835" stop-color="#0f5a46"/><stop offset="1" stop-color="#040a0c"/></linearGradient>
<radialGradient id="aurora1pu" cx="0.5" cy="0.5" r="0.5"><stop offset="0" stop-color="#6a44b8" stop-opacity=".6"/><stop offset="1" stop-color="#6a3cb0" stop-opacity="0"/></radialGradient>
<radialGradient id="aurora1vg" cx="0.5" cy="0.5" r="0.5"><stop offset=".6" stop-color="#000" stop-opacity="0"/><stop offset="1" stop-color="#000" stop-opacity=".6"/></radialGradient>
<radialGradient id="aurora1cy" cx="0.5" cy="0.5" r="0.5"><stop offset="0" stop-color="#48c8d0" stop-opacity=".5"/><stop offset="1" stop-color="#48c8d0" stop-opacity="0"/></radialGradient><radialGradient id="aurora1gl" cx="0.5" cy="0.5" r="0.5"><stop offset="0" stop-color="#3cf09a" stop-opacity=".8"/><stop offset="1" stop-color="#3cf09a" stop-opacity="0"/></radialGradient>
<filter id="aurora1b"><feGaussianBlur stdDeviation="1"/></filter><filter id="aurora1b2"><feGaussianBlur stdDeviation="2.2"/></filter></defs>
<rect width="144" height="115" fill="url(#aurora1bg)"/>
<ellipse cx="47.52" cy="37.95" rx="31.68" ry="25.3" fill="url(#aurora1pu)"/>
<g filter="url(#aurora1b)" fill="none"><path d="M8.5 13.3L7.2 64.7" stroke="#5ce8c8" stroke-width="1.7" opacity="0.27"/><path d="M84.0 14.3L84.5 75.6" stroke="#58d8e0" stroke-width="0.8" opacity="0.27"/><path d="M55.6 24.4L54.4 75.8" stroke="#58d8e0" stroke-width="1.5" opacity="0.37"/><path d="M44.1 16.8L45.5 64.7" stroke="#8a6ad8" stroke-width="0.9" opacity="0.18"/><path d="M70.4 29.3L69.9 75.0" stroke="#4ab0e8" stroke-width="0.8" opacity="0.35"/><path d="M114.0 10.3L114.5 71.0" stroke="#48e0b8" stroke-width="0.9" opacity="0.34"/><path d="M86.0 16.3L86.0 69.3" stroke="#4ab0e8" stroke-width="0.9" opacity="0.20"/><path d="M69.0 26.9L70.3 69.5" stroke="#7a8ae8" stroke-width="1.8" opacity="0.40"/><path d="M92.5 20.5L93.8 60.7" stroke="#8a6ad8" stroke-width="1.6" opacity="0.20"/><path d="M25.9 10.3L26.5 72.1" stroke="#7a8ae8" stroke-width="0.7" opacity="0.23"/><path d="M105.5 33.1L104.3 75.7" stroke="#4ab0e8" stroke-width="0.8" opacity="0.21"/><path d="M50.7 11.0L49.5 70.6" stroke="#7a8ae8" stroke-width="1.8" opacity="0.15"/><path d="M28.2 21.5L28.1 70.6" stroke="#4ab0e8" stroke-width="1.2" opacity="0.34"/><path d="M37.2 22.9L37.5 68.8" stroke="#5ce8c8" stroke-width="1.6" opacity="0.26"/><path d="M93.3 31.5L92.6 66.7" stroke="#58d8e0" stroke-width="1.5" opacity="0.40"/><path d="M44.9 9.6L44.7 64.4" stroke="#7a8ae8" stroke-width="1.8" opacity="0.16"/><path d="M68.5 31.8L69.3 74.5" stroke="#4ab0e8" stroke-width="1.7" opacity="0.36"/><path d="M81.6 29.6L81.7 67.8" stroke="#8a6ad8" stroke-width="1.6" opacity="0.23"/><path d="M63.8 35.6L64.8 66.0" stroke="#5ce8c8" stroke-width="1.0" opacity="0.22"/><path d="M63.6 22.0L64.2 61.0" stroke="#7a8ae8" stroke-width="1.3" opacity="0.17"/><path d="M99.3 13.6L98.6 65.3" stroke="#4ab0e8" stroke-width="1.7" opacity="0.18"/><path d="M103.4 20.5L104.1 68.3" stroke="#7a8ae8" stroke-width="1.6" opacity="0.13"/><path d="M73.6 42.2L73.4 62.3" stroke="#4ab0e8" stroke-width="1.4" opacity="0.18"/><path d="M10.8 25.5L9.9 70.5" stroke="#4ab0e8" stroke-width="1.0" opacity="0.32"/><path d="M47.0 37.6L48.1 58.7" stroke="#4ab0e8" stroke-width="1.4" opacity="0.37"/><path d="M56.0 33.2L54.6 69.6" stroke="#48e0b8" stroke-width="1.2" opacity="0.20"/><path d="M58.4 9.4L57.7 57.5" stroke="#48e0b8" stroke-width="0.9" opacity="0.37"/><path d="M33.8 20.5L33.0 73.9" stroke="#4ab0e8" stroke-width="0.8" opacity="0.30"/><path d="M90.2 40.5L89.2 69.8" stroke="#5ce8c8" stroke-width="1.0" opacity="0.27"/><path d="M108.8 34.0L108.3 67.1" stroke="#7a8ae8" stroke-width="1.1" opacity="0.31"/><path d="M67.1 17.4L66.3 65.1" stroke="#8a6ad8" stroke-width="1.4" opacity="0.13"/><path d="M110.3 34.4L111.2 63.5" stroke="#58d8e0" stroke-width="0.7" opacity="0.19"/><path d="M60.3 45.9L59.7 60.1" stroke="#58d8e0" stroke-width="1.6" opacity="0.38"/><path d="M31.5 40.9L30.1 67.5" stroke="#58d8e0" stroke-width="1.6" opacity="0.24"/><path d="M59.0 26.8L60.0 70.1" stroke="#5ce8c8" stroke-width="1.5" opacity="0.21"/><path d="M25.4 12.5L26.7 73.3" stroke="#58d8e0" stroke-width="1.1" opacity="0.36"/><path d="M74.1 16.6L74.6 61.5" stroke="#58d8e0" stroke-width="1.6" opacity="0.13"/><path d="M86.1 25.8L86.9 64.9" stroke="#5ce8c8" stroke-width="1.7" opacity="0.26"/><path d="M41.6 18.0L41.5 62.2" stroke="#58d8e0" stroke-width="0.8" opacity="0.28"/><path d="M101.3 41.2L101.2 59.8" stroke="#48e0b8" stroke-width="0.9" opacity="0.22"/><path d="M106.5 37.7L106.3 72.8" stroke="#8a6ad8" stroke-width="1.4" opacity="0.22"/><path d="M27.3 17.5L26.2 62.3" stroke="#4ab0e8" stroke-width="1.6" opacity="0.32"/><path d="M40.7 33.7L39.4 65.8" stroke="#4ab0e8" stroke-width="0.7" opacity="0.34"/><path d="M65.7 27.1L65.5 64.0" stroke="#5ce8c8" stroke-width="0.8" opacity="0.19"/><path d="M41.9 40.6L42.7 63.2" stroke="#58d8e0" stroke-width="0.7" opacity="0.32"/><path d="M73.1 40.5L73.2 73.8" stroke="#8a6ad8" stroke-width="1.3" opacity="0.17"/></g>
<ellipse cx="64.8" cy="72.45" rx="60.48" ry="8.05" fill="url(#aurora1gl)"/><ellipse cx="72" cy="51.75" rx="54.72" ry="23" fill="url(#aurora1cy)"/>
<g filter="url(#aurora1b2)"><path d="M103.68 75.9L144 51.75V71.3L112.32 79.35z" fill="#0c2030" opacity=".8"/>
<path d="M36 82.225C57.6 71.875 86.4 71.875 115.2 82.225z" fill="#1a5a4a" opacity=".75"/></g>
<rect y="81.625" width="144" height="1.3" fill="#0a1a18" opacity=".9"/>
<ellipse cx="72" cy="93.725" rx="43.2" ry="11.5" fill="url(#aurora1gl)" opacity=".45"/>
<rect width="144" height="115" fill="url(#aurora1vg)"/></svg></div></div><div class="nm"><span style="letter-spacing:0.124px">iStock-617592360.jpg</span></div><div class="dt"><span style="letter-spacing:0.184px">2020-01-13</span></div></div>
<div class="card" style="left:440px;top:627px"><div class="pv"><div class="th" style="left:0px;top:3px;width:166px;height:111px;"><svg width="166" height="111" viewBox="0 0 166 111" preserveAspectRatio="none"><defs><linearGradient id="aurora2bg" x1="0" y1="0" x2="0" y2="1"><stop offset="0" stop-color="#0c0c24"/><stop offset=".16" stop-color="#17183f"/><stop offset=".32" stop-color="#263a7c"/><stop offset=".46" stop-color="#247f9a"/><stop offset=".55" stop-color="#2bbc96"/><stop offset=".63" stop-color="#30da7a"/><stop offset=".69" stop-color="#1c7a4a"/><stop offset="0.725" stop-color="#0e2a24"/><stop offset="0.745" stop-color="#14785a"/><stop offset="0.845" stop-color="#0f5a46"/><stop offset="1" stop-color="#040a0c"/></linearGradient>
<radialGradient id="aurora2pu" cx="0.5" cy="0.5" r="0.5"><stop offset="0" stop-color="#6a44b8" stop-opacity=".6"/><stop offset="1" stop-color="#6a3cb0" stop-opacity="0"/></radialGradient>
<radialGradient id="aurora2vg" cx="0.5" cy="0.5" r="0.5"><stop offset=".6" stop-color="#000" stop-opacity="0"/><stop offset="1" stop-color="#000" stop-opacity=".6"/></radialGradient>
<radialGradient id="aurora2cy" cx="0.5" cy="0.5" r="0.5"><stop offset="0" stop-color="#48c8d0" stop-opacity=".5"/><stop offset="1" stop-color="#48c8d0" stop-opacity="0"/></radialGradient><radialGradient id="aurora2gl" cx="0.5" cy="0.5" r="0.5"><stop offset="0" stop-color="#3cf09a" stop-opacity=".8"/><stop offset="1" stop-color="#3cf09a" stop-opacity="0"/></radialGradient>
<filter id="aurora2b"><feGaussianBlur stdDeviation="1"/></filter><filter id="aurora2b2"><feGaussianBlur stdDeviation="2.2"/></filter></defs>
<rect width="166" height="111" fill="url(#aurora2bg)"/>
<ellipse cx="54.78" cy="36.63" rx="36.52" ry="24.42" fill="url(#aurora2pu)"/>
<g filter="url(#aurora2b)" fill="none"><path d="M93.2 12.1L94.2 66.5" stroke="#5ce8c8" stroke-width="1.2" opacity="0.30"/><path d="M54.3 27.6L54.1 57.4" stroke="#5ce8c8" stroke-width="1.6" opacity="0.38"/><path d="M129.4 23.9L128.2 58.1" stroke="#58d8e0" stroke-width="0.7" opacity="0.20"/><path d="M53.3 33.9L52.9 70.2" stroke="#8a6ad8" stroke-width="1.4" opacity="0.39"/><path d="M108.8 30.9L107.3 64.5" stroke="#58d8e0" stroke-width="1.4" opacity="0.37"/><path d="M16.8 29.5L16.9 55.9" stroke="#7a8ae8" stroke-width="1.6" opacity="0.13"/><path d="M10.0 42.3L10.6 68.6" stroke="#7a8ae8" stroke-width="1.2" opacity="0.38"/><path d="M86.1 18.9L85.0 68.2" stroke="#48e0b8" stroke-width="0.9" opacity="0.30"/><path d="M62.9 12.6L63.4 67.0" stroke="#7a8ae8" stroke-width="0.7" opacity="0.30"/><path d="M50.8 9.9L51.0 73.2" stroke="#58d8e0" stroke-width="1.4" opacity="0.30"/><path d="M110.1 19.1L110.2 56.0" stroke="#4ab0e8" stroke-width="1.0" opacity="0.18"/><path d="M94.8 24.1L93.3 64.7" stroke="#5ce8c8" stroke-width="0.9" opacity="0.28"/><path d="M15.0 35.7L13.7 62.6" stroke="#7a8ae8" stroke-width="0.7" opacity="0.21"/><path d="M35.4 17.2L36.0 63.3" stroke="#8a6ad8" stroke-width="1.0" opacity="0.27"/><path d="M123.0 10.3L124.0 70.6" stroke="#5ce8c8" stroke-width="1.5" opacity="0.36"/><path d="M87.9 42.7L87.2 65.8" stroke="#58d8e0" stroke-width="1.8" opacity="0.18"/><path d="M131.7 38.3L132.8 61.8" stroke="#4ab0e8" stroke-width="1.6" opacity="0.38"/><path d="M114.1 26.2L114.4 56.7" stroke="#48e0b8" stroke-width="1.3" opacity="0.17"/><path d="M107.3 34.3L105.9 60.5" stroke="#7a8ae8" stroke-width="0.8" opacity="0.13"/><path d="M99.5 42.3L99.5 66.1" stroke="#58d8e0" stroke-width="1.7" opacity="0.16"/><path d="M54.3 41.9L53.5 59.0" stroke="#4ab0e8" stroke-width="1.0" opacity="0.14"/><path d="M126.0 31.0L125.2 57.4" stroke="#48e0b8" stroke-width="0.6" opacity="0.15"/><path d="M76.7 42.5L76.6 58.3" stroke="#5ce8c8" stroke-width="1.2" opacity="0.31"/><path d="M17.0 19.4L17.6 62.5" stroke="#8a6ad8" stroke-width="0.7" opacity="0.35"/><path d="M108.2 42.5L106.7 70.3" stroke="#8a6ad8" stroke-width="1.6" opacity="0.34"/><path d="M33.6 11.1L33.5 59.9" stroke="#48e0b8" stroke-width="0.9" opacity="0.17"/><path d="M105.9 29.7L106.4 67.7" stroke="#7a8ae8" stroke-width="1.0" opacity="0.33"/><path d="M125.5 40.9L125.4 71.9" stroke="#8a6ad8" stroke-width="0.6" opacity="0.13"/><path d="M101.3 10.5L100.6 66.7" stroke="#8a6ad8" stroke-width="1.7" opacity="0.27"/><path d="M38.6 26.3L38.3 60.6" stroke="#5ce8c8" stroke-width="1.6" opacity="0.29"/><path d="M89.4 30.5L89.6 65.9" stroke="#58d8e0" stroke-width="1.5" opacity="0.26"/><path d="M48.8 39.8L49.0 61.9" stroke="#5ce8c8" stroke-width="1.2" opacity="0.14"/><path d="M70.1 24.3L69.5 66.9" stroke="#7a8ae8" stroke-width="1.2" opacity="0.36"/><path d="M94.0 39.0L94.6 67.1" stroke="#48e0b8" stroke-width="0.8" opacity="0.15"/><path d="M70.6 11.1L69.4 59.5" stroke="#58d8e0" stroke-width="1.0" opacity="0.37"/><path d="M111.5 10.7L112.5 65.8" stroke="#4ab0e8" stroke-width="0.6" opacity="0.26"/><path d="M107.4 18.0L107.6 61.7" stroke="#5ce8c8" stroke-width="1.5" opacity="0.32"/><path d="M87.7 23.3L86.8 69.8" stroke="#48e0b8" stroke-width="1.1" opacity="0.22"/><path d="M98.7 37.9L99.5 69.2" stroke="#7a8ae8" stroke-width="0.8" opacity="0.27"/><path d="M67.8 42.7L69.0 69.0" stroke="#5ce8c8" stroke-width="1.4" opacity="0.14"/><path d="M122.5 36.4L123.4 65.2" stroke="#48e0b8" stroke-width="1.5" opacity="0.32"/><path d="M22.8 29.7L23.5 55.6" stroke="#8a6ad8" stroke-width="1.6" opacity="0.12"/><path d="M37.2 25.8L38.6 56.9" stroke="#4ab0e8" stroke-width="1.2" opacity="0.17"/><path d="M88.2 25.4L87.6 64.7" stroke="#48e0b8" stroke-width="1.6" opacity="0.33"/><path d="M73.4 28.6L74.3 64.3" stroke="#5ce8c8" stroke-width="0.8" opacity="0.23"/><path d="M22.4 17.4L23.5 72.7" stroke="#5ce8c8" stroke-width="1.0" opacity="0.32"/></g>
<ellipse cx="74.7" cy="69.93" rx="69.72" ry="7.77" fill="url(#aurora2gl)"/><ellipse cx="83" cy="49.95" rx="63.08" ry="22.2" fill="url(#aurora2cy)"/>
<g filter="url(#aurora2b2)"><path d="M119.52 73.26L166 49.95V68.82L129.48 76.59z" fill="#0c2030" opacity=".8"/>
<path d="M41.5 80.475C66.4 70.485 99.6 70.485 132.8 80.475z" fill="#1a5a4a" opacity=".75"/></g>
<rect y="79.875" width="166" height="1.3" fill="#0a1a18" opacity=".9"/>
<ellipse cx="83" cy="91.575" rx="49.8" ry="11.1" fill="url(#aurora2gl)" opacity=".45"/>
<rect width="166" height="111" fill="url(#aurora2vg)"/></svg></div></div><div class="nm"><span style="letter-spacing:0.124px">iStock-494093714.jpg</span></div><div class="dt"><span style="letter-spacing:0.184px">2020-01-13</span></div></div>
<div class="card" style="left:648px;top:627px"><div class="pv"><div class="th" style="left:2px;top:1px;width:162px;height:115px;"><svg width="162" height="115" viewBox="0 0 162 115" preserveAspectRatio="none"><defs><linearGradient id="a3bg" x1="0" y1="0" x2="0" y2="1"><stop offset="0" stop-color="#1f5a80"/><stop offset=".35" stop-color="#2a6c94"/><stop offset=".7" stop-color="#2a6a8c"/><stop offset=".82" stop-color="#1c4a68"/><stop offset=".86" stop-color="#3a86a8"/><stop offset="1" stop-color="#1a5272"/></linearGradient>
<linearGradient id="a3r" x1="0" y1="0" x2="0" y2="1"><stop offset="0" stop-color="#7ae0dc" stop-opacity=".95"/><stop offset=".7" stop-color="#b4f6ea" stop-opacity=".95"/><stop offset="1" stop-color="#9aeee0" stop-opacity=".4"/></linearGradient>
<linearGradient id="a3m" x1="0" y1="0" x2="1" y2="1"><stop offset="0" stop-color="#26282c"/><stop offset=".5" stop-color="#3c4a56"/><stop offset="1" stop-color="#1c2c3a"/></linearGradient>
<filter id="a3b"><feGaussianBlur stdDeviation="2.4"/></filter><filter id="a3b2"><feGaussianBlur stdDeviation=".6"/></filter><filter id="a3b3"><feGaussianBlur stdDeviation="1.2"/></filter></defs>
<rect width="162" height="115" fill="url(#a3bg)"/>
<g filter="url(#a3b)">
<path d="M40 0H66L80 60L70 56z" fill="#58a8c0" opacity=".65"/><path d="M0 8L22 4L72 58L60 58z" fill="#4690b0" opacity=".55"/>
<path d="M86 16L98 14L96 68L84 68z" fill="#6cd0d0" opacity=".6"/>
<path d="M92 76C104 58 130 48 162 52V66C136 62 112 68 96 80z" fill="#86e4d0" opacity=".75"/>
<path d="M98 50C116 38 140 30 162 32V50C140 46 118 52 100 62z" fill="#5ab8c4" opacity=".55"/>
<path d="M110 28C125 20 145 16 162 18V30C145 28 128 32 112 40z" fill="#3e98b4" opacity=".45"/>
<path d="M100 84C120 76 140 78 162 82V90H100z" fill="#1a3c5c" opacity=".7"/>
<path d="M0 0H36L18 28L0 38z" fill="#184a70" opacity=".5"/><path d="M122 0H162V16C148 12 134 6 122 0z" fill="#184a6c" opacity=".6"/>
</g>
<path d="M70 0H82L85 30L83 62L78 66L80 30z" fill="url(#a3r)" filter="url(#a3b3)"/>
<g filter="url(#txmt)"><g filter="url(#a3b2)">
<path d="M0 33L4 32L10 36L20 42L30 50L40 58L50 66L56 62L62 60L68 58.5L72 60L78 66L86 74L92 78L98 86L104 92L108 94H0z" fill="url(#a3m)"/>
<path d="M6 48L12 46L20 56L14 70L8 80L4 66z M56 64L66 60L70 62L62 72z M86 76L92 80L96 88L90 84z M22 60L34 62L44 74L30 80L20 76z M40 62L48 70L52 82L44 78z M66 70L76 72L84 84L70 82z M10 84L30 82L60 86L90 90L50 92L10 90z" fill="#8fb8d0" opacity=".4"/>
<path d="M0 86L40 82L80 88L108 94H0z" fill="#8ec0d8" opacity=".55"/>
</g></g>
<g filter="url(#a3b2)">
<path d="M111 94C113 88 118 86 122 88C126 90 128 92 130 94z" fill="#1a2630"/>
<rect y="93.5" width="162" height="2.5" fill="#1f4a68"/>
<path d="M0 96H162V100C140 100 120 102 104 108L96 115H0z" fill="#1a3c54"/>
<path d="M0 97H100L162 99V103C130 102 110 104 100 112L96 115C100 108 90 102 60 101L0 100z" fill="#5aa4c4" opacity=".6"/>
<path d="M104 104C120 100 140 100 162 102V115H98z" fill="#3a8eb4"/>
<path d="M96 115L104 106L112 106L106 115z" fill="#7ad0dc" opacity=".7"/>
</g></svg></div></div><div class="nm"><span style="letter-spacing:0.124px">iStock-934676026.jpg</span></div><div class="dt"><span style="letter-spacing:0.184px">2020-01-13</span></div></div>
<div id="panel">
<div id="panelhead"><div id="paneltitle"><span style="letter-spacing:-0.053px">Zwischenablage</span></div></div>
<div class="prow" style="top:43px"><svg class="ri" width="16" height="16" viewBox="0 0 16 16"><circle cx="8" cy="8" r="7" fill="#1a1a1a"/><path d="M4.4 8.4L6.9 10.8L11.6 5.8" fill="none" stroke="#fff" stroke-width="1.6"/></svg><div class="rt"><span style="letter-spacing:0.044px">Normal (Einzelauswahlmodus)</span></div>
<div class="abs" style="left:1007px;top:11px;width:289px;height:25px;border:1px solid #bbb;border-radius:2px;background:#f0f0f0;box-shadow:0 1px 1px rgba(0,0,0,.12);font-size:10.5px;line-height:24px;white-space:nowrap;color:#000"><div class="abs" style="left:134px;top:-1px;width:154px;height:25px;background:#b9b9b9;border-radius:0 2px 2px 0;box-shadow:inset 0 1px 2px rgba(0,0,0,.12)"></div>
<svg class="abs" style="left:8px;top:4px" width="16" height="16" viewBox="0 0 16 16"><rect x="3.5" y="2.6" width="9" height="11.8" rx=".8" fill="none" stroke="#000" stroke-width="1.2"/><path d="M4.6 2.6H11.4L10.6 4.2H5.4z" fill="#000"/><circle cx="8" cy="2.4" r="1" fill="none" stroke="#000" stroke-width=".8"/></svg>
<span class="abs" style="left:28px;top:0"><span style="letter-spacing:-0px">Elemente kopieren</span></span>
<svg class="abs" style="left:143px;top:4px" width="16" height="16" viewBox="0 0 16 16"><g fill="none" stroke="#111" stroke-width="1.4"><circle cx="3.6" cy="3.6" r="2"/><circle cx="3.6" cy="12.4" r="2"/></g><path d="M5 5L14 11.4M5 11L14 4.6" stroke="#111" stroke-width="1.9" fill="none"/></svg>
<span class="abs" style="left:163px;top:0"><span style="letter-spacing:-0.06px">Elemente verschieben</span></span></div>
</div>
<div class="prow" style="top:92px"><svg class="ri" width="16" height="16" viewBox="0 0 16 16"><circle cx="8" cy="8" r="6.5" fill="none" stroke="#1a1a1a" stroke-width="1"/></svg><div class="rt"><span style="letter-spacing:-0.018px">Zwischenablage #1 (Mehrfachauswahlmodus)</span></div></div>
</div>

</div>
<div class="abs" style="left:1901px;top:45px;width:1px;height:991px;background:#fafafa"></div>
</body>
</html>
